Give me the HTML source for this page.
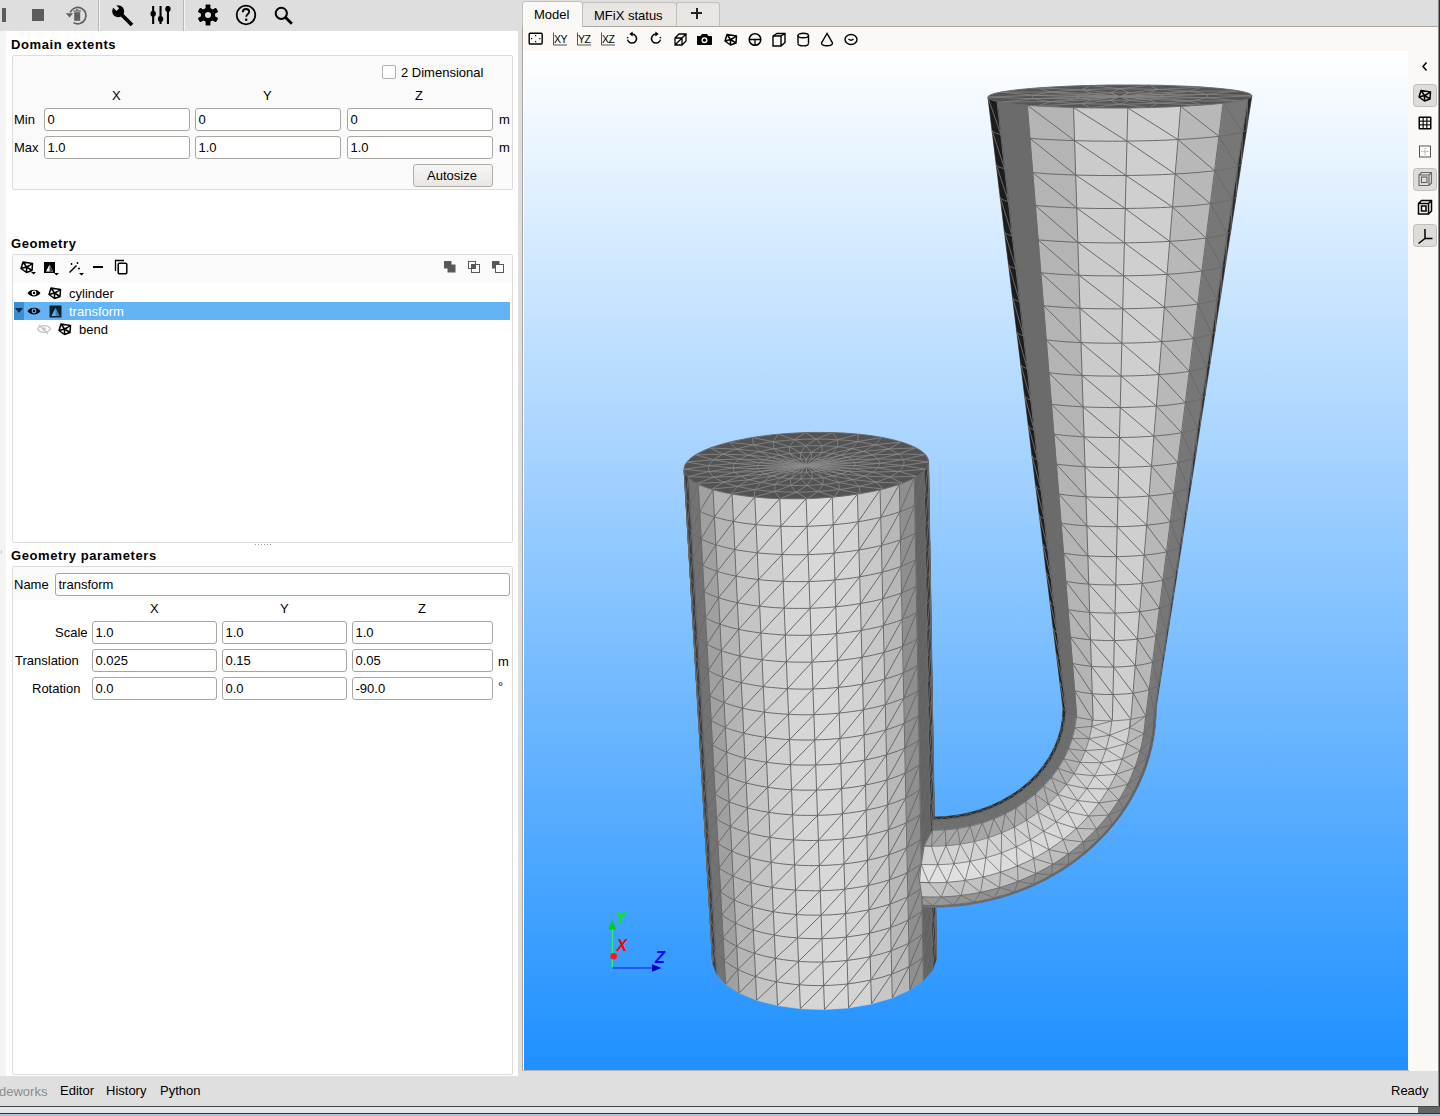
<!DOCTYPE html>
<html><head><meta charset="utf-8">
<style>
*{box-sizing:border-box}
html,body{margin:0;padding:0}
body{width:1440px;height:1116px;position:relative;overflow:hidden;background:#dfdfdf;font-family:"Liberation Sans",sans-serif;font-size:13px;color:#000}
.a{position:absolute}
.t{position:absolute;white-space:nowrap;line-height:1}
.b{font-weight:bold;letter-spacing:0.6px}
.inp{position:absolute;background:#fff;border:1px solid #a9a6a2;border-radius:3px;height:23px}
.inp span{position:absolute;left:2.5px;top:4px;line-height:1;white-space:nowrap}
.grp{position:absolute;background:#fafafa;border:1px solid #dcdcdc;border-radius:2px}
svg{position:absolute;overflow:visible}
</style></head><body>
<svg width="0" height="0" style="position:absolute;left:0;top:0"><defs>
<symbol id="poly" viewBox="0 0 16 16"><path d="M4 3 L13.5 4.5 L13 11.5 L7.5 13.5 L2 9.5 Z M7.5 8 L4 3 M7.5 8 L13 11.5 M7.5 8 L7.5 13.5 M7.5 8 L2 9.5 M7.5 8 L10.5 6.5 L13.5 4.5" fill="none" stroke="#000" stroke-width="1.5" stroke-linejoin="round"/></symbol>
</defs></svg>
<!-- top toolbar -->
<div class="a" style="left:0;top:0;width:522px;height:31px;background:#dedede"></div>
<div class="a" style="left:2px;top:8px;width:4px;height:14px;background:#5c5c5c"></div>
<div class="a" style="left:32px;top:9px;width:12px;height:12px;background:#5c5c5c"></div>
<svg style="left:64px;top:2.5px" width="24" height="24" viewBox="0 0 24 24">
 <path d="M6.2 9.5 A8.2 8.2 0 1 1 9.5 19.6" fill="none" stroke="#606060" stroke-width="1.7"/>
 <path d="M1.8 10.2 L9.2 10.2 L5.5 14.6 Z" fill="#606060"/>
 <rect x="10.2" y="9.2" width="6" height="8.6" fill="#606060"/>
 <rect x="9.4" y="7.4" width="7.6" height="1.2" fill="#606060"/>
 <rect x="11.8" y="6.4" width="2.8" height="1" fill="#606060"/>
</svg>
<div class="a" style="left:98px;top:0;width:1px;height:31px;background:#b8b8b8"></div>
<div class="a" style="left:99px;top:0;width:1px;height:31px;background:#f4f4f4"></div>
<div class="a" style="left:183px;top:0;width:1px;height:31px;background:#b8b8b8"></div>
<div class="a" style="left:184px;top:0;width:1px;height:31px;background:#f4f4f4"></div>
<!-- wrench -->
<svg style="left:111px;top:4px" width="24" height="23" viewBox="0 0 24 23">
 <path d="M9 9 L21 21" stroke="#000" stroke-width="3.8" stroke-linecap="butt"/>
 <circle cx="7.2" cy="7.2" r="6" fill="#000"/>
 <path d="M1 2.5 L5.5 7 L8.2 4.3 L3.7 -0.2 Z" fill="#dedede"/>
</svg>
<!-- sliders -->
<svg style="left:150px;top:5px" width="22" height="20" viewBox="0 0 22 20">
 <rect x="2.1" y="1" width="2.1" height="18" fill="#000"/><ellipse cx="3.15" cy="8.8" rx="2.7" ry="3" fill="#000"/>
 <rect x="9.5" y="1" width="2.1" height="18" fill="#000"/><ellipse cx="10.55" cy="14" rx="2.7" ry="3" fill="#000"/>
 <rect x="16.9" y="1" width="2.1" height="18" fill="#000"/><ellipse cx="17.95" cy="4" rx="2.7" ry="3" fill="#000"/>
</svg>
<!-- gear -->
<svg style="left:197px;top:4px" width="22" height="22" viewBox="0 0 22 22">
 <g transform="translate(11 11)" fill="#000">
  <circle r="7.2"/>
  <rect x="-2.4" y="-10.5" width="4.8" height="21" rx="0.8"/>
  <rect x="-2.4" y="-10.5" width="4.8" height="21" rx="0.8" transform="rotate(60)"/>
  <rect x="-2.4" y="-10.5" width="4.8" height="21" rx="0.8" transform="rotate(120)"/>
 </g>
 <circle cx="11" cy="11" r="3" fill="#dedede"/>
</svg>
<!-- help -->
<svg style="left:235px;top:4px" width="22" height="22" viewBox="0 0 22 22">
 <circle cx="11" cy="11" r="9.3" fill="none" stroke="#000" stroke-width="1.8"/>
 <path d="M7.8 8.3 C7.8 6 9.3 5 11 5 C12.9 5 14.2 6.2 14.2 7.8 C14.2 10 11.2 10.3 11.2 12.8" fill="none" stroke="#000" stroke-width="1.9"/>
 <rect x="10.1" y="14.6" width="2.2" height="2.2" fill="#000"/>
</svg>
<!-- search -->
<svg style="left:274px;top:6px" width="20" height="19" viewBox="0 0 20 19">
 <circle cx="7.3" cy="7.3" r="5.6" fill="none" stroke="#000" stroke-width="2"/>
 <path d="M11.3 11.3 L17.8 17.8" stroke="#000" stroke-width="2.8"/>
</svg>
<!-- left panel -->
<div class="a" style="left:0;top:31px;width:6px;height:1045px;background:#f4f4f4"></div>
<div class="a" style="left:6px;top:31px;width:512px;height:1045px;background:#fff"></div>
<div class="a" style="left:518px;top:31px;width:4px;height:1045px;background:#dedede"></div>
<div class="t b" style="left:11px;top:38px;font-size:13px">Domain extents</div>
<div class="grp" style="left:12px;top:55px;width:501px;height:135px"></div>
<div class="a" style="left:382px;top:65px;width:14px;height:14px;border:1px solid #b4b0ac;border-radius:2px;background:#fff"></div>
<div class="t" style="left:401px;top:66px">2 Dimensional</div>
<div class="t" style="left:112px;top:89px">X</div>
<div class="t" style="left:263px;top:89px">Y</div>
<div class="t" style="left:415px;top:89px">Z</div>
<div class="t" style="left:14px;top:113px">Min</div>
<div class="t" style="left:14px;top:141px">Max</div>
<div class="inp" style="left:44px;top:108px;width:146px"><span>0</span></div>
<div class="inp" style="left:195px;top:108px;width:146px"><span>0</span></div>
<div class="inp" style="left:347px;top:108px;width:146px"><span>0</span></div>
<div class="inp" style="left:44px;top:136px;width:146px"><span>1.0</span></div>
<div class="inp" style="left:195px;top:136px;width:146px"><span>1.0</span></div>
<div class="inp" style="left:347px;top:136px;width:146px"><span>1.0</span></div>
<div class="t" style="left:499px;top:113px">m</div>
<div class="t" style="left:499px;top:141px">m</div>
<div class="a" style="left:413px;top:164px;width:80px;height:23px;border:1px solid #b0ada9;border-radius:3px;background:linear-gradient(#f6f5f4,#e9e7e4)"></div>
<div class="t" style="left:427px;top:169px">Autosize</div>

<div class="t b" style="left:11px;top:237px;font-size:13px">Geometry</div>
<div class="a" style="left:12px;top:254px;width:501px;height:289px;border:1px solid #dcdcdc;border-radius:2px;background:#fff"></div>
<div class="a" style="left:13px;top:255px;width:499px;height:28px;background:#fafafa"></div>
<!-- geometry toolbar icons -->
<svg style="left:19px;top:259px" width="19" height="17" viewBox="0 0 19 17">
 <use href="#poly" x="0" y="0" width="16" height="16"/>
 <path d="M12 13 L17 13 L14.5 15.5 Z" fill="#000"/>
</svg>
<svg style="left:43px;top:261px" width="18" height="15" viewBox="0 0 18 15">
 <rect x="1" y="1" width="11" height="11" fill="#000"/>
 <path d="M3 10.5 L6.5 3.5 L10 10.5 Z" fill="#fff"/>
 <path d="M6.5 3.5 L10 10.5 L6.5 10.5 Z" fill="#444"/>
 <path d="M11 12 L16 12 L13.5 14.5 Z" fill="#000"/>
</svg>
<svg style="left:68px;top:261px" width="17" height="15" viewBox="0 0 17 15">
 <path d="M1.5 11.5 L8.5 4.5" stroke="#000" stroke-width="1.5"/>
 <path d="M3.5 2 L3.5 4 M2.5 3 L4.5 3 M9.5 1 L9.5 3 M8.5 2 L10.5 2 M11 6.5 L11 8.5 M10 7.5 L12 7.5" stroke="#000" stroke-width="0.9"/>
 <path d="M11 12 L16 12 L13.5 14.5 Z" fill="#000"/>
</svg>
<div class="a" style="left:93px;top:266px;width:10px;height:2px;background:#000"></div>
<svg style="left:114px;top:259px" width="15" height="16" viewBox="0 0 15 16">
 <path d="M1.5 12 L1.5 1.5 L10 1.5" fill="none" stroke="#000" stroke-width="1.3"/>
 <rect x="4.2" y="4.2" width="8.6" height="10.6" rx="1.2" fill="none" stroke="#000" stroke-width="1.5"/>
</svg>
<svg style="left:443px;top:260px" width="14" height="14" viewBox="0 0 14 14">
 <rect x="1" y="1" width="7.5" height="7.5" fill="#585858"/><rect x="4.5" y="4.5" width="8" height="8" fill="#585858"/>
</svg>
<svg style="left:467px;top:260px" width="14" height="14" viewBox="0 0 14 14">
 <rect x="1.5" y="1.5" width="7" height="7" fill="none" stroke="#585858" stroke-width="1"/>
 <rect x="4.5" y="4.5" width="8" height="8" fill="none" stroke="#585858" stroke-width="1"/>
 <rect x="4.5" y="4.5" width="4" height="4" fill="#585858"/>
</svg>
<svg style="left:491px;top:260px" width="14" height="14" viewBox="0 0 14 14">
 <rect x="1" y="1" width="7.5" height="7.5" fill="#585858"/>
 <rect x="4.5" y="4.5" width="8" height="8" fill="#fff" stroke="#585858" stroke-width="1"/>
</svg>
<!-- tree rows -->
<svg style="left:27px;top:288px" width="14" height="10" viewBox="0 0 14 10">
 <path d="M0.5 5 C3 0.5 11 0.5 13.5 5 C11 9.5 3 9.5 0.5 5 Z" fill="#000"/>
 <circle cx="7" cy="5" r="2.4" fill="#fff"/><circle cx="7" cy="5" r="1.2" fill="#000"/>
</svg>
<svg style="left:47px;top:285px" width="16" height="16" viewBox="0 0 16 16"><use href="#poly" width="16" height="16"/></svg>
<div class="t" style="left:69px;top:287px">cylinder</div>
<div class="a" style="left:14px;top:302px;width:496px;height:18px;background:#64b3f4"></div>
<div class="a" style="left:14px;top:302px;width:10px;height:18px;background:#3d8fd3"></div>
<svg style="left:14px;top:307px" width="10" height="8" viewBox="0 0 10 8"><path d="M1 1 L9 1 L5 6 Z" fill="#0a2a4a"/></svg>
<svg style="left:27px;top:306px" width="14" height="10" viewBox="0 0 14 10">
 <path d="M0.5 5 C3 0.5 11 0.5 13.5 5 C11 9.5 3 9.5 0.5 5 Z" fill="#000"/>
 <circle cx="7" cy="5" r="2.4" fill="#64b3f4"/><circle cx="7" cy="5" r="1.2" fill="#000"/>
</svg>
<svg style="left:49px;top:305px" width="13" height="13" viewBox="0 0 13 13">
 <rect x="0.5" y="0.5" width="12" height="12" fill="#0d2233"/>
 <path d="M2.5 11 L6.5 3 L10.5 11 Z" fill="#64b3f4"/><path d="M6.5 3 L10.5 11 L6.5 11 Z" fill="#3b7fb8"/>
</svg>
<div class="t" style="left:69px;top:305px;color:#fff">transform</div>
<svg style="left:37px;top:324px" width="14" height="11" viewBox="0 0 14 11">
 <path d="M0.5 5 C3 0.5 11 0.5 13.5 5 C11 9.5 3 9.5 0.5 5 Z" fill="none" stroke="#c4c4c4" stroke-width="1.4"/>
 <circle cx="7" cy="5" r="1.8" fill="#c4c4c4"/><path d="M2 1 L11 10" stroke="#c4c4c4" stroke-width="1.3"/>
</svg>
<svg style="left:57px;top:321px" width="16" height="16" viewBox="0 0 16 16"><use href="#poly" width="16" height="16"/></svg>
<div class="t" style="left:79px;top:323px">bend</div>
<!-- splitter dots -->
<div class="a" style="left:255px;top:544px;width:17px;height:1px;background:repeating-linear-gradient(90deg,#9a9a9a 0 1px,transparent 1px 3px)"></div>
<div class="t" style="left:0px;top:548px;font-size:9px;color:#bbb">&lsaquo;</div>

<div class="t b" style="left:11px;top:549px;font-size:13px">Geometry parameters</div>
<div class="a" style="left:12px;top:566px;width:501px;height:509px;border:1px solid #dcdcdc;border-radius:2px;background:#fff"></div>
<div class="a" style="left:13px;top:567px;width:499px;height:33px;background:#fafafa"></div>
<div class="t" style="left:14px;top:578px">Name</div>
<div class="inp" style="left:55px;top:573px;width:455px"><span>transform</span></div>
<div class="t" style="left:150px;top:602px">X</div>
<div class="t" style="left:280px;top:602px">Y</div>
<div class="t" style="left:418px;top:602px">Z</div>
<div class="t" style="left:55px;top:626px">Scale</div>
<div class="t" style="left:15px;top:654px">Translation</div>
<div class="t" style="left:32px;top:682px">Rotation</div>
<div class="inp" style="left:92px;top:621px;width:125px"><span>1.0</span></div>
<div class="inp" style="left:222px;top:621px;width:125px"><span>1.0</span></div>
<div class="inp" style="left:352px;top:621px;width:141px"><span>1.0</span></div>
<div class="inp" style="left:92px;top:649px;width:125px"><span>0.025</span></div>
<div class="inp" style="left:222px;top:649px;width:125px"><span>0.15</span></div>
<div class="inp" style="left:352px;top:649px;width:141px"><span>0.05</span></div>
<div class="inp" style="left:92px;top:677px;width:125px"><span>0.0</span></div>
<div class="inp" style="left:222px;top:677px;width:125px"><span>0.0</span></div>
<div class="inp" style="left:352px;top:677px;width:141px"><span>-90.0</span></div>
<div class="t" style="left:498px;top:655px">m</div>
<div class="t" style="left:498px;top:680px">°</div>
<!-- tabs -->
<div class="a" style="left:522px;top:0;width:918px;height:26px;background:#dedede"></div>
<div class="a" style="left:582px;top:2px;width:95px;height:25px;background:#e8e5e2;border:1px solid #c3bfbb;border-bottom:none;border-radius:3px 3px 0 0"></div>
<div class="a" style="left:676px;top:2px;width:44px;height:25px;background:#e8e5e2;border:1px solid #c3bfbb;border-bottom:none;border-radius:3px 3px 0 0"></div>
<div class="a" style="left:522px;top:26px;width:918px;height:1px;background:#a9a6a3"></div>
<div class="a" style="left:522px;top:1px;width:61px;height:27px;background:#fbf9f7;border:1px solid #c3bfbb;border-bottom:none;border-radius:3px 3px 0 0"></div>
<div class="t" style="left:534px;top:8px">Model</div>
<div class="t" style="left:594px;top:9px">MFiX status</div>
<div class="a" style="left:691px;top:12px;width:11px;height:2px;background:#222"></div>
<div class="a" style="left:695.5px;top:7.5px;width:2px;height:11px;background:#222"></div>
<!-- viewport toolbar -->
<div class="a" style="left:522px;top:27px;width:918px;height:1044px;background:#fbf8f6;border-left:1px solid #a8a4a0"></div>
<svg style="left:528px;top:32px" width="340" height="16" viewBox="0 0 340 16">
 <g fill="none" stroke="#000">
  <rect x="1.2" y="1.2" width="13" height="10.8" rx="1" stroke-width="1.4"/>
 </g>
 <g fill="#000"><rect x="7" y="3" width="1.2" height="1.2"/><rect x="7" y="9" width="1.2" height="1.2"/><rect x="3" y="6" width="1.2" height="1.2"/><rect x="11.2" y="6" width="1.2" height="1.2"/></g>
 <g fill="none" stroke="#555" stroke-width="1"><path d="M25.5 0.5 V13 H39"/><path d="M49.5 0.5 V13 H63"/><path d="M73.5 0.5 V13 H87"/></g>
 <g font-family="Liberation Sans" font-size="10.5" fill="#000" letter-spacing="-0.6">
  <text x="26" y="11">XY</text><text x="50" y="11">YZ</text><text x="74" y="11">XZ</text>
 </g>
 <g fill="none" stroke="#000" stroke-width="1.5">
  <path d="M104 2 A4.5 4.5 0 1 1 100.1 8.75"/>
  <path d="M100.1 8.75 A4.5 4.5 0 0 1 100.1 4.25" stroke-dasharray="1.3 1.3"/>
  <path d="M128 2 A4.5 4.5 0 1 0 131.9 8.75"/>
  <path d="M131.9 8.75 A4.5 4.5 0 0 0 131.9 4.25" stroke-dasharray="1.3 1.3"/>
 </g>
 <path d="M101.3 2 L104.6 -0.6 L104.6 4.6 Z" fill="#000"/>
 <path d="M130.7 2 L127.4 -0.6 L127.4 4.6 Z" fill="#000"/>
 <g fill="none" stroke="#000" stroke-width="1.3">
  <path d="M147 6 L151 2 L158 2 L158 9 L154 13 L147 13 Z M147 6 L154 6 L158 2 M154 6 L154 13 M147 13 L158 2"/>
 </g>
 <path d="M169 4 L172.5 4 L174 2 L179 2 L180.5 4 L183 4 Q184 4 184 5 L184 12 Q184 13 183 13 L170 13 Q169 13 169 12 Z" fill="#000"/>
 <circle cx="176.5" cy="8.2" r="3" fill="#fff"/><circle cx="176.5" cy="8.2" r="1.6" fill="#000"/>
 <use href="#poly" x="195" y="-0.5" width="16" height="16"/>
 <g fill="none" stroke="#000" stroke-width="1.1">
  <circle cx="227" cy="7.5" r="5.8" stroke-width="1.5"/>
  <path d="M221.5 7.5 H232.5 M227 7.5 V13" stroke-width="1.3"/>
  <path d="M245 4 L249 1.5 L257 1.5 L257 10.5 L253 14 L245 14 Z M245 4 L253 4 L257 1.5 M253 4 L253 14" stroke-width="1.4"/>
  <path d="M270 3.5 V11.5 M280.5 3.5 V11.5" stroke-width="1.4"/>
  <ellipse cx="275.25" cy="3.5" rx="5.25" ry="2.2" stroke-width="1.4"/>
  <path d="M270 11.5 A5.25 2.4 0 0 0 280.5 11.5" stroke-width="1.4"/>
  <path d="M299 1.5 L293.5 11 A5.2 2.6 0 0 0 304.5 11 Z" stroke-width="1.4"/>
  <ellipse cx="323" cy="7.5" rx="6" ry="5" stroke-width="1.4"/>
  <path d="M320.5 7 Q323 9.5 325.5 7" stroke-width="1.3"/>
 </g>
</svg>
<!-- right toolbar icons -->
<svg style="left:1410px;top:56px" width="30" height="196" viewBox="0 0 30 196">
 <path d="M16.5 6.5 L13 10.5 L16.5 14.5" fill="none" stroke="#000" stroke-width="1.5"/>
 <rect x="3.5" y="28.5" width="23" height="22" rx="3" fill="#dedbd8" stroke="#c2beba"/>
 <use href="#poly" x="7" y="31.5" width="16" height="16"/>
 <rect x="8.5" y="60.5" width="13" height="13" rx="1" fill="#000"/>
 <g fill="#fbf8f6"><rect x="10" y="62" width="2.6" height="2.6"/><rect x="13.7" y="62" width="2.6" height="2.6"/><rect x="17.4" y="62" width="2.6" height="2.6"/><rect x="10" y="65.7" width="2.6" height="2.6"/><rect x="13.7" y="65.7" width="2.6" height="2.6"/><rect x="17.4" y="65.7" width="2.6" height="2.6"/><rect x="10" y="69.4" width="2.6" height="2.6"/><rect x="13.7" y="69.4" width="2.6" height="2.6"/><rect x="17.4" y="69.4" width="2.6" height="2.6"/></g>
 <rect x="9.5" y="90" width="11" height="11" fill="none" stroke="#555" stroke-width="1"/>
 <path d="M15 92 V99 M11.5 95.5 H18.5" stroke="#999" stroke-width="1" stroke-dasharray="1 1"/>
 <rect x="3.5" y="112.5" width="23" height="22" rx="3" fill="#dedbd8" stroke="#c2beba"/>
 <g fill="none" stroke="#666" stroke-width="1.1"><path d="M9 119 L11.5 116.5 L21.5 116.5 L21.5 127 L19 129.5 L9 129.5 Z M9 119 L19 119 L21.5 116.5 M19 119 L19 129.5"/><rect x="11.5" y="121" width="5.5" height="5.5"/></g>
 <g fill="none" stroke="#000" stroke-width="1.5"><path d="M8.5 147.5 L11.5 144.5 L21.5 144.5 L21.5 155 L18.5 158 L8.5 158 Z M8.5 147.5 L18.5 147.5 L21.5 144.5 M18.5 147.5 L18.5 158"/><rect x="11.5" y="150" width="4.5" height="5"/></g>
 <rect x="3.5" y="168.5" width="23" height="22" rx="3" fill="#dedbd8" stroke="#c2beba"/>
 <path d="M15 173 V182.5 L22.5 182.5 M15 182.5 L8.5 187.5" fill="none" stroke="#000" stroke-width="1.5"/>
</svg>
<!-- status bar -->
<div class="a" style="left:0;top:1076px;width:1440px;height:30px;background:#dfdfdf"></div>
<div class="t" style="left:-1px;top:1085px;color:#8c8c8c">deworks</div>
<div class="t" style="left:60px;top:1084px">Editor</div>
<div class="t" style="left:106px;top:1084px">History</div>
<div class="t" style="left:160px;top:1084px">Python</div>
<div class="t" style="left:1391px;top:1084px">Ready</div>
<div class="a" style="left:0;top:1106px;width:1440px;height:1px;background:#444"></div>
<div class="a" style="left:1438px;top:0;width:1px;height:1107px;background:#8a8a8a"></div>
<div class="a" style="left:1439px;top:0;width:1px;height:1107px;background:#2e2e2e"></div>
<div class="a" style="left:0;top:1107px;width:1418px;height:6px;background:#e6e6e6"></div>
<div class="a" style="left:1418px;top:1107px;width:22px;height:6px;background:#666660"></div>
<div class="a" style="left:0;top:1113px;width:1440px;height:1px;background:#333"></div>
<div class="a" style="left:0;top:1114px;width:1440px;height:2px;background:#a8c8e0"></div>
<svg style="left:524px;top:51px" width="884" height="1019" viewBox="524 51 884 1019">
<defs><linearGradient id="bg" x1="0" y1="0" x2="0" y2="1"><stop offset="0" stop-color="#ffffff"/><stop offset="1" stop-color="#1e90ff"/></linearGradient></defs>
<rect x="524" y="51" width="884" height="1019" fill="url(#bg)"/>
<path d="M1251.9,95.8 L1246.7,129.0 L1241.3,163.3 L1236.2,196.3 L1230.8,230.6 L1225.6,263.5 L1220.5,296.5 L1215.1,330.8 L1210.0,363.6 L1205.0,395.1 L1200.3,425.0 L1195.7,454.9 L1191.0,484.9 L1186.4,514.0 L1181.7,543.9 L1177.3,572.2 L1172.9,600.3 L1168.6,627.7 L1164.4,654.2 L1160.1,681.6 L1156.0,708.0 L1154.5,711.3 L1158.5,684.8 L1162.7,657.4 L1166.7,631.0 L1170.9,603.5 L1175.2,575.4 L1179.5,547.1 L1184.0,517.2 L1188.5,488.0 L1193.0,458.1 L1197.6,428.1 L1202.1,398.2 L1206.9,366.7 L1211.9,333.9 L1217.1,299.5 L1222.1,266.6 L1227.2,233.6 L1232.4,199.2 L1237.4,166.3 L1242.6,131.9 L1247.7,98.7 Z" fill="#282828" stroke="#282828" stroke-width="0.6"/>
<path d="M1247.7,98.7 L1242.6,131.9 L1237.4,166.3 L1232.4,199.2 L1227.2,233.6 L1222.1,266.6 L1217.1,299.5 L1211.9,333.9 L1206.9,366.7 L1202.1,398.2 L1197.6,428.1 L1193.0,458.1 L1188.5,488.0 L1184.0,517.2 L1179.5,547.1 L1175.2,575.4 L1170.9,603.5 L1166.7,631.0 L1162.7,657.4 L1158.5,684.8 L1154.5,711.3 L1145.8,716.1 L1149.2,689.6 L1152.6,662.2 L1156.0,635.7 L1159.4,608.3 L1163.0,580.1 L1166.6,551.8 L1170.3,521.9 L1174.0,492.7 L1177.8,462.7 L1181.6,432.7 L1185.3,402.8 L1189.3,371.3 L1193.5,338.4 L1197.8,304.0 L1201.9,271.1 L1206.1,238.1 L1210.4,203.7 L1214.6,170.7 L1218.9,136.3 L1223.1,103.1 Z" fill="#777777" stroke="#777777" stroke-width="0.6"/>
<path d="M1223.1,103.1 L1218.9,136.3 L1214.6,170.7 L1210.4,203.7 L1206.1,238.1 L1201.9,271.1 L1197.8,304.0 L1193.5,338.4 L1189.3,371.3 L1185.3,402.8 L1181.6,432.7 L1177.8,462.7 L1174.0,492.7 L1170.3,521.9 L1166.6,551.8 L1163.0,580.1 L1159.4,608.3 L1156.0,635.7 L1152.6,662.2 L1149.2,689.6 L1145.8,716.1 L1130.9,719.5 L1133.1,693.1 L1135.3,665.6 L1137.4,639.1 L1139.7,611.6 L1142.0,583.5 L1144.3,555.2 L1146.7,525.2 L1149.1,496.0 L1151.5,466.0 L1153.9,436.1 L1156.4,406.1 L1158.9,374.6 L1161.6,341.7 L1164.4,307.3 L1167.1,274.3 L1169.7,241.4 L1172.5,207.0 L1175.2,174.0 L1178.0,139.6 L1180.7,106.4 Z" fill="#b8b8b8" stroke="#b8b8b8" stroke-width="0.6"/>
<path d="M1180.7,106.4 L1178.0,139.6 L1175.2,174.0 L1172.5,207.0 L1169.7,241.4 L1167.1,274.3 L1164.4,307.3 L1161.6,341.7 L1158.9,374.6 L1156.4,406.1 L1153.9,436.1 L1151.5,466.0 L1149.1,496.0 L1146.7,525.2 L1144.3,555.2 L1142.0,583.5 L1139.7,611.6 L1137.4,639.1 L1135.3,665.6 L1133.1,693.1 L1130.9,719.5 L1112.3,721.0 L1112.9,694.5 L1113.6,667.0 L1114.3,640.5 L1115.0,613.1 L1115.7,584.9 L1116.4,556.6 L1117.2,526.6 L1117.9,497.5 L1118.7,467.5 L1119.4,437.5 L1120.2,407.5 L1121.0,376.0 L1121.8,343.2 L1122.7,308.8 L1123.5,275.8 L1124.4,242.8 L1125.2,208.5 L1126.1,175.5 L1126.9,141.1 L1127.8,107.9 Z" fill="#cfcfcf" stroke="#cfcfcf" stroke-width="0.6"/>
<path d="M1127.8,107.9 L1126.9,141.1 L1126.1,175.5 L1125.2,208.5 L1124.4,242.8 L1123.5,275.8 L1122.7,308.8 L1121.8,343.2 L1121.0,376.0 L1120.2,407.5 L1119.4,437.5 L1118.7,467.5 L1117.9,497.5 L1117.2,526.6 L1116.4,556.6 L1115.7,584.9 L1115.0,613.1 L1114.3,640.5 L1113.6,667.0 L1112.9,694.5 L1112.3,721.0 L1093.1,720.2 L1092.3,693.7 L1091.4,666.2 L1090.6,639.8 L1089.7,612.3 L1088.8,584.1 L1087.9,555.9 L1086.9,525.9 L1086.0,496.7 L1085.0,466.8 L1084.1,436.8 L1083.1,406.9 L1082.1,375.4 L1081.0,342.5 L1079.9,308.2 L1078.9,275.2 L1077.8,242.3 L1076.7,207.9 L1075.7,175.0 L1074.6,140.7 L1073.5,107.5 Z" fill="#cbcbcb" stroke="#cbcbcb" stroke-width="0.6"/>
<path d="M1073.5,107.5 L1074.6,140.7 L1075.7,175.0 L1076.7,207.9 L1077.8,242.3 L1078.9,275.2 L1079.9,308.2 L1081.0,342.5 L1082.1,375.4 L1083.1,406.9 L1084.1,436.8 L1085.0,466.8 L1086.0,496.7 L1086.9,525.9 L1087.9,555.9 L1088.8,584.1 L1089.7,612.3 L1090.6,639.8 L1091.4,666.2 L1092.3,693.7 L1093.1,720.2 L1076.8,717.3 L1074.7,690.8 L1072.5,663.4 L1070.3,636.9 L1068.1,609.5 L1065.8,581.3 L1063.6,553.1 L1061.1,523.1 L1058.8,494.0 L1056.3,464.1 L1053.9,434.1 L1051.5,404.2 L1048.9,372.8 L1046.3,340.0 L1043.5,305.6 L1040.8,272.7 L1038.2,239.8 L1035.4,205.5 L1032.7,172.6 L1029.9,138.3 L1027.3,105.2 Z" fill="#b4b4b4" stroke="#b4b4b4" stroke-width="0.6"/>
<path d="M1027.3,105.2 L1029.9,138.3 L1032.7,172.6 L1035.4,205.5 L1038.2,239.8 L1040.8,272.7 L1043.5,305.6 L1046.3,340.0 L1048.9,372.8 L1051.5,404.2 L1053.9,434.1 L1056.3,464.1 L1058.8,494.0 L1061.1,523.1 L1063.6,553.1 L1065.8,581.3 L1068.1,609.5 L1070.3,636.9 L1072.5,663.4 L1074.7,690.8 L1076.8,717.3 L1066.2,712.7 L1063.2,686.3 L1060.1,658.9 L1057.1,632.5 L1054.0,605.1 L1050.8,576.9 L1047.7,548.7 L1044.3,518.8 L1041.0,489.7 L1037.6,459.8 L1034.2,429.9 L1030.8,400.0 L1027.3,368.6 L1023.6,335.8 L1019.7,301.6 L1016.0,268.7 L1012.2,235.8 L1008.4,201.5 L1004.6,168.7 L1000.8,134.4 L997.0,101.3 Z" fill="#6b6b6b" stroke="#6b6b6b" stroke-width="0.6"/>
<path d="M997.0,101.3 L1000.8,134.4 L1004.6,168.7 L1008.4,201.5 L1012.2,235.8 L1016.0,268.7 L1019.7,301.6 L1023.6,335.8 L1027.3,368.6 L1030.8,400.0 L1034.2,429.9 L1037.6,459.8 L1041.0,489.7 L1044.3,518.8 L1047.7,548.7 L1050.8,576.9 L1054.0,605.1 L1057.1,632.5 L1060.1,658.9 L1063.2,686.3 L1066.2,712.7 L1063.0,708.0 L1059.8,681.6 L1056.4,654.2 L1053.1,627.8 L1049.8,600.4 L1046.3,572.3 L1042.9,544.1 L1039.2,514.3 L1035.6,485.2 L1031.9,455.3 L1028.3,425.4 L1024.6,395.6 L1020.7,364.2 L1016.7,331.5 L1012.5,297.2 L1008.5,264.4 L1004.4,231.5 L1000.2,197.3 L996.2,164.5 L992.0,130.2 L987.9,97.2 Z" fill="#1c1c1c" stroke="#1c1c1c" stroke-width="0.6"/>
<path d="M1246.7,129.0 L1246.5,129.6 L1246.0,130.2 L1245.1,130.8 L1243.9,131.4 L1242.4,132.0 L1240.5,132.6 L1238.3,133.2 L1235.7,133.7 L1232.9,134.3 L1229.7,134.8 L1226.2,135.4 L1222.4,135.9 L1218.4,136.4 L1214.0,136.9 L1209.4,137.3 L1204.6,137.8 L1199.5,138.2 L1194.3,138.6 L1188.8,139.0 L1183.1,139.3 L1177.2,139.6 L1171.2,139.9 L1165.0,140.2 L1158.8,140.4 L1152.4,140.6 L1145.9,140.8 L1139.3,140.9 L1132.7,141.0 L1126.1,141.1 L1119.4,141.2 L1112.7,141.2 L1106.1,141.2 L1099.5,141.1 L1092.9,141.1 L1086.4,140.9 L1080.0,140.8 L1073.7,140.6 L1067.6,140.4 L1061.6,140.2 L1055.7,139.9 L1050.0,139.6 L1044.5,139.3 L1039.2,139.0 L1034.2,138.6 L1029.3,138.2 L1024.7,137.8 L1020.4,137.4 L1016.3,136.9 L1012.5,136.4 L1009.1,135.9 L1005.9,135.4 L1003.0,134.9 L1000.4,134.3 L998.2,133.8 L996.3,133.2 L994.8,132.6 L993.5,132.0 L992.7,131.4 L992.1,130.8 L992.0,130.2 M1241.3,163.3 L1241.2,163.9 L1240.7,164.5 L1239.8,165.1 L1238.7,165.7 L1237.2,166.3 L1235.3,166.9 L1233.2,167.5 L1230.8,168.1 L1228.0,168.7 L1224.9,169.2 L1221.6,169.8 L1218.0,170.3 L1214.0,170.8 L1209.9,171.3 L1205.5,171.7 L1200.8,172.2 L1195.9,172.6 L1190.8,173.0 L1185.6,173.4 L1180.1,173.7 L1174.5,174.0 L1168.7,174.3 L1162.7,174.6 L1156.7,174.8 L1150.5,175.0 L1144.3,175.2 L1138.0,175.3 L1131.6,175.4 L1125.2,175.5 L1118.8,175.5 L1112.4,175.6 L1106.0,175.5 L1099.6,175.5 L1093.3,175.4 L1087.1,175.3 L1080.9,175.2 L1074.9,175.0 L1068.9,174.8 L1063.2,174.5 L1057.5,174.3 L1052.0,174.0 L1046.7,173.7 L1041.7,173.3 L1036.8,172.9 L1032.1,172.5 L1027.7,172.1 L1023.5,171.7 L1019.6,171.2 L1016.0,170.7 L1012.6,170.2 L1009.6,169.7 L1006.8,169.1 L1004.3,168.6 L1002.2,168.0 L1000.4,167.5 L998.9,166.9 L997.7,166.3 L996.9,165.7 L996.3,165.1 L996.2,164.5 M1236.2,196.3 L1236.0,196.9 L1235.5,197.5 L1234.7,198.1 L1233.6,198.7 L1232.2,199.3 L1230.4,199.9 L1228.4,200.5 L1226.0,201.1 L1223.3,201.6 L1220.4,202.2 L1217.2,202.7 L1213.7,203.3 L1209.9,203.8 L1205.9,204.2 L1201.7,204.7 L1197.2,205.2 L1192.5,205.6 L1187.6,206.0 L1182.5,206.3 L1177.2,206.7 L1171.8,207.0 L1166.2,207.3 L1160.5,207.6 L1154.7,207.8 L1148.8,208.0 L1142.8,208.2 L1136.7,208.3 L1130.6,208.4 L1124.4,208.5 L1118.2,208.5 L1112.1,208.5 L1105.9,208.5 L1099.8,208.5 L1093.7,208.4 L1087.7,208.3 L1081.8,208.1 L1076.0,207.9 L1070.3,207.7 L1064.7,207.5 L1059.2,207.2 L1054.0,206.9 L1048.9,206.6 L1044.0,206.2 L1039.3,205.8 L1034.8,205.4 L1030.6,205.0 L1026.5,204.6 L1022.8,204.1 L1019.3,203.6 L1016.0,203.1 L1013.1,202.6 L1010.4,202.0 L1008.1,201.5 L1006.0,200.9 L1004.2,200.3 L1002.8,199.7 L1001.7,199.1 L1000.9,198.5 L1000.4,197.9 L1000.2,197.3 M1230.8,230.6 L1230.6,231.2 L1230.2,231.8 L1229.4,232.5 L1228.3,233.1 L1227.0,233.7 L1225.3,234.3 L1223.3,234.9 L1221.0,235.4 L1218.5,236.0 L1215.7,236.6 L1212.6,237.1 L1209.2,237.6 L1205.6,238.1 L1201.8,238.6 L1197.7,239.1 L1193.4,239.5 L1188.9,240.0 L1184.2,240.4 L1179.3,240.7 L1174.2,241.1 L1169.0,241.4 L1163.7,241.7 L1158.2,241.9 L1152.6,242.2 L1147.0,242.4 L1141.2,242.5 L1135.4,242.7 L1129.5,242.8 L1123.6,242.8 L1117.7,242.9 L1111.7,242.9 L1105.8,242.9 L1100.0,242.8 L1094.1,242.7 L1088.4,242.6 L1082.7,242.5 L1077.1,242.3 L1071.6,242.1 L1066.3,241.8 L1061.1,241.5 L1056.0,241.2 L1051.1,240.9 L1046.4,240.5 L1041.9,240.2 L1037.6,239.8 L1033.5,239.3 L1029.7,238.9 L1026.1,238.4 L1022.7,237.9 L1019.6,237.4 L1016.8,236.8 L1014.2,236.3 L1012.0,235.7 L1010.0,235.2 L1008.3,234.6 L1006.9,234.0 L1005.8,233.4 L1005.1,232.8 L1004.6,232.1 L1004.4,231.5 M1225.6,263.5 L1225.5,264.2 L1225.0,264.8 L1224.3,265.4 L1223.3,266.0 L1221.9,266.6 L1220.3,267.2 L1218.4,267.8 L1216.3,268.4 L1213.8,269.0 L1211.1,269.6 L1208.1,270.1 L1204.9,270.6 L1201.5,271.1 L1197.8,271.6 L1193.9,272.1 L1189.7,272.5 L1185.4,272.9 L1180.9,273.3 L1176.2,273.7 L1171.4,274.1 L1166.4,274.4 L1161.3,274.7 L1156.0,274.9 L1150.7,275.2 L1145.2,275.4 L1139.7,275.5 L1134.1,275.7 L1128.4,275.8 L1122.8,275.8 L1117.1,275.9 L1111.4,275.9 L1105.7,275.8 L1100.1,275.8 L1094.5,275.7 L1089.0,275.6 L1083.5,275.4 L1078.2,275.2 L1072.9,275.0 L1067.8,274.8 L1062.8,274.5 L1057.9,274.2 L1053.3,273.8 L1048.8,273.5 L1044.4,273.1 L1040.3,272.7 L1036.4,272.2 L1032.7,271.8 L1029.2,271.3 L1026.0,270.8 L1023.0,270.3 L1020.3,269.7 L1017.9,269.2 L1015.7,268.6 L1013.8,268.0 L1012.2,267.4 L1010.8,266.8 L1009.8,266.2 L1009.1,265.6 L1008.6,265.0 L1008.5,264.4 M1220.5,296.5 L1220.3,297.1 L1219.9,297.7 L1219.2,298.4 L1218.2,299.0 L1216.9,299.6 L1215.4,300.2 L1213.6,300.8 L1211.5,301.4 L1209.2,302.0 L1206.6,302.5 L1203.7,303.1 L1200.6,303.6 L1197.3,304.1 L1193.8,304.6 L1190.1,305.1 L1186.1,305.5 L1182.0,305.9 L1177.6,306.3 L1173.2,306.7 L1168.5,307.0 L1163.7,307.4 L1158.8,307.7 L1153.8,307.9 L1148.7,308.1 L1143.4,308.3 L1138.2,308.5 L1132.8,308.6 L1127.4,308.7 L1122.0,308.8 L1116.5,308.8 L1111.1,308.8 L1105.7,308.8 L1100.3,308.7 L1094.9,308.7 L1089.6,308.5 L1084.4,308.4 L1079.3,308.2 L1074.2,307.9 L1069.3,307.7 L1064.5,307.4 L1059.9,307.1 L1055.4,306.8 L1051.1,306.4 L1046.9,306.0 L1043.0,305.6 L1039.2,305.1 L1035.7,304.7 L1032.4,304.2 L1029.3,303.7 L1026.5,303.2 L1023.9,302.6 L1021.5,302.1 L1019.4,301.5 L1017.6,300.9 L1016.1,300.3 L1014.8,299.7 L1013.8,299.1 L1013.1,298.5 L1012.7,297.8 L1012.5,297.2 M1215.1,330.8 L1215.0,331.4 L1214.6,332.1 L1213.9,332.7 L1212.9,333.3 L1211.7,333.9 L1210.3,334.6 L1208.5,335.2 L1206.5,335.8 L1204.3,336.3 L1201.8,336.9 L1199.1,337.4 L1196.2,338.0 L1193.0,338.5 L1189.7,339.0 L1186.1,339.4 L1182.3,339.9 L1178.4,340.3 L1174.2,340.7 L1170.0,341.1 L1165.5,341.4 L1161.0,341.7 L1156.3,342.0 L1151.5,342.3 L1146.6,342.5 L1141.6,342.7 L1136.6,342.9 L1131.5,343.0 L1126.3,343.1 L1121.1,343.2 L1115.9,343.2 L1110.8,343.2 L1105.6,343.2 L1100.4,343.1 L1095.3,343.0 L1090.3,342.9 L1085.3,342.7 L1080.4,342.5 L1075.6,342.3 L1070.9,342.0 L1066.3,341.8 L1061.9,341.4 L1057.6,341.1 L1053.5,340.7 L1049.6,340.3 L1045.8,339.9 L1042.2,339.5 L1038.8,339.0 L1035.7,338.5 L1032.7,338.0 L1030.0,337.4 L1027.5,336.9 L1025.3,336.3 L1023.3,335.8 L1021.6,335.2 L1020.1,334.6 L1018.9,334.0 L1017.9,333.3 L1017.3,332.7 L1016.9,332.1 L1016.7,331.5 M1210.0,363.6 L1209.8,364.3 L1209.4,364.9 L1208.8,365.6 L1207.9,366.2 L1206.7,366.8 L1205.3,367.4 L1203.7,368.0 L1201.8,368.6 L1199.7,369.2 L1197.3,369.8 L1194.7,370.3 L1191.9,370.8 L1188.9,371.4 L1185.7,371.9 L1182.3,372.3 L1178.7,372.8 L1174.9,373.2 L1171.0,373.6 L1166.9,374.0 L1162.7,374.3 L1158.3,374.6 L1153.9,374.9 L1149.3,375.2 L1144.6,375.4 L1139.9,375.6 L1135.1,375.8 L1130.2,375.9 L1125.3,376.0 L1120.3,376.1 L1115.4,376.1 L1110.4,376.1 L1105.5,376.0 L1100.6,376.0 L1095.7,375.9 L1090.9,375.7 L1086.2,375.6 L1081.5,375.4 L1076.9,375.1 L1072.4,374.9 L1068.1,374.6 L1063.9,374.3 L1059.8,373.9 L1055.8,373.5 L1052.1,373.1 L1048.5,372.7 L1045.1,372.3 L1041.8,371.8 L1038.8,371.3 L1036.0,370.8 L1033.4,370.2 L1031.1,369.7 L1028.9,369.1 L1027.0,368.5 L1025.4,367.9 L1024.0,367.3 L1022.8,366.7 L1021.9,366.1 L1021.3,365.5 L1020.9,364.8 L1020.7,364.2 M1205.0,395.1 L1204.9,395.7 L1204.5,396.4 L1203.9,397.0 L1203.1,397.6 L1202.0,398.3 L1200.6,398.9 L1199.1,399.5 L1197.2,400.1 L1195.2,400.7 L1193.0,401.2 L1190.5,401.8 L1187.8,402.3 L1185.0,402.8 L1181.9,403.3 L1178.6,403.8 L1175.2,404.3 L1171.6,404.7 L1167.9,405.1 L1164.0,405.5 L1160.0,405.8 L1155.8,406.1 L1151.5,406.4 L1147.2,406.7 L1142.7,406.9 L1138.2,407.1 L1133.6,407.2 L1129.0,407.4 L1124.3,407.5 L1119.6,407.5 L1114.9,407.6 L1110.1,407.6 L1105.4,407.5 L1100.7,407.4 L1096.1,407.3 L1091.5,407.2 L1087.0,407.0 L1082.5,406.8 L1078.2,406.6 L1073.9,406.3 L1069.7,406.0 L1065.7,405.7 L1061.8,405.4 L1058.1,405.0 L1054.5,404.6 L1051.0,404.1 L1047.8,403.7 L1044.7,403.2 L1041.8,402.7 L1039.2,402.2 L1036.7,401.6 L1034.4,401.1 L1032.4,400.5 L1030.6,399.9 L1029.0,399.3 L1027.7,398.7 L1026.6,398.1 L1025.7,397.5 L1025.1,396.8 L1024.7,396.2 L1024.6,395.6 M1200.3,425.0 L1200.2,425.7 L1199.9,426.3 L1199.3,426.9 L1198.5,427.6 L1197.4,428.2 L1196.1,428.8 L1194.6,429.4 L1192.9,430.0 L1191.0,430.6 L1188.8,431.2 L1186.5,431.8 L1183.9,432.3 L1181.2,432.8 L1178.3,433.3 L1175.2,433.8 L1171.9,434.2 L1168.5,434.7 L1164.9,435.1 L1161.2,435.4 L1157.4,435.8 L1153.4,436.1 L1149.3,436.4 L1145.2,436.6 L1140.9,436.9 L1136.6,437.1 L1132.2,437.2 L1127.8,437.3 L1123.3,437.4 L1118.8,437.5 L1114.3,437.5 L1109.8,437.5 L1105.3,437.5 L1100.9,437.4 L1096.5,437.3 L1092.1,437.2 L1087.8,437.0 L1083.5,436.8 L1079.3,436.6 L1075.3,436.3 L1071.3,436.0 L1067.5,435.7 L1063.8,435.3 L1060.2,434.9 L1056.8,434.5 L1053.5,434.1 L1050.4,433.6 L1047.5,433.1 L1044.7,432.6 L1042.2,432.1 L1039.8,431.6 L1037.7,431.0 L1035.7,430.4 L1034.0,429.8 L1032.5,429.2 L1031.2,428.6 L1030.2,428.0 L1029.3,427.4 L1028.7,426.7 L1028.4,426.1 L1028.3,425.4 M1195.7,454.9 L1195.5,455.6 L1195.2,456.2 L1194.7,456.9 L1193.9,457.5 L1192.9,458.2 L1191.7,458.8 L1190.2,459.4 L1188.6,460.0 L1186.7,460.6 L1184.7,461.2 L1182.5,461.7 L1180.0,462.3 L1177.4,462.8 L1174.6,463.3 L1171.7,463.8 L1168.6,464.2 L1165.3,464.6 L1161.9,465.0 L1158.4,465.4 L1154.8,465.8 L1151.0,466.1 L1147.1,466.4 L1143.2,466.6 L1139.1,466.8 L1135.0,467.0 L1130.8,467.2 L1126.6,467.3 L1122.4,467.4 L1118.1,467.5 L1113.8,467.5 L1109.5,467.5 L1105.3,467.5 L1101.0,467.4 L1096.8,467.3 L1092.6,467.1 L1088.5,467.0 L1084.5,466.7 L1080.5,466.5 L1076.7,466.2 L1072.9,465.9 L1069.2,465.6 L1065.7,465.2 L1062.3,464.9 L1059.0,464.4 L1055.9,464.0 L1053.0,463.5 L1050.2,463.1 L1047.6,462.5 L1045.2,462.0 L1042.9,461.5 L1040.9,460.9 L1039.0,460.3 L1037.4,459.7 L1036.0,459.1 L1034.7,458.5 L1033.7,457.9 L1033.0,457.2 L1032.4,456.6 L1032.1,456.0 L1031.9,455.3 M1191.0,484.9 L1190.9,485.5 L1190.5,486.2 L1190.0,486.8 L1189.3,487.5 L1188.3,488.1 L1187.2,488.7 L1185.8,489.4 L1184.3,490.0 L1182.5,490.6 L1180.6,491.1 L1178.4,491.7 L1176.1,492.2 L1173.7,492.8 L1171.0,493.3 L1168.2,493.7 L1165.3,494.2 L1162.2,494.6 L1159.0,495.0 L1155.6,495.4 L1152.2,495.7 L1148.6,496.1 L1144.9,496.3 L1141.2,496.6 L1137.3,496.8 L1133.4,497.0 L1129.5,497.2 L1125.5,497.3 L1121.4,497.4 L1117.4,497.5 L1113.3,497.5 L1109.3,497.5 L1105.2,497.4 L1101.2,497.4 L1097.2,497.2 L1093.2,497.1 L1089.3,496.9 L1085.5,496.7 L1081.7,496.5 L1078.0,496.2 L1074.5,495.9 L1071.0,495.6 L1067.7,495.2 L1064.4,494.8 L1061.3,494.4 L1058.4,493.9 L1055.6,493.5 L1052.9,493.0 L1050.5,492.5 L1048.2,491.9 L1046.0,491.4 L1044.1,490.8 L1042.3,490.2 L1040.8,489.6 L1039.4,489.0 L1038.3,488.4 L1037.3,487.8 L1036.6,487.1 L1036.0,486.5 L1035.7,485.8 L1035.6,485.2 M1186.4,514.0 L1186.3,514.7 L1186.0,515.3 L1185.5,516.0 L1184.8,516.6 L1183.9,517.3 L1182.8,517.9 L1181.5,518.5 L1180.0,519.1 L1178.4,519.7 L1176.6,520.3 L1174.5,520.9 L1172.4,521.4 L1170.0,521.9 L1167.5,522.4 L1164.9,522.9 L1162.1,523.4 L1159.1,523.8 L1156.1,524.2 L1152.9,524.6 L1149.6,524.9 L1146.2,525.2 L1142.8,525.5 L1139.2,525.8 L1135.6,526.0 L1131.9,526.2 L1128.1,526.4 L1124.3,526.5 L1120.5,526.6 L1116.7,526.6 L1112.8,526.7 L1109.0,526.6 L1105.1,526.6 L1101.3,526.5 L1097.5,526.4 L1093.8,526.3 L1090.1,526.1 L1086.4,525.9 L1082.9,525.6 L1079.4,525.3 L1076.0,525.0 L1072.7,524.7 L1069.5,524.3 L1066.5,523.9 L1063.6,523.5 L1060.8,523.1 L1058.1,522.6 L1055.6,522.1 L1053.3,521.6 L1051.1,521.1 L1049.1,520.5 L1047.2,519.9 L1045.6,519.3 L1044.1,518.7 L1042.8,518.1 L1041.7,517.5 L1040.8,516.9 L1040.1,516.2 L1039.6,515.6 L1039.3,514.9 L1039.2,514.3 M1181.7,543.9 L1181.6,544.6 L1181.3,545.3 L1180.9,545.9 L1180.2,546.6 L1179.4,547.2 L1178.3,547.8 L1177.1,548.5 L1175.7,549.1 L1174.2,549.7 L1172.4,550.3 L1170.5,550.8 L1168.5,551.4 L1166.3,551.9 L1163.9,552.4 L1161.4,552.9 L1158.8,553.3 L1156.0,553.8 L1153.1,554.2 L1150.1,554.5 L1147.0,554.9 L1143.8,555.2 L1140.5,555.5 L1137.2,555.8 L1133.8,556.0 L1130.3,556.2 L1126.7,556.3 L1123.2,556.5 L1119.6,556.6 L1115.9,556.6 L1112.3,556.6 L1108.7,556.6 L1105.0,556.6 L1101.4,556.5 L1097.9,556.4 L1094.3,556.2 L1090.9,556.0 L1087.4,555.8 L1084.1,555.6 L1080.8,555.3 L1077.6,555.0 L1074.5,554.7 L1071.5,554.3 L1068.6,553.9 L1065.8,553.5 L1063.2,553.0 L1060.7,552.5 L1058.3,552.0 L1056.1,551.5 L1054.1,551.0 L1052.2,550.4 L1050.4,549.8 L1048.9,549.2 L1047.5,548.6 L1046.3,548.0 L1045.2,547.4 L1044.4,546.8 L1043.7,546.1 L1043.2,545.5 L1043.0,544.8 L1042.9,544.1 M1177.3,572.2 L1177.2,572.8 L1176.9,573.5 L1176.5,574.2 L1175.9,574.8 L1175.1,575.4 L1174.1,576.1 L1172.9,576.7 L1171.6,577.3 L1170.2,577.9 L1168.5,578.5 L1166.7,579.1 L1164.8,579.6 L1162.7,580.2 L1160.5,580.7 L1158.1,581.1 L1155.6,581.6 L1153.0,582.0 L1150.3,582.4 L1147.5,582.8 L1144.6,583.2 L1141.5,583.5 L1138.5,583.8 L1135.3,584.0 L1132.1,584.3 L1128.8,584.5 L1125.4,584.6 L1122.1,584.7 L1118.7,584.8 L1115.3,584.9 L1111.8,584.9 L1108.4,584.9 L1105.0,584.8 L1101.6,584.8 L1098.2,584.7 L1094.9,584.5 L1091.6,584.3 L1088.4,584.1 L1085.2,583.8 L1082.1,583.6 L1079.1,583.3 L1076.2,582.9 L1073.3,582.5 L1070.6,582.1 L1068.0,581.7 L1065.5,581.3 L1063.2,580.8 L1060.9,580.3 L1058.8,579.8 L1056.9,579.2 L1055.1,578.6 L1053.5,578.1 L1052.0,577.5 L1050.7,576.9 L1049.5,576.2 L1048.6,575.6 L1047.8,575.0 L1047.1,574.3 L1046.7,573.6 L1046.4,573.0 L1046.3,572.3 M1172.9,600.3 L1172.8,601.0 L1172.5,601.6 L1172.1,602.3 L1171.5,602.9 L1170.8,603.6 L1169.9,604.2 L1168.8,604.9 L1167.6,605.5 L1166.2,606.1 L1164.6,606.7 L1163.0,607.2 L1161.1,607.8 L1159.2,608.3 L1157.1,608.8 L1154.9,609.3 L1152.5,609.8 L1150.1,610.2 L1147.5,610.6 L1144.9,611.0 L1142.1,611.4 L1139.3,611.7 L1136.4,612.0 L1133.4,612.2 L1130.4,612.4 L1127.3,612.6 L1124.1,612.8 L1121.0,612.9 L1117.8,613.0 L1114.6,613.1 L1111.3,613.1 L1108.1,613.1 L1104.9,613.0 L1101.7,612.9 L1098.5,612.8 L1095.4,612.7 L1092.3,612.5 L1089.3,612.3 L1086.3,612.0 L1083.4,611.7 L1080.6,611.4 L1077.8,611.1 L1075.2,610.7 L1072.6,610.3 L1070.2,609.9 L1067.8,609.4 L1065.6,608.9 L1063.5,608.4 L1061.5,607.9 L1059.7,607.3 L1058.0,606.8 L1056.5,606.2 L1055.1,605.6 L1053.9,605.0 L1052.8,604.3 L1051.9,603.7 L1051.1,603.1 L1050.5,602.4 L1050.1,601.7 L1049.9,601.1 L1049.8,600.4 M1168.6,627.7 L1168.5,628.4 L1168.3,629.1 L1167.9,629.7 L1167.3,630.4 L1166.6,631.0 L1165.8,631.7 L1164.8,632.3 L1163.6,632.9 L1162.3,633.5 L1160.9,634.1 L1159.3,634.7 L1157.6,635.3 L1155.7,635.8 L1153.8,636.3 L1151.7,636.8 L1149.5,637.3 L1147.2,637.7 L1144.8,638.1 L1142.3,638.5 L1139.7,638.8 L1137.1,639.2 L1134.3,639.4 L1131.6,639.7 L1128.7,639.9 L1125.8,640.1 L1122.9,640.3 L1119.9,640.4 L1116.9,640.5 L1113.9,640.5 L1110.9,640.6 L1107.9,640.6 L1104.8,640.5 L1101.8,640.4 L1098.9,640.3 L1095.9,640.1 L1093.0,640.0 L1090.2,639.7 L1087.4,639.5 L1084.7,639.2 L1082.0,638.9 L1079.4,638.5 L1076.9,638.1 L1074.5,637.7 L1072.2,637.3 L1070.1,636.8 L1068.0,636.4 L1066.0,635.9 L1064.2,635.3 L1062.5,634.8 L1060.9,634.2 L1059.4,633.6 L1058.1,633.0 L1057.0,632.4 L1056.0,631.8 L1055.1,631.1 L1054.4,630.5 L1053.9,629.8 L1053.5,629.1 L1053.2,628.5 L1053.1,627.8 M1164.4,654.2 L1164.4,654.8 L1164.1,655.5 L1163.8,656.2 L1163.3,656.8 L1162.6,657.5 L1161.8,658.1 L1160.9,658.8 L1159.8,659.4 L1158.6,660.0 L1157.2,660.6 L1155.7,661.2 L1154.1,661.7 L1152.4,662.3 L1150.6,662.8 L1148.6,663.3 L1146.6,663.7 L1144.4,664.2 L1142.2,664.6 L1139.8,665.0 L1137.4,665.3 L1134.9,665.6 L1132.4,665.9 L1129.8,666.2 L1127.1,666.4 L1124.4,666.6 L1121.7,666.8 L1118.9,666.9 L1116.1,667.0 L1113.2,667.0 L1110.4,667.0 L1107.6,667.0 L1104.8,667.0 L1102.0,666.9 L1099.2,666.8 L1096.4,666.6 L1093.7,666.4 L1091.1,666.2 L1088.4,665.9 L1085.9,665.7 L1083.4,665.3 L1081.0,665.0 L1078.7,664.6 L1076.4,664.2 L1074.3,663.8 L1072.2,663.3 L1070.3,662.8 L1068.4,662.3 L1066.7,661.8 L1065.1,661.2 L1063.6,660.6 L1062.3,660.0 L1061.1,659.4 L1060.0,658.8 L1059.0,658.2 L1058.2,657.5 L1057.6,656.9 L1057.1,656.2 L1056.7,655.5 L1056.5,654.9 L1056.4,654.2 M1160.1,681.6 L1160.1,682.3 L1159.9,682.9 L1159.5,683.6 L1159.0,684.3 L1158.4,684.9 L1157.7,685.6 L1156.8,686.2 L1155.8,686.8 L1154.7,687.4 L1153.4,688.0 L1152.0,688.6 L1150.6,689.2 L1149.0,689.7 L1147.3,690.2 L1145.4,690.7 L1143.5,691.2 L1141.5,691.6 L1139.5,692.0 L1137.3,692.4 L1135.0,692.8 L1132.7,693.1 L1130.4,693.4 L1127.9,693.7 L1125.5,693.9 L1122.9,694.1 L1120.4,694.2 L1117.8,694.4 L1115.2,694.4 L1112.6,694.5 L1110.0,694.5 L1107.3,694.5 L1104.7,694.5 L1102.1,694.4 L1099.5,694.2 L1097.0,694.1 L1094.4,693.9 L1092.0,693.7 L1089.5,693.4 L1087.2,693.1 L1084.9,692.8 L1082.6,692.4 L1080.4,692.1 L1078.4,691.6 L1076.4,691.2 L1074.5,690.7 L1072.7,690.3 L1070.9,689.7 L1069.3,689.2 L1067.9,688.6 L1066.5,688.1 L1065.2,687.5 L1064.1,686.9 L1063.1,686.2 L1062.2,685.6 L1061.5,684.9 L1060.9,684.3 L1060.4,683.6 L1060.0,682.9 L1059.8,682.3 L1059.8,681.6 M1247.7,98.7 L1154.5,711.3 M1223.1,103.1 L1145.8,716.1 M1180.7,106.4 L1130.9,719.5 M1127.8,107.9 L1112.3,721.0 M1073.5,107.5 L1093.1,720.2 M1027.3,105.2 L1076.8,717.3 M997.0,101.3 L1066.2,712.7 M1247.7,98.7 L1246.7,129.0 M1242.6,131.9 L1241.3,163.3 M1237.4,166.3 L1236.2,196.3 M1232.4,199.2 L1230.8,230.6 M1227.2,233.6 L1225.6,263.5 M1222.1,266.6 L1220.5,296.5 M1217.1,299.5 L1215.1,330.8 M1211.9,333.9 L1210.0,363.6 M1206.9,366.7 L1205.0,395.1 M1202.1,398.2 L1200.3,425.0 M1197.6,428.1 L1195.7,454.9 M1193.0,458.1 L1191.0,484.9 M1188.5,488.0 L1186.4,514.0 M1184.0,517.2 L1181.7,543.9 M1179.5,547.1 L1177.3,572.2 M1175.2,575.4 L1172.9,600.3 M1170.9,603.5 L1168.6,627.7 M1166.7,631.0 L1164.4,654.2 M1162.7,657.4 L1160.1,681.6 M1158.5,684.8 L1156.0,708.0 M1223.1,103.1 L1242.6,131.9 M1218.9,136.3 L1237.4,166.3 M1214.6,170.7 L1232.4,199.2 M1210.4,203.7 L1227.2,233.6 M1206.1,238.1 L1222.1,266.6 M1201.9,271.1 L1217.1,299.5 M1197.8,304.0 L1211.9,333.9 M1193.5,338.4 L1206.9,366.7 M1189.3,371.3 L1202.1,398.2 M1185.3,402.8 L1197.6,428.1 M1181.6,432.7 L1193.0,458.1 M1177.8,462.7 L1188.5,488.0 M1174.0,492.7 L1184.0,517.2 M1170.3,521.9 L1179.5,547.1 M1166.6,551.8 L1175.2,575.4 M1163.0,580.1 L1170.9,603.5 M1159.4,608.3 L1166.7,631.0 M1156.0,635.7 L1162.7,657.4 M1152.6,662.2 L1158.5,684.8 M1149.2,689.6 L1154.5,711.3 M1180.7,106.4 L1218.9,136.3 M1178.0,139.6 L1214.6,170.7 M1175.2,174.0 L1210.4,203.7 M1172.5,207.0 L1206.1,238.1 M1169.7,241.4 L1201.9,271.1 M1167.1,274.3 L1197.8,304.0 M1164.4,307.3 L1193.5,338.4 M1161.6,341.7 L1189.3,371.3 M1158.9,374.6 L1185.3,402.8 M1156.4,406.1 L1181.6,432.7 M1153.9,436.1 L1177.8,462.7 M1151.5,466.0 L1174.0,492.7 M1149.1,496.0 L1170.3,521.9 M1146.7,525.2 L1166.6,551.8 M1144.3,555.2 L1163.0,580.1 M1142.0,583.5 L1159.4,608.3 M1139.7,611.6 L1156.0,635.7 M1137.4,639.1 L1152.6,662.2 M1135.3,665.6 L1149.2,689.6 M1133.1,693.1 L1145.8,716.1 M1127.8,107.9 L1178.0,139.6 M1126.9,141.1 L1175.2,174.0 M1126.1,175.5 L1172.5,207.0 M1125.2,208.5 L1169.7,241.4 M1124.4,242.8 L1167.1,274.3 M1123.5,275.8 L1164.4,307.3 M1122.7,308.8 L1161.6,341.7 M1121.8,343.2 L1158.9,374.6 M1121.0,376.0 L1156.4,406.1 M1120.2,407.5 L1153.9,436.1 M1119.4,437.5 L1151.5,466.0 M1118.7,467.5 L1149.1,496.0 M1117.9,497.5 L1146.7,525.2 M1117.2,526.6 L1144.3,555.2 M1116.4,556.6 L1142.0,583.5 M1115.7,584.9 L1139.7,611.6 M1115.0,613.1 L1137.4,639.1 M1114.3,640.5 L1135.3,665.6 M1113.6,667.0 L1133.1,693.1 M1112.9,694.5 L1130.9,719.5 M1073.5,107.5 L1126.9,141.1 M1074.6,140.7 L1126.1,175.5 M1075.7,175.0 L1125.2,208.5 M1076.7,207.9 L1124.4,242.8 M1077.8,242.3 L1123.5,275.8 M1078.9,275.2 L1122.7,308.8 M1079.9,308.2 L1121.8,343.2 M1081.0,342.5 L1121.0,376.0 M1082.1,375.4 L1120.2,407.5 M1083.1,406.9 L1119.4,437.5 M1084.1,436.8 L1118.7,467.5 M1085.0,466.8 L1117.9,497.5 M1086.0,496.7 L1117.2,526.6 M1086.9,525.9 L1116.4,556.6 M1087.9,555.9 L1115.7,584.9 M1088.8,584.1 L1115.0,613.1 M1089.7,612.3 L1114.3,640.5 M1090.6,639.8 L1113.6,667.0 M1091.4,666.2 L1112.9,694.5 M1092.3,693.7 L1112.3,721.0 M1027.3,105.2 L1074.6,140.7 M1029.9,138.3 L1075.7,175.0 M1032.7,172.6 L1076.7,207.9 M1035.4,205.5 L1077.8,242.3 M1038.2,239.8 L1078.9,275.2 M1040.8,272.7 L1079.9,308.2 M1043.5,305.6 L1081.0,342.5 M1046.3,340.0 L1082.1,375.4 M1048.9,372.8 L1083.1,406.9 M1051.5,404.2 L1084.1,436.8 M1053.9,434.1 L1085.0,466.8 M1056.3,464.1 L1086.0,496.7 M1058.8,494.0 L1086.9,525.9 M1061.1,523.1 L1087.9,555.9 M1063.6,553.1 L1088.8,584.1 M1065.8,581.3 L1089.7,612.3 M1068.1,609.5 L1090.6,639.8 M1070.3,636.9 L1091.4,666.2 M1072.5,663.4 L1092.3,693.7 M1074.7,690.8 L1093.1,720.2 M997.0,101.3 L1029.9,138.3 M1000.8,134.4 L1032.7,172.6 M1004.6,168.7 L1035.4,205.5 M1008.4,201.5 L1038.2,239.8 M1012.2,235.8 L1040.8,272.7 M1016.0,268.7 L1043.5,305.6 M1019.7,301.6 L1046.3,340.0 M1023.6,335.8 L1048.9,372.8 M1027.3,368.6 L1051.5,404.2 M1030.8,400.0 L1053.9,434.1 M1034.2,429.9 L1056.3,464.1 M1037.6,459.8 L1058.8,494.0 M1041.0,489.7 L1061.1,523.1 M1044.3,518.8 L1063.6,553.1 M1047.7,548.7 L1065.8,581.3 M1050.8,576.9 L1068.1,609.5 M1054.0,605.1 L1070.3,636.9 M1057.1,632.5 L1072.5,663.4 M1060.1,658.9 L1074.7,690.8 M1063.2,686.3 L1076.8,717.3 M987.9,97.2 L1000.8,134.4 M992.0,130.2 L1004.6,168.7 M996.2,164.5 L1008.4,201.5 M1000.2,197.3 L1012.2,235.8 M1004.4,231.5 L1016.0,268.7 M1008.5,264.4 L1019.7,301.6 M1012.5,297.2 L1023.6,335.8 M1016.7,331.5 L1027.3,368.6 M1020.7,364.2 L1030.8,400.0 M1024.6,395.6 L1034.2,429.9 M1028.3,425.4 L1037.6,459.8 M1031.9,455.3 L1041.0,489.7 M1035.6,485.2 L1044.3,518.8 M1039.2,514.3 L1047.7,548.7 M1042.9,544.1 L1050.8,576.9 M1046.3,572.3 L1054.0,605.1 M1049.8,600.4 L1057.1,632.5 M1053.1,627.8 L1060.1,658.9 M1056.4,654.2 L1063.2,686.3 M1059.8,681.6 L1066.2,712.7" fill="none" stroke="#6a6a6a" stroke-width="1.0"/>
<path d="M1251.9,95.8 L1251.6,96.6 L1250.6,97.4 L1249.0,98.2 L1246.8,99.0 L1244.0,99.8 L1240.5,100.5 L1236.5,101.3 L1231.9,102.0 L1226.7,102.7 L1221.1,103.4 L1214.9,104.0 L1208.3,104.6 L1201.2,105.1 L1193.8,105.6 L1186.0,106.1 L1177.8,106.5 L1169.4,106.9 L1160.7,107.2 L1151.9,107.5 L1142.9,107.7 L1133.8,107.9 L1124.6,108.0 L1115.4,108.0 L1106.2,108.0 L1097.0,107.9 L1088.0,107.8 L1079.2,107.7 L1070.5,107.4 L1062.1,107.1 L1054.0,106.8 L1046.1,106.4 L1038.7,106.0 L1031.6,105.5 L1025.0,105.0 L1018.8,104.4 L1013.1,103.8 L1008.0,103.2 L1003.4,102.5 L999.3,101.8 L995.9,101.1 L993.0,100.3 L990.8,99.6 L989.2,98.8 L988.2,98.0 L987.9,97.2 L988.2,96.4 L989.2,95.6 L990.8,94.8 L993.0,94.0 L995.8,93.2 L999.3,92.5 L1003.3,91.7 L1007.9,91.0 L1013.1,90.3 L1018.7,89.6 L1024.9,89.0 L1031.5,88.4 L1038.6,87.9 L1046.0,87.4 L1053.8,86.9 L1062.0,86.5 L1070.4,86.1 L1079.1,85.8 L1087.9,85.5 L1096.9,85.3 L1106.0,85.1 L1115.2,85.0 L1124.4,85.0 L1133.6,85.0 L1142.8,85.1 L1151.8,85.2 L1160.6,85.3 L1169.3,85.6 L1177.7,85.9 L1185.8,86.2 L1193.7,86.6 L1201.1,87.0 L1208.2,87.5 L1214.8,88.0 L1221.0,88.6 L1226.7,89.2 L1231.8,89.8 L1236.4,90.5 L1240.5,91.2 L1243.9,91.9 L1246.8,92.7 L1249.0,93.4 L1250.6,94.2 L1251.6,95.0 L1251.9,95.8 Z" fill="#555555"/>
<path d="M1163.9,96.3 L1163.7,96.7 L1162.9,97.1 L1161.8,97.5 L1160.1,97.8 L1158.0,98.2 L1155.5,98.6 L1152.6,98.9 L1149.4,99.2 L1145.8,99.5 L1141.9,99.7 L1137.8,99.9 L1133.5,100.1 L1129.1,100.2 L1124.5,100.3 L1119.9,100.3 L1115.3,100.3 L1110.8,100.3 L1106.3,100.2 L1102.0,100.1 L1097.9,99.9 L1094.1,99.7 L1090.5,99.5 L1087.2,99.2 L1084.3,98.9 L1081.8,98.6 L1079.7,98.3 L1078.1,97.9 L1076.9,97.5 L1076.1,97.1 L1075.9,96.7 L1076.1,96.3 L1076.9,95.9 L1078.0,95.5 L1079.7,95.2 L1081.8,94.8 L1084.3,94.4 L1087.2,94.1 L1090.4,93.8 L1094.0,93.5 L1097.9,93.3 L1102.0,93.1 L1106.3,92.9 L1110.7,92.8 L1115.3,92.7 L1119.9,92.7 L1124.5,92.7 L1129.0,92.7 L1133.5,92.8 L1137.8,92.9 L1141.9,93.1 L1145.7,93.3 L1149.3,93.5 L1152.6,93.8 L1155.5,94.1 L1158.0,94.4 L1160.1,94.7 L1161.7,95.1 L1162.9,95.5 L1163.7,95.9 L1163.9,96.3 M1207.9,96.0 L1207.4,96.8 L1206.0,97.6 L1203.6,98.4 L1200.3,99.2 L1196.1,99.9 L1191.1,100.6 L1185.3,101.3 L1178.8,101.9 L1171.7,102.4 L1163.9,102.9 L1155.7,103.3 L1147.1,103.6 L1138.2,103.9 L1129.1,104.1 L1119.9,104.2 L1110.7,104.2 L1101.6,104.1 L1092.7,103.9 L1084.1,103.7 L1075.9,103.4 L1068.2,103.0 L1061.0,102.5 L1054.5,102.0 L1048.7,101.4 L1043.7,100.7 L1039.5,100.0 L1036.2,99.3 L1033.8,98.5 L1032.4,97.8 L1031.9,97.0 L1032.4,96.2 L1033.8,95.4 L1036.2,94.6 L1039.5,93.8 L1043.7,93.1 L1048.7,92.4 L1054.5,91.7 L1061.0,91.1 L1068.1,90.6 L1075.9,90.1 L1084.1,89.7 L1092.7,89.4 L1101.6,89.1 L1110.7,88.9 L1119.9,88.8 L1129.1,88.8 L1138.2,88.9 L1147.1,89.1 L1155.7,89.3 L1163.9,89.6 L1171.6,90.0 L1178.8,90.5 L1185.3,91.0 L1191.1,91.6 L1196.1,92.3 L1200.3,93.0 L1203.6,93.7 L1206.0,94.5 L1207.4,95.2 L1207.9,96.0 M1119.9,96.5 L1163.9,96.3 L1119.9,96.5 M1119.9,96.5 L1159.6,98.0 L1119.9,96.5 M1119.9,96.5 L1147.3,99.4 L1119.9,96.5 M1119.9,96.5 L1129.7,100.2 L1119.9,96.5 M1119.9,96.5 L1110.1,100.3 L1119.9,96.5 M1119.9,96.5 L1092.5,99.6 L1119.9,96.5 M1119.9,96.5 L1080.3,98.4 L1119.9,96.5 M1119.9,96.5 L1075.9,96.7 L1119.9,96.5 M1119.9,96.5 L1080.2,95.0 L1119.9,96.5 M1119.9,96.5 L1092.5,93.6 L1119.9,96.5 M1119.9,96.5 L1110.1,92.8 L1119.9,96.5 M1119.9,96.5 L1129.7,92.7 L1119.9,96.5 M1119.9,96.5 L1147.3,93.4 L1119.9,96.5 M1119.9,96.5 L1159.5,94.6 L1119.9,96.5 M1159.6,98.0 L1205.7,97.8 L1163.9,96.3 M1147.3,99.4 L1188.7,100.9 L1159.6,98.0 M1129.7,100.2 L1158.1,103.2 L1147.3,99.4 M1110.1,100.3 L1119.9,104.2 L1129.7,100.2 M1092.5,99.6 L1081.8,103.6 L1110.1,100.3 M1080.3,98.4 L1051.1,101.6 L1092.5,99.6 M1075.9,96.7 L1034.1,98.7 L1080.3,98.4 M1080.2,95.0 L1034.1,95.2 L1075.9,96.7 M1092.5,93.6 L1051.1,92.1 L1080.2,95.0 M1110.1,92.8 L1081.7,89.8 L1092.5,93.6 M1129.7,92.7 L1119.9,88.8 L1110.1,92.8 M1147.3,93.4 L1158.0,89.4 L1129.7,92.7 M1159.5,94.6 L1188.7,91.4 L1147.3,93.4 M1163.9,96.3 L1205.7,94.3 L1159.5,94.6 M1205.7,97.8 L1251.9,95.8 L1205.7,94.3 M1188.7,100.9 L1238.9,100.9 L1205.7,97.8 M1158.1,103.2 L1202.2,105.1 L1188.7,100.9 M1119.9,104.2 L1149.3,107.6 L1158.1,103.2 M1081.8,103.6 L1090.6,107.9 L1119.9,104.2 M1051.1,101.6 L1037.6,105.9 L1081.8,103.6 M1034.1,98.7 L1001.0,102.1 L1051.1,101.6 M1034.1,95.2 L987.9,97.2 L1034.1,98.7 M1051.1,92.1 L1000.9,92.1 L1034.1,95.2 M1081.7,89.8 L1037.6,87.9 L1051.1,92.1 M1119.9,88.8 L1090.5,85.4 L1081.7,89.8 M1158.0,89.4 L1149.2,85.1 L1119.9,88.8 M1188.7,91.4 L1202.2,87.1 L1158.0,89.4 M1205.7,94.3 L1238.8,90.9 L1188.7,91.4" fill="none" stroke="#858585" stroke-width="0.8"/>
<path d="M1251.9,95.8 L1251.6,96.6 L1250.6,97.4 L1249.0,98.2 L1246.8,99.0 L1244.0,99.8 L1240.5,100.5 L1236.5,101.3 L1231.9,102.0 L1226.7,102.7 L1221.1,103.4 L1214.9,104.0 L1208.3,104.6 L1201.2,105.1 L1193.8,105.6 L1186.0,106.1 L1177.8,106.5 L1169.4,106.9 L1160.7,107.2 L1151.9,107.5 L1142.9,107.7 L1133.8,107.9 L1124.6,108.0 L1115.4,108.0 L1106.2,108.0 L1097.0,107.9 L1088.0,107.8 L1079.2,107.7 L1070.5,107.4 L1062.1,107.1 L1054.0,106.8 L1046.1,106.4 L1038.7,106.0 L1031.6,105.5 L1025.0,105.0 L1018.8,104.4 L1013.1,103.8 L1008.0,103.2 L1003.4,102.5 L999.3,101.8 L995.9,101.1 L993.0,100.3 L990.8,99.6 L989.2,98.8 L988.2,98.0 L987.9,97.2 L988.2,96.4 L989.2,95.6 L990.8,94.8 L993.0,94.0 L995.8,93.2 L999.3,92.5 L1003.3,91.7 L1007.9,91.0 L1013.1,90.3 L1018.7,89.6 L1024.9,89.0 L1031.5,88.4 L1038.6,87.9 L1046.0,87.4 L1053.8,86.9 L1062.0,86.5 L1070.4,86.1 L1079.1,85.8 L1087.9,85.5 L1096.9,85.3 L1106.0,85.1 L1115.2,85.0 L1124.4,85.0 L1133.6,85.0 L1142.8,85.1 L1151.8,85.2 L1160.6,85.3 L1169.3,85.6 L1177.7,85.9 L1185.8,86.2 L1193.7,86.6 L1201.1,87.0 L1208.2,87.5 L1214.8,88.0 L1221.0,88.6 L1226.7,89.2 L1231.8,89.8 L1236.4,90.5 L1240.5,91.2 L1243.9,91.9 L1246.8,92.7 L1249.0,93.4 L1250.6,94.2 L1251.6,95.0 L1251.9,95.8 Z" fill="none" stroke="#6a6a6a" stroke-width="1"/>
<path d="M928.5,461.8 L929.0,488.6 L929.4,515.9 L929.8,541.9 L930.2,567.9 L930.7,593.9 L931.1,619.9 L931.5,645.9 L931.9,670.8 L932.3,695.2 L932.7,719.5 L933.1,743.8 L933.5,768.2 L933.8,792.4 L934.2,816.7 L934.6,841.1 L935.0,864.7 L935.4,887.4 L935.7,910.0 L936.1,932.8 L936.5,956.0 L936.3,959.3 L935.9,936.0 L935.6,913.2 L935.2,890.5 L934.8,867.8 L934.5,844.1 L934.1,819.7 L933.7,795.4 L933.3,771.0 L932.9,746.6 L932.5,722.3 L932.1,697.9 L931.7,673.4 L931.3,648.5 L930.9,622.4 L930.5,596.3 L930.1,570.3 L929.6,544.3 L929.2,518.2 L928.8,490.8 L928.4,463.9 Z" fill="#323232" stroke="#323232" stroke-width="0.6"/>
<path d="M928.4,463.9 L928.8,490.8 L929.2,518.2 L929.6,544.3 L930.1,570.3 L930.5,596.3 L930.9,622.4 L931.3,648.5 L931.7,673.4 L932.1,697.9 L932.5,722.3 L932.9,746.6 L933.3,771.0 L933.7,795.4 L934.1,819.7 L934.5,844.1 L934.8,867.8 L935.2,890.5 L935.6,913.2 L935.9,936.0 L936.3,959.3 L932.4,970.2 L932.0,946.8 L931.6,923.8 L931.2,901.0 L930.9,878.0 L930.5,854.2 L930.0,829.6 L929.6,805.1 L929.2,780.5 L928.8,755.9 L928.4,731.4 L928.0,706.9 L927.6,682.2 L927.2,657.1 L926.7,630.8 L926.3,604.5 L925.8,578.2 L925.4,552.1 L924.9,525.8 L924.5,498.1 L924.0,471.1 Z" fill="#393939" stroke="#393939" stroke-width="0.6"/>
<path d="M924.0,471.1 L924.5,498.1 L924.9,525.8 L925.4,552.1 L925.8,578.2 L926.3,604.5 L926.7,630.8 L927.2,657.1 L927.6,682.2 L928.0,706.9 L928.4,731.4 L928.8,755.9 L929.2,780.5 L929.6,805.1 L930.0,829.6 L930.5,854.2 L930.9,878.0 L931.2,901.0 L931.6,923.8 L932.0,946.8 L932.4,970.2 L923.4,980.6 L923.0,957.0 L922.6,933.9 L922.2,910.9 L921.7,887.8 L921.3,863.8 L920.8,839.0 L920.4,814.3 L919.9,789.6 L919.5,764.8 L919.0,740.1 L918.6,715.4 L918.1,690.6 L917.7,665.3 L917.2,638.8 L916.7,612.4 L916.2,585.9 L915.7,559.5 L915.2,533.1 L914.7,505.2 L914.2,478.0 Z" fill="#636363" stroke="#636363" stroke-width="0.6"/>
<path d="M914.2,478.0 L914.7,505.2 L915.2,533.1 L915.7,559.5 L916.2,585.9 L916.7,612.4 L917.2,638.8 L917.7,665.3 L918.1,690.6 L918.6,715.4 L919.0,740.1 L919.5,764.8 L919.9,789.6 L920.4,814.3 L920.8,839.0 L921.3,863.8 L921.7,887.8 L922.2,910.9 L922.6,933.9 L923.0,957.0 L923.4,980.6 L909.8,990.0 L909.3,966.2 L908.9,943.0 L908.4,919.8 L907.9,896.6 L907.4,872.4 L906.9,847.5 L906.4,822.7 L905.9,797.8 L905.3,772.9 L904.8,748.1 L904.3,723.2 L903.8,698.2 L903.3,672.7 L902.7,646.1 L902.1,619.5 L901.6,592.9 L901.0,566.4 L900.5,539.7 L899.9,511.7 L899.3,484.3 Z" fill="#8f8f8f" stroke="#8f8f8f" stroke-width="0.6"/>
<path d="M899.3,484.3 L899.9,511.7 L900.5,539.7 L901.0,566.4 L901.6,592.9 L902.1,619.5 L902.7,646.1 L903.3,672.7 L903.8,698.2 L904.3,723.2 L904.8,748.1 L905.3,772.9 L905.9,797.8 L906.4,822.7 L906.9,847.5 L907.4,872.4 L907.9,896.6 L908.4,919.8 L908.9,943.0 L909.3,966.2 L909.8,990.0 L892.3,997.9 L891.7,974.0 L891.1,950.7 L890.6,927.4 L890.0,904.0 L889.4,879.8 L888.9,854.7 L888.3,829.8 L887.7,804.8 L887.1,779.7 L886.5,754.8 L885.9,729.8 L885.3,704.7 L884.6,679.1 L884.0,652.4 L883.4,625.6 L882.7,598.9 L882.1,572.2 L881.4,545.5 L880.8,517.3 L880.1,489.8 Z" fill="#b8b8b8" stroke="#b8b8b8" stroke-width="0.6"/>
<path d="M880.1,489.8 L880.8,517.3 L881.4,545.5 L882.1,572.2 L882.7,598.9 L883.4,625.6 L884.0,652.4 L884.6,679.1 L885.3,704.7 L885.9,729.8 L886.5,754.8 L887.1,779.7 L887.7,804.8 L888.3,829.8 L888.9,854.7 L889.4,879.8 L890.0,904.0 L890.6,927.4 L891.1,950.7 L891.7,974.0 L892.3,997.9 L871.5,1004.0 L870.8,980.0 L870.2,956.6 L869.6,933.2 L868.9,909.8 L868.3,885.4 L867.6,860.3 L866.9,835.2 L866.2,810.2 L865.5,785.1 L864.8,760.0 L864.1,735.0 L863.4,709.7 L862.7,684.1 L861.9,657.2 L861.2,630.4 L860.5,603.6 L859.7,576.8 L859.0,550.0 L858.2,521.7 L857.4,494.1 Z" fill="#c8c8c8" stroke="#c8c8c8" stroke-width="0.6"/>
<path d="M857.4,494.1 L858.2,521.7 L859.0,550.0 L859.7,576.8 L860.5,603.6 L861.2,630.4 L861.9,657.2 L862.7,684.1 L863.4,709.7 L864.1,735.0 L864.8,760.0 L865.5,785.1 L866.2,810.2 L866.9,835.2 L867.6,860.3 L868.3,885.4 L868.9,909.8 L869.6,933.2 L870.2,956.6 L870.8,980.0 L871.5,1004.0 L848.6,1007.9 L847.8,983.9 L847.1,960.4 L846.3,937.0 L845.6,913.5 L844.8,889.1 L844.0,863.9 L843.2,838.9 L842.4,813.8 L841.6,788.6 L840.8,763.5 L840.0,738.4 L839.2,713.1 L838.4,687.4 L837.6,660.5 L836.7,633.6 L835.8,606.8 L835.0,580.0 L834.1,553.1 L833.2,524.8 L832.3,497.1 Z" fill="#d4d4d4" stroke="#d4d4d4" stroke-width="0.6"/>
<path d="M832.3,497.1 L833.2,524.8 L834.1,553.1 L835.0,580.0 L835.8,606.8 L836.7,633.6 L837.6,660.5 L838.4,687.4 L839.2,713.1 L840.0,738.4 L840.8,763.5 L841.6,788.6 L842.4,813.8 L843.2,838.9 L844.0,863.9 L844.8,889.1 L845.6,913.5 L846.3,937.0 L847.1,960.4 L847.8,983.9 L848.6,1007.9 L824.5,1009.5 L823.6,985.5 L822.8,962.0 L821.9,938.6 L821.1,915.1 L820.2,890.7 L819.3,865.5 L818.4,840.4 L817.5,815.4 L816.6,790.2 L815.7,765.1 L814.8,740.0 L813.9,714.7 L813.0,689.0 L812.0,662.1 L811.0,635.2 L810.0,608.3 L809.1,581.5 L808.1,554.6 L807.1,526.3 L806.1,498.6 Z" fill="#d8d8d8" stroke="#d8d8d8" stroke-width="0.6"/>
<path d="M806.1,498.6 L807.1,526.3 L808.1,554.6 L809.1,581.5 L810.0,608.3 L811.0,635.2 L812.0,662.1 L813.0,689.0 L813.9,714.7 L814.8,740.0 L815.7,765.1 L816.6,790.2 L817.5,815.4 L818.4,840.4 L819.3,865.5 L820.2,890.7 L821.1,915.1 L821.9,938.6 L822.8,962.0 L823.6,985.5 L824.5,1009.5 L800.4,1008.7 L799.5,984.8 L798.5,961.3 L797.6,938.0 L796.6,914.5 L795.6,890.1 L794.6,865.0 L793.6,839.9 L792.6,814.9 L791.6,789.7 L790.6,764.7 L789.6,739.6 L788.5,714.3 L787.5,688.7 L786.4,661.8 L785.3,635.0 L784.2,608.1 L783.2,581.4 L782.1,554.5 L780.9,526.3 L779.8,498.6 Z" fill="#d6d6d6" stroke="#d6d6d6" stroke-width="0.6"/>
<path d="M779.8,498.6 L780.9,526.3 L782.1,554.5 L783.2,581.4 L784.2,608.1 L785.3,635.0 L786.4,661.8 L787.5,688.7 L788.5,714.3 L789.6,739.6 L790.6,764.7 L791.6,789.7 L792.6,814.9 L793.6,839.9 L794.6,865.0 L795.6,890.1 L796.6,914.5 L797.6,938.0 L798.5,961.3 L799.5,984.8 L800.4,1008.7 L777.5,1005.6 L776.4,981.7 L775.4,958.4 L774.3,935.1 L773.3,911.7 L772.2,887.4 L771.1,862.3 L770.0,837.3 L768.9,812.3 L767.7,787.3 L766.6,762.3 L765.5,737.3 L764.4,712.1 L763.2,686.5 L762.0,659.8 L760.9,633.0 L759.7,606.2 L758.5,579.5 L757.3,552.8 L756.0,524.6 L754.8,497.0 Z" fill="#d0d0d0" stroke="#d0d0d0" stroke-width="0.6"/>
<path d="M754.8,497.0 L756.0,524.6 L757.3,552.8 L758.5,579.5 L759.7,606.2 L760.9,633.0 L762.0,659.8 L763.2,686.5 L764.4,712.1 L765.5,737.3 L766.6,762.3 L767.7,787.3 L768.9,812.3 L770.0,837.3 L771.1,862.3 L772.2,887.4 L773.3,911.7 L774.3,935.1 L775.4,958.4 L776.4,981.7 L777.5,1005.6 L756.7,1000.3 L755.6,976.5 L754.4,953.3 L753.3,930.1 L752.2,906.8 L751.0,882.6 L749.8,857.6 L748.6,832.8 L747.4,807.9 L746.2,782.9 L745.0,758.0 L743.8,733.2 L742.6,708.1 L741.3,682.6 L740.0,656.0 L738.7,629.3 L737.4,602.7 L736.1,576.1 L734.8,549.5 L733.5,521.4 L732.1,494.0 Z" fill="#c5c5c5" stroke="#c5c5c5" stroke-width="0.6"/>
<path d="M732.1,494.0 L733.5,521.4 L734.8,549.5 L736.1,576.1 L737.4,602.7 L738.7,629.3 L740.0,656.0 L741.3,682.6 L742.6,708.1 L743.8,733.2 L745.0,758.0 L746.2,782.9 L747.4,807.9 L748.6,832.8 L749.8,857.6 L751.0,882.6 L752.2,906.8 L753.3,930.1 L754.4,953.3 L755.6,976.5 L756.7,1000.3 L739.1,993.1 L737.9,969.4 L736.7,946.3 L735.5,923.2 L734.3,900.0 L733.1,876.0 L731.8,851.2 L730.5,826.4 L729.2,801.7 L727.9,776.9 L726.6,752.2 L725.4,727.4 L724.1,702.5 L722.7,677.2 L721.4,650.7 L720.0,624.2 L718.6,597.7 L717.2,571.3 L715.9,544.8 L714.4,516.9 L713.0,489.6 Z" fill="#b5b5b5" stroke="#b5b5b5" stroke-width="0.6"/>
<path d="M713.0,489.6 L714.4,516.9 L715.9,544.8 L717.2,571.3 L718.6,597.7 L720.0,624.2 L721.4,650.7 L722.7,677.2 L724.1,702.5 L725.4,727.4 L726.6,752.2 L727.9,776.9 L729.2,801.7 L730.5,826.4 L731.8,851.2 L733.1,876.0 L734.3,900.0 L735.5,923.2 L736.7,946.3 L737.9,969.4 L739.1,993.1 L725.6,984.2 L724.3,960.7 L723.0,937.7 L721.8,914.8 L720.5,891.8 L719.2,867.9 L717.9,843.2 L716.5,818.7 L715.2,794.1 L713.8,769.5 L712.5,744.9 L711.1,720.3 L709.8,695.6 L708.4,670.4 L707.0,644.1 L705.5,617.8 L704.1,591.5 L702.6,565.3 L701.2,538.9 L699.7,511.3 L698.2,484.2 Z" fill="#a0a0a0" stroke="#a0a0a0" stroke-width="0.6"/>
<path d="M698.2,484.2 L699.7,511.3 L701.2,538.9 L702.6,565.3 L704.1,591.5 L705.5,617.8 L707.0,644.1 L708.4,670.4 L709.8,695.6 L711.1,720.3 L712.5,744.9 L713.8,769.5 L715.2,794.1 L716.5,818.7 L717.9,843.2 L719.2,867.9 L720.5,891.8 L721.8,914.8 L723.0,937.7 L724.3,960.7 L725.6,984.2 L716.6,974.1 L715.3,950.8 L714.0,927.9 L712.7,905.2 L711.4,882.4 L710.1,858.7 L708.7,834.2 L707.3,809.8 L705.9,785.5 L704.5,761.0 L703.1,736.6 L701.8,712.2 L700.4,687.7 L698.9,662.7 L697.5,636.6 L696.0,610.5 L694.5,584.3 L693.0,558.3 L691.5,532.2 L690.0,504.7 L688.4,477.8 Z" fill="#737373" stroke="#737373" stroke-width="0.6"/>
<path d="M688.4,477.8 L690.0,504.7 L691.5,532.2 L693.0,558.3 L694.5,584.3 L696.0,610.5 L697.5,636.6 L698.9,662.7 L700.4,687.7 L701.8,712.2 L703.1,736.6 L704.5,761.0 L705.9,785.5 L707.3,809.8 L708.7,834.2 L710.1,858.7 L711.4,882.4 L712.7,905.2 L714.0,927.9 L715.3,950.8 L716.6,974.1 L712.7,963.3 L711.3,940.1 L710.0,917.5 L708.7,894.9 L707.4,872.3 L706.1,848.8 L704.7,824.5 L703.3,800.3 L701.9,776.1 L700.5,751.8 L699.1,727.6 L697.7,703.5 L696.3,679.1 L694.8,654.3 L693.3,628.4 L691.8,602.5 L690.3,576.6 L688.8,550.7 L687.3,524.8 L685.8,497.6 L684.2,470.9 Z" fill="#3c3c3c" stroke="#3c3c3c" stroke-width="0.6"/>
<path d="M684.2,470.9 L685.8,497.6 L687.3,524.8 L688.8,550.7 L690.3,576.6 L691.8,602.5 L693.3,628.4 L694.8,654.3 L696.3,679.1 L697.7,703.5 L699.1,727.6 L700.5,751.8 L701.9,776.1 L703.3,800.3 L704.7,824.5 L706.1,848.8 L707.4,872.3 L708.7,894.9 L710.0,917.5 L711.3,940.1 L712.7,963.3 L712.5,961.0 L711.2,937.9 L709.9,915.3 L708.6,892.8 L707.3,870.2 L705.9,846.7 L704.5,822.5 L703.1,798.3 L701.7,774.2 L700.3,749.9 L698.9,725.8 L697.5,701.7 L696.1,677.3 L694.7,652.6 L693.2,626.7 L691.7,600.8 L690.2,575.0 L688.7,549.2 L687.2,523.3 L685.6,496.1 L684.1,469.4 Z" fill="#333333" stroke="#333333" stroke-width="0.6"/>
<path d="M929.0,488.6 L928.9,490.3 L928.4,492.1 L927.6,493.9 L926.5,495.7 L925.1,497.5 L923.3,499.2 L921.3,501.0 L918.9,502.7 L916.2,504.4 L913.2,506.0 L909.9,507.7 L906.3,509.2 L902.5,510.8 L898.4,512.2 L894.1,513.7 L889.5,515.0 L884.7,516.3 L879.7,517.6 L874.4,518.7 L869.0,519.8 L863.5,520.9 L857.7,521.8 L851.9,522.7 L845.9,523.5 L839.8,524.1 L833.6,524.8 L827.4,525.3 L821.1,525.7 L814.7,526.0 L808.3,526.3 L802.0,526.4 L795.6,526.5 L789.3,526.4 L783.0,526.3 L776.8,526.1 L770.7,525.8 L764.7,525.4 L758.8,524.9 L753.0,524.3 L747.4,523.6 L741.9,522.9 L736.6,522.0 L731.5,521.1 L726.6,520.1 L722.0,519.0 L717.6,517.8 L713.4,516.6 L709.5,515.3 L705.8,514.0 L702.4,512.6 L699.3,511.1 L696.6,509.6 L694.1,508.0 L691.9,506.4 L690.0,504.7 L688.5,503.1 L687.3,501.4 L686.4,499.6 L685.8,497.9 L685.6,496.1 M929.4,515.9 L929.3,517.8 L928.9,519.6 L928.1,521.4 L927.0,523.3 L925.6,525.1 L923.8,526.9 L921.7,528.7 L919.4,530.5 L916.7,532.2 L913.7,533.9 L910.5,535.6 L906.9,537.2 L903.1,538.7 L899.0,540.3 L894.7,541.7 L890.1,543.1 L885.3,544.5 L880.3,545.7 L875.2,546.9 L869.8,548.0 L864.2,549.1 L858.5,550.0 L852.7,550.9 L846.7,551.7 L840.7,552.4 L834.5,553.0 L828.3,553.6 L822.0,554.0 L815.7,554.3 L809.4,554.6 L803.0,554.7 L796.7,554.8 L790.4,554.7 L784.2,554.6 L778.0,554.3 L771.9,554.0 L765.9,553.6 L760.0,553.1 L754.3,552.4 L748.7,551.7 L743.2,550.9 L738.0,550.1 L732.9,549.1 L728.0,548.1 L723.4,546.9 L719.0,545.7 L714.8,544.5 L710.9,543.1 L707.3,541.7 L703.9,540.3 L700.9,538.8 L698.1,537.2 L695.6,535.6 L693.4,533.9 L691.6,532.2 L690.0,530.5 L688.8,528.7 L688.0,526.9 L687.4,525.1 L687.2,523.3 M929.8,541.9 L929.7,543.8 L929.3,545.7 L928.5,547.6 L927.4,549.5 L926.0,551.4 L924.3,553.2 L922.2,555.1 L919.8,556.9 L917.2,558.6 L914.2,560.4 L911.0,562.1 L907.4,563.7 L903.6,565.3 L899.6,566.9 L895.3,568.4 L890.7,569.8 L886.0,571.2 L881.0,572.5 L875.8,573.7 L870.5,574.8 L865.0,575.9 L859.3,576.9 L853.5,577.8 L847.5,578.6 L841.5,579.3 L835.4,579.9 L829.2,580.5 L822.9,580.9 L816.6,581.2 L810.3,581.5 L804.0,581.6 L797.7,581.6 L791.5,581.6 L785.2,581.4 L779.1,581.2 L773.0,580.8 L767.0,580.4 L761.2,579.8 L755.5,579.2 L749.9,578.5 L744.5,577.6 L739.3,576.7 L734.2,575.7 L729.4,574.7 L724.8,573.5 L720.4,572.3 L716.2,571.0 L712.3,569.6 L708.7,568.2 L705.4,566.6 L702.3,565.1 L699.5,563.5 L697.1,561.8 L694.9,560.1 L693.1,558.4 L691.5,556.6 L690.3,554.8 L689.5,552.9 L688.9,551.1 L688.7,549.2 M930.2,567.9 L930.1,569.8 L929.7,571.7 L928.9,573.7 L927.8,575.6 L926.4,577.5 L924.7,579.4 L922.7,581.3 L920.3,583.2 L917.7,585.0 L914.7,586.8 L911.5,588.5 L908.0,590.2 L904.2,591.8 L900.1,593.4 L895.9,595.0 L891.3,596.4 L886.6,597.8 L881.6,599.1 L876.5,600.4 L871.2,601.6 L865.7,602.6 L860.0,603.6 L854.2,604.5 L848.3,605.4 L842.3,606.1 L836.2,606.7 L830.1,607.3 L823.8,607.7 L817.6,608.0 L811.3,608.3 L805.0,608.4 L798.7,608.4 L792.5,608.4 L786.3,608.2 L780.2,607.9 L774.1,607.6 L768.2,607.1 L762.4,606.5 L756.7,605.9 L751.1,605.1 L745.7,604.2 L740.5,603.3 L735.5,602.3 L730.7,601.2 L726.1,600.0 L721.7,598.7 L717.6,597.4 L713.7,595.9 L710.1,594.5 L706.8,592.9 L703.7,591.3 L701.0,589.6 L698.5,587.9 L696.4,586.2 L694.5,584.4 L693.0,582.5 L691.8,580.7 L690.9,578.8 L690.4,576.9 L690.2,575.0 M930.7,593.9 L930.6,595.9 L930.1,597.9 L929.4,599.8 L928.3,601.8 L926.9,603.8 L925.2,605.7 L923.1,607.7 L920.8,609.6 L918.1,611.4 L915.2,613.2 L912.0,615.0 L908.5,616.8 L904.7,618.4 L900.7,620.1 L896.4,621.6 L891.9,623.1 L887.2,624.5 L882.3,625.9 L877.2,627.2 L871.9,628.4 L866.4,629.5 L860.8,630.5 L855.0,631.4 L849.1,632.2 L843.2,633.0 L837.1,633.6 L830.9,634.1 L824.7,634.6 L818.5,634.9 L812.3,635.2 L806.0,635.3 L799.8,635.3 L793.6,635.2 L787.4,635.1 L781.3,634.8 L775.3,634.4 L769.4,633.9 L763.6,633.3 L757.9,632.6 L752.4,631.8 L747.0,631.0 L741.8,630.0 L736.8,628.9 L732.0,627.8 L727.4,626.5 L723.1,625.2 L719.0,623.8 L715.1,622.4 L711.5,620.9 L708.2,619.3 L705.2,617.6 L702.4,615.9 L700.0,614.2 L697.9,612.3 L696.0,610.5 L694.5,608.6 L693.3,606.7 L692.4,604.8 L691.9,602.8 L691.7,600.8 M931.1,619.9 L931.0,621.9 L930.5,624.0 L929.8,626.0 L928.7,628.0 L927.3,630.0 L925.6,632.0 L923.6,634.0 L921.2,636.0 L918.6,637.9 L915.7,639.7 L912.5,641.6 L909.0,643.3 L905.3,645.0 L901.3,646.7 L897.0,648.3 L892.5,649.8 L887.8,651.3 L882.9,652.7 L877.8,653.9 L872.6,655.2 L867.1,656.3 L861.5,657.3 L855.8,658.3 L849.9,659.1 L844.0,659.9 L837.9,660.5 L831.8,661.0 L825.7,661.5 L819.5,661.8 L813.2,662.1 L807.0,662.2 L800.8,662.2 L794.6,662.1 L788.5,661.9 L782.4,661.6 L776.4,661.2 L770.5,660.7 L764.8,660.1 L759.1,659.4 L753.6,658.6 L748.3,657.7 L743.1,656.7 L738.1,655.6 L733.4,654.4 L728.8,653.1 L724.5,651.8 L720.4,650.3 L716.5,648.8 L713.0,647.3 L709.7,645.6 L706.6,643.9 L703.9,642.2 L701.5,640.4 L699.3,638.5 L697.5,636.6 L696.0,634.7 L694.8,632.7 L693.9,630.7 L693.4,628.7 L693.2,626.7 M931.5,645.9 L931.4,648.0 L931.0,650.1 L930.2,652.2 L929.1,654.2 L927.8,656.3 L926.0,658.3 L924.0,660.4 L921.7,662.4 L919.1,664.3 L916.2,666.2 L913.0,668.1 L909.5,669.9 L905.8,671.6 L901.8,673.3 L897.6,675.0 L893.1,676.5 L888.5,678.0 L883.6,679.4 L878.5,680.7 L873.3,682.0 L867.8,683.1 L862.3,684.2 L856.6,685.1 L850.7,686.0 L844.8,686.7 L838.8,687.4 L832.7,687.9 L826.6,688.4 L820.4,688.7 L814.2,688.9 L808.0,689.1 L801.8,689.1 L795.7,689.0 L789.6,688.8 L783.5,688.5 L777.6,688.0 L771.7,687.5 L765.9,686.9 L760.3,686.1 L754.8,685.3 L749.5,684.4 L744.4,683.3 L739.4,682.2 L734.7,681.0 L730.1,679.7 L725.8,678.3 L721.8,676.8 L717.9,675.3 L714.4,673.7 L711.1,672.0 L708.1,670.2 L705.4,668.4 L702.9,666.6 L700.8,664.7 L699.0,662.8 L697.5,660.8 L696.3,658.8 L695.4,656.7 L694.9,654.7 L694.7,652.6 M931.9,670.8 L931.8,672.9 L931.4,675.0 L930.6,677.2 L929.6,679.3 L928.2,681.4 L926.5,683.5 L924.5,685.5 L922.2,687.6 L919.6,689.6 L916.7,691.5 L913.5,693.4 L910.0,695.3 L906.3,697.1 L902.4,698.8 L898.2,700.4 L893.7,702.0 L889.1,703.5 L884.2,705.0 L879.2,706.3 L873.9,707.6 L868.5,708.7 L863.0,709.8 L857.3,710.8 L851.5,711.6 L845.6,712.4 L839.6,713.1 L833.6,713.6 L827.4,714.1 L821.3,714.4 L815.1,714.6 L809.0,714.8 L802.8,714.8 L796.7,714.7 L790.6,714.4 L784.6,714.1 L778.6,713.7 L772.8,713.1 L767.1,712.5 L761.5,711.7 L756.0,710.8 L750.7,709.9 L745.6,708.8 L740.7,707.7 L735.9,706.4 L731.4,705.1 L727.1,703.6 L723.1,702.1 L719.3,700.6 L715.7,698.9 L712.5,697.2 L709.5,695.4 L706.7,693.5 L704.3,691.6 L702.2,689.7 L700.4,687.7 L698.9,685.7 L697.7,683.6 L696.9,681.5 L696.3,679.4 L696.1,677.3 M932.3,695.2 L932.2,697.4 L931.8,699.6 L931.0,701.8 L930.0,703.9 L928.6,706.1 L926.9,708.2 L924.9,710.3 L922.6,712.4 L920.0,714.4 L917.1,716.4 L914.0,718.4 L910.5,720.2 L906.8,722.1 L902.9,723.8 L898.7,725.5 L894.3,727.1 L889.7,728.7 L884.8,730.1 L879.8,731.5 L874.6,732.8 L869.2,734.0 L863.7,735.0 L858.0,736.0 L852.3,736.9 L846.4,737.7 L840.4,738.4 L834.4,738.9 L828.3,739.4 L822.2,739.7 L816.0,739.9 L809.9,740.0 L803.8,740.0 L797.7,739.9 L791.6,739.7 L785.6,739.4 L779.7,738.9 L773.9,738.3 L768.2,737.7 L762.6,736.9 L757.2,736.0 L751.9,735.0 L746.8,733.9 L741.9,732.7 L737.2,731.4 L732.7,730.1 L728.4,728.6 L724.4,727.0 L720.6,725.4 L717.1,723.7 L713.8,722.0 L710.8,720.1 L708.1,718.3 L705.7,716.3 L703.6,714.3 L701.8,712.3 L700.3,710.2 L699.1,708.1 L698.3,706.0 L697.7,703.8 L697.5,701.7 M932.7,719.5 L932.6,721.7 L932.2,724.0 L931.4,726.2 L930.4,728.4 L929.0,730.6 L927.3,732.8 L925.3,734.9 L923.0,737.0 L920.5,739.1 L917.6,741.1 L914.4,743.1 L911.0,745.0 L907.3,746.9 L903.4,748.7 L899.2,750.4 L894.8,752.0 L890.2,753.6 L885.4,755.1 L880.4,756.5 L875.2,757.8 L869.9,759.0 L864.4,760.1 L858.7,761.1 L853.0,762.0 L847.1,762.8 L841.2,763.5 L835.2,764.0 L829.1,764.5 L823.0,764.8 L816.9,765.0 L810.8,765.1 L804.7,765.1 L798.6,765.0 L792.6,764.8 L786.6,764.4 L780.8,763.9 L775.0,763.3 L769.3,762.6 L763.7,761.8 L758.3,760.9 L753.1,759.9 L748.0,758.8 L743.1,757.6 L738.4,756.3 L733.9,754.8 L729.7,753.3 L725.7,751.8 L721.9,750.1 L718.4,748.4 L715.1,746.6 L712.2,744.7 L709.5,742.8 L707.1,740.8 L705.0,738.7 L703.2,736.7 L701.7,734.5 L700.5,732.4 L699.7,730.2 L699.1,728.0 L698.9,725.8 M933.1,743.8 L933.0,746.1 L932.5,748.3 L931.8,750.6 L930.8,752.9 L929.4,755.1 L927.7,757.3 L925.7,759.5 L923.5,761.7 L920.9,763.8 L918.0,765.8 L914.9,767.8 L911.5,769.8 L907.9,771.7 L903.9,773.5 L899.8,775.3 L895.4,777.0 L890.8,778.6 L886.0,780.1 L881.0,781.5 L875.9,782.8 L870.5,784.0 L865.1,785.1 L859.5,786.2 L853.7,787.1 L847.9,787.9 L842.0,788.5 L836.0,789.1 L830.0,789.6 L823.9,789.9 L817.8,790.1 L811.7,790.2 L805.7,790.2 L799.6,790.1 L793.6,789.8 L787.7,789.5 L781.8,789.0 L776.0,788.4 L770.4,787.6 L764.9,786.8 L759.5,785.9 L754.3,784.8 L749.2,783.7 L744.3,782.4 L739.7,781.1 L735.2,779.6 L731.0,778.1 L727.0,776.5 L723.2,774.8 L719.7,773.0 L716.5,771.2 L713.5,769.3 L710.8,767.3 L708.4,765.2 L706.4,763.2 L704.6,761.0 L703.1,758.9 L701.9,756.7 L701.1,754.5 L700.5,752.2 L700.3,749.9 M933.5,768.2 L933.4,770.5 L932.9,772.8 L932.2,775.1 L931.2,777.4 L929.8,779.7 L928.1,782.0 L926.2,784.2 L923.9,786.4 L921.4,788.5 L918.5,790.6 L915.4,792.7 L912.0,794.7 L908.4,796.6 L904.5,798.5 L900.3,800.3 L896.0,802.0 L891.4,803.6 L886.6,805.1 L881.7,806.6 L876.5,807.9 L871.2,809.1 L865.8,810.3 L860.2,811.3 L854.5,812.2 L848.7,813.0 L842.8,813.7 L836.8,814.3 L830.8,814.8 L824.8,815.1 L818.7,815.3 L812.7,815.4 L806.6,815.4 L800.6,815.3 L794.6,815.0 L788.7,814.6 L782.9,814.1 L777.1,813.5 L771.5,812.7 L766.0,811.9 L760.6,810.9 L755.4,809.8 L750.4,808.7 L745.6,807.4 L740.9,806.0 L736.5,804.5 L732.2,803.0 L728.3,801.3 L724.5,799.6 L721.0,797.7 L717.8,795.9 L714.9,793.9 L712.2,791.9 L709.8,789.8 L707.7,787.7 L706.0,785.5 L704.5,783.3 L703.3,781.1 L702.5,778.8 L701.9,776.5 L701.7,774.2 M933.8,792.4 L933.8,794.8 L933.3,797.2 L932.6,799.5 L931.6,801.9 L930.2,804.2 L928.6,806.5 L926.6,808.8 L924.3,811.0 L921.8,813.2 L919.0,815.3 L915.9,817.4 L912.5,819.5 L908.9,821.4 L905.0,823.3 L900.9,825.1 L896.5,826.9 L892.0,828.5 L887.2,830.1 L882.3,831.5 L877.2,832.9 L871.9,834.2 L866.5,835.3 L860.9,836.4 L855.2,837.3 L849.5,838.1 L843.6,838.8 L837.7,839.4 L831.7,839.9 L825.7,840.2 L819.6,840.4 L813.6,840.5 L807.6,840.5 L801.6,840.3 L795.6,840.0 L789.7,839.6 L783.9,839.1 L778.2,838.5 L772.6,837.7 L767.1,836.9 L761.8,835.9 L756.6,834.8 L751.6,833.6 L746.8,832.2 L742.1,830.8 L737.7,829.3 L733.5,827.7 L729.5,826.0 L725.8,824.2 L722.3,822.4 L719.1,820.5 L716.2,818.5 L713.5,816.4 L711.2,814.3 L709.1,812.1 L707.3,809.9 L705.9,807.6 L704.7,805.3 L703.9,803.0 L703.3,800.7 L703.1,798.3 M934.2,816.7 L934.1,819.1 L933.7,821.5 L933.0,823.9 L932.0,826.3 L930.6,828.7 L929.0,831.0 L927.0,833.4 L924.8,835.6 L922.2,837.9 L919.4,840.1 L916.3,842.2 L913.0,844.3 L909.4,846.2 L905.5,848.2 L901.4,850.0 L897.1,851.8 L892.6,853.5 L887.8,855.0 L882.9,856.5 L877.8,857.9 L872.5,859.2 L867.1,860.4 L861.6,861.4 L856.0,862.4 L850.2,863.2 L844.4,863.9 L838.5,864.5 L832.5,865.0 L826.5,865.3 L820.5,865.5 L814.5,865.6 L808.5,865.6 L802.5,865.4 L796.6,865.1 L790.8,864.7 L785.0,864.2 L779.3,863.5 L773.7,862.7 L768.3,861.8 L762.9,860.8 L757.8,859.7 L752.8,858.4 L748.0,857.1 L743.4,855.7 L739.0,854.1 L734.8,852.5 L730.8,850.7 L727.1,848.9 L723.7,847.0 L720.5,845.1 L717.5,843.0 L714.9,840.9 L712.5,838.8 L710.5,836.5 L708.7,834.3 L707.3,832.0 L706.1,829.6 L705.3,827.3 L704.7,824.9 L704.5,822.5 M934.6,841.1 L934.5,843.5 L934.1,846.0 L933.4,848.4 L932.4,850.9 L931.0,853.3 L929.4,855.7 L927.4,858.0 L925.2,860.4 L922.7,862.6 L919.9,864.9 L916.8,867.0 L913.5,869.1 L909.9,871.2 L906.0,873.1 L902.0,875.0 L897.7,876.8 L893.1,878.5 L888.4,880.1 L883.5,881.6 L878.5,883.0 L873.2,884.3 L867.8,885.5 L862.3,886.6 L856.7,887.5 L851.0,888.4 L845.2,889.1 L839.3,889.7 L833.4,890.2 L827.4,890.5 L821.4,890.7 L815.4,890.8 L809.5,890.7 L803.5,890.6 L797.6,890.3 L791.8,889.8 L786.0,889.3 L780.4,888.6 L774.8,887.8 L769.4,886.9 L764.1,885.9 L759.0,884.7 L754.0,883.4 L749.2,882.1 L744.6,880.6 L740.2,879.0 L736.1,877.3 L732.1,875.6 L728.4,873.7 L725.0,871.8 L721.8,869.8 L718.9,867.7 L716.3,865.5 L713.9,863.3 L711.9,861.1 L710.1,858.8 L708.6,856.4 L707.5,854.0 L706.7,851.6 L706.1,849.2 L705.9,846.7 M935.0,864.7 L934.9,867.2 L934.5,869.7 L933.8,872.2 L932.8,874.6 L931.4,877.1 L929.8,879.5 L927.9,881.9 L925.6,884.3 L923.1,886.6 L920.3,888.9 L917.3,891.1 L913.9,893.2 L910.4,895.3 L906.5,897.3 L902.5,899.2 L898.2,901.0 L893.7,902.7 L889.0,904.4 L884.1,905.9 L879.1,907.3 L873.9,908.7 L868.5,909.9 L863.0,910.9 L857.4,911.9 L851.7,912.8 L845.9,913.5 L840.1,914.1 L834.2,914.6 L828.3,914.9 L822.3,915.1 L816.3,915.2 L810.4,915.1 L804.5,915.0 L798.6,914.6 L792.8,914.2 L787.1,913.6 L781.4,912.9 L775.9,912.1 L770.5,911.2 L765.2,910.1 L760.1,908.9 L755.1,907.6 L750.4,906.2 L745.8,904.7 L741.4,903.1 L737.3,901.4 L733.4,899.6 L729.7,897.7 L726.3,895.7 L723.1,893.7 L720.2,891.5 L717.6,889.4 L715.2,887.1 L713.2,884.8 L711.4,882.5 L710.0,880.1 L708.9,877.6 L708.0,875.2 L707.5,872.7 L707.3,870.2 M935.4,887.4 L935.3,889.9 L934.9,892.5 L934.2,895.0 L933.1,897.5 L931.8,900.0 L930.2,902.5 L928.3,905.0 L926.0,907.4 L923.5,909.7 L920.8,912.0 L917.7,914.2 L914.4,916.4 L910.8,918.5 L907.0,920.5 L903.0,922.5 L898.7,924.3 L894.2,926.1 L889.6,927.7 L884.7,929.3 L879.7,930.7 L874.5,932.1 L869.2,933.3 L863.7,934.4 L858.1,935.4 L852.4,936.2 L846.7,937.0 L840.9,937.6 L835.0,938.1 L829.1,938.4 L823.1,938.6 L817.2,938.7 L811.3,938.6 L805.4,938.4 L799.5,938.1 L793.7,937.6 L788.0,937.1 L782.4,936.4 L776.9,935.5 L771.5,934.5 L766.3,933.5 L761.2,932.3 L756.3,930.9 L751.5,929.5 L747.0,928.0 L742.6,926.3 L738.5,924.6 L734.6,922.7 L730.9,920.8 L727.5,918.8 L724.3,916.7 L721.5,914.5 L718.9,912.3 L716.5,910.0 L714.5,907.7 L712.7,905.3 L711.3,902.8 L710.2,900.4 L709.3,897.9 L708.8,895.4 L708.6,892.8 M935.7,910.0 L935.6,912.6 L935.2,915.2 L934.5,917.8 L933.5,920.3 L932.2,922.9 L930.6,925.4 L928.6,927.9 L926.4,930.3 L924.0,932.7 L921.2,935.0 L918.1,937.3 L914.8,939.5 L911.3,941.7 L907.5,943.7 L903.5,945.7 L899.2,947.6 L894.8,949.3 L890.1,951.0 L885.3,952.6 L880.3,954.1 L875.1,955.4 L869.8,956.7 L864.4,957.8 L858.8,958.8 L853.2,959.6 L847.4,960.4 L841.6,961.0 L835.8,961.4 L829.9,961.8 L824.0,962.0 L818.1,962.1 L812.2,962.0 L806.3,961.8 L800.5,961.5 L794.7,961.0 L789.0,960.4 L783.4,959.7 L777.9,958.8 L772.6,957.8 L767.3,956.7 L762.3,955.5 L757.4,954.1 L752.6,952.7 L748.1,951.1 L743.8,949.4 L739.7,947.7 L735.8,945.8 L732.1,943.8 L728.7,941.8 L725.6,939.6 L722.7,937.4 L720.1,935.2 L717.8,932.8 L715.8,930.4 L714.0,928.0 L712.6,925.5 L711.5,923.0 L710.6,920.5 L710.1,917.9 L709.9,915.3 M936.1,932.8 L936.0,935.4 L935.6,938.0 L934.9,940.6 L933.9,943.2 L932.6,945.8 L931.0,948.4 L929.0,950.9 L926.8,953.4 L924.4,955.8 L921.6,958.2 L918.6,960.5 L915.3,962.7 L911.8,964.9 L908.0,967.0 L904.0,969.0 L899.8,970.9 L895.3,972.7 L890.7,974.4 L885.9,976.0 L880.9,977.5 L875.7,978.8 L870.4,980.1 L865.0,981.2 L859.5,982.2 L853.9,983.1 L848.2,983.9 L842.4,984.5 L836.6,984.9 L830.7,985.3 L824.8,985.5 L818.9,985.6 L813.0,985.5 L807.2,985.3 L801.4,984.9 L795.7,984.5 L790.0,983.8 L784.4,983.1 L779.0,982.2 L773.6,981.2 L768.4,980.1 L763.4,978.8 L758.5,977.4 L753.8,976.0 L749.3,974.4 L744.9,972.6 L740.9,970.8 L737.0,968.9 L733.3,966.9 L730.0,964.8 L726.8,962.7 L724.0,960.4 L721.4,958.1 L719.1,955.7 L717.1,953.3 L715.3,950.8 L713.9,948.3 L712.8,945.8 L711.9,943.2 L711.4,940.6 L711.2,937.9 M928.4,463.9 L936.3,959.3 M924.0,471.1 L932.4,970.2 M914.2,478.0 L923.4,980.6 M899.3,484.3 L909.8,990.0 M880.1,489.8 L892.3,997.9 M857.4,494.1 L871.5,1004.0 M832.3,497.1 L848.6,1007.9 M806.1,498.6 L824.5,1009.5 M779.8,498.6 L800.4,1008.7 M754.8,497.0 L777.5,1005.6 M732.1,494.0 L756.7,1000.3 M713.0,489.6 L739.1,993.1 M698.2,484.2 L725.6,984.2 M688.4,477.8 L716.6,974.1 M684.2,470.9 L712.7,963.3 M928.8,490.8 L928.5,461.8 M929.2,518.2 L929.0,488.6 M929.6,544.3 L929.4,515.9 M930.1,570.3 L929.8,541.9 M930.5,596.3 L930.2,567.9 M930.9,622.4 L930.7,593.9 M931.3,648.5 L931.1,619.9 M931.7,673.4 L931.5,645.9 M932.1,697.9 L931.9,670.8 M932.5,722.3 L932.3,695.2 M932.9,746.6 L932.7,719.5 M933.3,771.0 L933.1,743.8 M933.7,795.4 L933.5,768.2 M934.1,819.7 L933.8,792.4 M934.5,844.1 L934.2,816.7 M934.8,867.8 L934.6,841.1 M935.2,890.5 L935.0,864.7 M935.6,913.2 L935.4,887.4 M935.9,936.0 L935.7,910.0 M936.3,959.3 L936.1,932.8 M924.5,498.1 L928.4,463.9 M924.9,525.8 L928.8,490.8 M925.4,552.1 L929.2,518.2 M925.8,578.2 L929.6,544.3 M926.3,604.5 L930.1,570.3 M926.7,630.8 L930.5,596.3 M927.2,657.1 L930.9,622.4 M927.6,682.2 L931.3,648.5 M928.0,706.9 L931.7,673.4 M928.4,731.4 L932.1,697.9 M928.8,755.9 L932.5,722.3 M929.2,780.5 L932.9,746.6 M929.6,805.1 L933.3,771.0 M930.0,829.6 L933.7,795.4 M930.5,854.2 L934.1,819.7 M930.9,878.0 L934.5,844.1 M931.2,901.0 L934.8,867.8 M931.6,923.8 L935.2,890.5 M932.0,946.8 L935.6,913.2 M932.4,970.2 L935.9,936.0 M914.7,505.2 L924.0,471.1 M915.2,533.1 L924.5,498.1 M915.7,559.5 L924.9,525.8 M916.2,585.9 L925.4,552.1 M916.7,612.4 L925.8,578.2 M917.2,638.8 L926.3,604.5 M917.7,665.3 L926.7,630.8 M918.1,690.6 L927.2,657.1 M918.6,715.4 L927.6,682.2 M919.0,740.1 L928.0,706.9 M919.5,764.8 L928.4,731.4 M919.9,789.6 L928.8,755.9 M920.4,814.3 L929.2,780.5 M920.8,839.0 L929.6,805.1 M921.3,863.8 L930.0,829.6 M921.7,887.8 L930.5,854.2 M922.2,910.9 L930.9,878.0 M922.6,933.9 L931.2,901.0 M923.0,957.0 L931.6,923.8 M923.4,980.6 L932.0,946.8 M899.9,511.7 L914.2,478.0 M900.5,539.7 L914.7,505.2 M901.0,566.4 L915.2,533.1 M901.6,592.9 L915.7,559.5 M902.1,619.5 L916.2,585.9 M902.7,646.1 L916.7,612.4 M903.3,672.7 L917.2,638.8 M903.8,698.2 L917.7,665.3 M904.3,723.2 L918.1,690.6 M904.8,748.1 L918.6,715.4 M905.3,772.9 L919.0,740.1 M905.9,797.8 L919.5,764.8 M906.4,822.7 L919.9,789.6 M906.9,847.5 L920.4,814.3 M907.4,872.4 L920.8,839.0 M907.9,896.6 L921.3,863.8 M908.4,919.8 L921.7,887.8 M908.9,943.0 L922.2,910.9 M909.3,966.2 L922.6,933.9 M909.8,990.0 L923.0,957.0 M880.8,517.3 L899.3,484.3 M881.4,545.5 L899.9,511.7 M882.1,572.2 L900.5,539.7 M882.7,598.9 L901.0,566.4 M883.4,625.6 L901.6,592.9 M884.0,652.4 L902.1,619.5 M884.6,679.1 L902.7,646.1 M885.3,704.7 L903.3,672.7 M885.9,729.8 L903.8,698.2 M886.5,754.8 L904.3,723.2 M887.1,779.7 L904.8,748.1 M887.7,804.8 L905.3,772.9 M888.3,829.8 L905.9,797.8 M888.9,854.7 L906.4,822.7 M889.4,879.8 L906.9,847.5 M890.0,904.0 L907.4,872.4 M890.6,927.4 L907.9,896.6 M891.1,950.7 L908.4,919.8 M891.7,974.0 L908.9,943.0 M892.3,997.9 L909.3,966.2 M858.2,521.7 L880.1,489.8 M859.0,550.0 L880.8,517.3 M859.7,576.8 L881.4,545.5 M860.5,603.6 L882.1,572.2 M861.2,630.4 L882.7,598.9 M861.9,657.2 L883.4,625.6 M862.7,684.1 L884.0,652.4 M863.4,709.7 L884.6,679.1 M864.1,735.0 L885.3,704.7 M864.8,760.0 L885.9,729.8 M865.5,785.1 L886.5,754.8 M866.2,810.2 L887.1,779.7 M866.9,835.2 L887.7,804.8 M867.6,860.3 L888.3,829.8 M868.3,885.4 L888.9,854.7 M868.9,909.8 L889.4,879.8 M869.6,933.2 L890.0,904.0 M870.2,956.6 L890.6,927.4 M870.8,980.0 L891.1,950.7 M871.5,1004.0 L891.7,974.0 M833.2,524.8 L857.4,494.1 M834.1,553.1 L858.2,521.7 M835.0,580.0 L859.0,550.0 M835.8,606.8 L859.7,576.8 M836.7,633.6 L860.5,603.6 M837.6,660.5 L861.2,630.4 M838.4,687.4 L861.9,657.2 M839.2,713.1 L862.7,684.1 M840.0,738.4 L863.4,709.7 M840.8,763.5 L864.1,735.0 M841.6,788.6 L864.8,760.0 M842.4,813.8 L865.5,785.1 M843.2,838.9 L866.2,810.2 M844.0,863.9 L866.9,835.2 M844.8,889.1 L867.6,860.3 M845.6,913.5 L868.3,885.4 M846.3,937.0 L868.9,909.8 M847.1,960.4 L869.6,933.2 M847.8,983.9 L870.2,956.6 M848.6,1007.9 L870.8,980.0 M807.1,526.3 L832.3,497.1 M808.1,554.6 L833.2,524.8 M809.1,581.5 L834.1,553.1 M810.0,608.3 L835.0,580.0 M811.0,635.2 L835.8,606.8 M812.0,662.1 L836.7,633.6 M813.0,689.0 L837.6,660.5 M813.9,714.7 L838.4,687.4 M814.8,740.0 L839.2,713.1 M815.7,765.1 L840.0,738.4 M816.6,790.2 L840.8,763.5 M817.5,815.4 L841.6,788.6 M818.4,840.4 L842.4,813.8 M819.3,865.5 L843.2,838.9 M820.2,890.7 L844.0,863.9 M821.1,915.1 L844.8,889.1 M821.9,938.6 L845.6,913.5 M822.8,962.0 L846.3,937.0 M823.6,985.5 L847.1,960.4 M824.5,1009.5 L847.8,983.9 M780.9,526.3 L806.1,498.6 M782.1,554.5 L807.1,526.3 M783.2,581.4 L808.1,554.6 M784.2,608.1 L809.1,581.5 M785.3,635.0 L810.0,608.3 M786.4,661.8 L811.0,635.2 M787.5,688.7 L812.0,662.1 M788.5,714.3 L813.0,689.0 M789.6,739.6 L813.9,714.7 M790.6,764.7 L814.8,740.0 M791.6,789.7 L815.7,765.1 M792.6,814.9 L816.6,790.2 M793.6,839.9 L817.5,815.4 M794.6,865.0 L818.4,840.4 M795.6,890.1 L819.3,865.5 M796.6,914.5 L820.2,890.7 M797.6,938.0 L821.1,915.1 M798.5,961.3 L821.9,938.6 M799.5,984.8 L822.8,962.0 M800.4,1008.7 L823.6,985.5 M756.0,524.6 L779.8,498.6 M757.3,552.8 L780.9,526.3 M758.5,579.5 L782.1,554.5 M759.7,606.2 L783.2,581.4 M760.9,633.0 L784.2,608.1 M762.0,659.8 L785.3,635.0 M763.2,686.5 L786.4,661.8 M764.4,712.1 L787.5,688.7 M765.5,737.3 L788.5,714.3 M766.6,762.3 L789.6,739.6 M767.7,787.3 L790.6,764.7 M768.9,812.3 L791.6,789.7 M770.0,837.3 L792.6,814.9 M771.1,862.3 L793.6,839.9 M772.2,887.4 L794.6,865.0 M773.3,911.7 L795.6,890.1 M774.3,935.1 L796.6,914.5 M775.4,958.4 L797.6,938.0 M776.4,981.7 L798.5,961.3 M777.5,1005.6 L799.5,984.8 M733.5,521.4 L754.8,497.0 M734.8,549.5 L756.0,524.6 M736.1,576.1 L757.3,552.8 M737.4,602.7 L758.5,579.5 M738.7,629.3 L759.7,606.2 M740.0,656.0 L760.9,633.0 M741.3,682.6 L762.0,659.8 M742.6,708.1 L763.2,686.5 M743.8,733.2 L764.4,712.1 M745.0,758.0 L765.5,737.3 M746.2,782.9 L766.6,762.3 M747.4,807.9 L767.7,787.3 M748.6,832.8 L768.9,812.3 M749.8,857.6 L770.0,837.3 M751.0,882.6 L771.1,862.3 M752.2,906.8 L772.2,887.4 M753.3,930.1 L773.3,911.7 M754.4,953.3 L774.3,935.1 M755.6,976.5 L775.4,958.4 M756.7,1000.3 L776.4,981.7 M714.4,516.9 L732.1,494.0 M715.9,544.8 L733.5,521.4 M717.2,571.3 L734.8,549.5 M718.6,597.7 L736.1,576.1 M720.0,624.2 L737.4,602.7 M721.4,650.7 L738.7,629.3 M722.7,677.2 L740.0,656.0 M724.1,702.5 L741.3,682.6 M725.4,727.4 L742.6,708.1 M726.6,752.2 L743.8,733.2 M727.9,776.9 L745.0,758.0 M729.2,801.7 L746.2,782.9 M730.5,826.4 L747.4,807.9 M731.8,851.2 L748.6,832.8 M733.1,876.0 L749.8,857.6 M734.3,900.0 L751.0,882.6 M735.5,923.2 L752.2,906.8 M736.7,946.3 L753.3,930.1 M737.9,969.4 L754.4,953.3 M739.1,993.1 L755.6,976.5 M699.7,511.3 L713.0,489.6 M701.2,538.9 L714.4,516.9 M702.6,565.3 L715.9,544.8 M704.1,591.5 L717.2,571.3 M705.5,617.8 L718.6,597.7 M707.0,644.1 L720.0,624.2 M708.4,670.4 L721.4,650.7 M709.8,695.6 L722.7,677.2 M711.1,720.3 L724.1,702.5 M712.5,744.9 L725.4,727.4 M713.8,769.5 L726.6,752.2 M715.2,794.1 L727.9,776.9 M716.5,818.7 L729.2,801.7 M717.9,843.2 L730.5,826.4 M719.2,867.9 L731.8,851.2 M720.5,891.8 L733.1,876.0 M721.8,914.8 L734.3,900.0 M723.0,937.7 L735.5,923.2 M724.3,960.7 L736.7,946.3 M725.6,984.2 L737.9,969.4 M690.0,504.7 L698.2,484.2 M691.5,532.2 L699.7,511.3 M693.0,558.3 L701.2,538.9 M694.5,584.3 L702.6,565.3 M696.0,610.5 L704.1,591.5 M697.5,636.6 L705.5,617.8 M698.9,662.7 L707.0,644.1 M700.4,687.7 L708.4,670.4 M701.8,712.2 L709.8,695.6 M703.1,736.6 L711.1,720.3 M704.5,761.0 L712.5,744.9 M705.9,785.5 L713.8,769.5 M707.3,809.8 L715.2,794.1 M708.7,834.2 L716.5,818.7 M710.1,858.7 L717.9,843.2 M711.4,882.4 L719.2,867.9 M712.7,905.2 L720.5,891.8 M714.0,927.9 L721.8,914.8 M715.3,950.8 L723.0,937.7 M716.6,974.1 L724.3,960.7 M685.8,497.6 L688.4,477.8 M687.3,524.8 L690.0,504.7 M688.8,550.7 L691.5,532.2 M690.3,576.6 L693.0,558.3 M691.8,602.5 L694.5,584.3 M693.3,628.4 L696.0,610.5 M694.8,654.3 L697.5,636.6 M696.3,679.1 L698.9,662.7 M697.7,703.5 L700.4,687.7 M699.1,727.6 L701.8,712.2 M700.5,751.8 L703.1,736.6 M701.9,776.1 L704.5,761.0 M703.3,800.3 L705.9,785.5 M704.7,824.5 L707.3,809.8 M706.1,848.8 L708.7,834.2 M707.4,872.3 L710.1,858.7 M708.7,894.9 L711.4,882.4 M710.0,917.5 L712.7,905.2 M711.3,940.1 L714.0,927.9 M712.7,963.3 L715.3,950.8 M685.6,496.1 L684.2,470.9 M687.2,523.3 L685.8,497.6 M688.7,549.2 L687.3,524.8 M690.2,575.0 L688.8,550.7 M691.7,600.8 L690.3,576.6 M693.2,626.7 L691.8,602.5 M694.7,652.6 L693.3,628.4 M696.1,677.3 L694.8,654.3 M697.5,701.7 L696.3,679.1 M698.9,725.8 L697.7,703.5 M700.3,749.9 L699.1,727.6 M701.7,774.2 L700.5,751.8 M703.1,798.3 L701.9,776.1 M704.5,822.5 L703.3,800.3 M705.9,846.7 L704.7,824.5 M707.3,870.2 L706.1,848.8 M708.6,892.8 L707.4,872.3 M709.9,915.3 L708.7,894.9 M711.2,937.9 L710.0,917.5 M712.5,961.0 L711.3,940.1" fill="none" stroke="#6a6a6a" stroke-width="1.0"/>
<path d="M928.5,461.8 L928.3,464.1 L927.5,466.4 L926.1,468.7 L924.1,471.0 L921.5,473.3 L918.4,475.5 L914.7,477.7 L910.5,479.8 L905.8,481.9 L900.6,483.9 L895.0,485.7 L888.9,487.5 L882.4,489.2 L875.5,490.8 L868.3,492.2 L860.8,493.6 L853.1,494.7 L845.1,495.8 L836.9,496.7 L828.5,497.4 L820.1,498.0 L811.6,498.4 L803.1,498.7 L794.6,498.8 L786.1,498.7 L777.7,498.5 L769.5,498.2 L761.5,497.6 L753.6,496.9 L746.1,496.1 L738.8,495.1 L731.9,494.0 L725.3,492.7 L719.1,491.3 L713.3,489.7 L708.0,488.1 L703.2,486.3 L698.9,484.5 L695.1,482.5 L691.8,480.5 L689.1,478.4 L686.9,476.2 L685.4,474.0 L684.4,471.7 L684.1,469.4 L684.3,467.1 L685.1,464.8 L686.5,462.5 L688.5,460.2 L691.1,457.9 L694.2,455.7 L697.9,453.5 L702.1,451.4 L706.8,449.3 L712.0,447.3 L717.6,445.5 L723.7,443.7 L730.2,442.0 L737.1,440.4 L744.3,439.0 L751.8,437.6 L759.5,436.5 L767.5,435.4 L775.7,434.5 L784.1,433.8 L792.5,433.2 L801.0,432.8 L809.5,432.5 L818.0,432.4 L826.5,432.5 L834.9,432.7 L843.1,433.0 L851.1,433.6 L859.0,434.3 L866.5,435.1 L873.8,436.1 L880.7,437.2 L887.3,438.5 L893.5,439.9 L899.3,441.5 L904.6,443.1 L909.4,444.9 L913.7,446.7 L917.5,448.7 L920.8,450.7 L923.5,452.8 L925.7,455.0 L927.2,457.2 L928.2,459.5 L928.5,461.8 Z" fill="#535353"/>
<path d="M830.7,464.8 L830.6,465.5 L830.3,466.2 L829.6,466.9 L828.7,467.6 L827.6,468.2 L826.2,468.9 L824.6,469.4 L822.8,470.0 L820.8,470.5 L818.7,470.9 L816.4,471.3 L814.1,471.6 L811.6,471.9 L809.1,472.1 L806.5,472.2 L804.0,472.2 L801.4,472.2 L798.9,472.1 L796.5,471.9 L794.3,471.7 L792.1,471.4 L790.1,471.0 L788.3,470.6 L786.6,470.1 L785.2,469.6 L784.1,469.0 L783.1,468.4 L782.4,467.7 L782.0,467.1 L781.9,466.4 L782.0,465.7 L782.3,465.0 L783.0,464.3 L783.9,463.6 L785.0,463.0 L786.4,462.3 L788.0,461.8 L789.8,461.2 L791.8,460.7 L793.9,460.3 L796.2,459.9 L798.5,459.6 L801.0,459.3 L803.5,459.1 L806.1,459.0 L808.6,459.0 L811.2,459.0 L813.7,459.1 L816.1,459.3 L818.3,459.5 L820.5,459.8 L822.5,460.2 L824.3,460.6 L826.0,461.1 L827.4,461.6 L828.5,462.2 L829.5,462.8 L830.2,463.5 L830.6,464.1 L830.7,464.8 M855.2,464.1 L855.0,465.5 L854.2,466.8 L852.9,468.2 L851.1,469.6 L848.9,470.9 L846.1,472.1 L842.9,473.3 L839.3,474.4 L835.4,475.4 L831.1,476.3 L826.6,477.0 L821.8,477.7 L816.9,478.2 L811.8,478.6 L806.7,478.8 L801.6,478.9 L796.5,478.8 L791.6,478.6 L786.8,478.3 L782.2,477.8 L777.9,477.2 L773.9,476.4 L770.2,475.6 L767.0,474.6 L764.2,473.5 L761.8,472.4 L759.9,471.1 L758.6,469.8 L757.7,468.5 L757.4,467.1 L757.6,465.7 L758.4,464.4 L759.7,463.0 L761.5,461.6 L763.7,460.3 L766.5,459.1 L769.7,457.9 L773.3,456.8 L777.2,455.8 L781.5,454.9 L786.0,454.2 L790.8,453.5 L795.7,453.0 L800.8,452.6 L805.9,452.4 L811.0,452.3 L816.1,452.4 L821.0,452.6 L825.8,452.9 L830.4,453.4 L834.7,454.0 L838.7,454.8 L842.4,455.6 L845.6,456.6 L848.4,457.7 L850.8,458.8 L852.7,460.1 L854.0,461.4 L854.9,462.7 L855.2,464.1 M879.6,463.3 L879.3,465.4 L878.2,467.5 L876.2,469.5 L873.6,471.5 L870.1,473.5 L866.0,475.4 L861.2,477.1 L855.8,478.8 L849.9,480.3 L843.5,481.6 L836.7,482.7 L829.6,483.7 L822.2,484.5 L814.6,485.0 L806.9,485.4 L799.3,485.5 L791.7,485.4 L784.2,485.1 L777.0,484.6 L770.2,483.9 L763.7,483.0 L757.7,481.8 L752.2,480.6 L747.3,479.1 L743.1,477.5 L739.6,475.8 L736.7,473.9 L734.7,472.0 L733.4,470.0 L733.0,467.9 L733.3,465.8 L734.4,463.7 L736.4,461.7 L739.0,459.7 L742.5,457.7 L746.6,455.8 L751.4,454.1 L756.8,452.4 L762.7,450.9 L769.1,449.6 L775.9,448.5 L783.0,447.5 L790.4,446.7 L798.0,446.2 L805.7,445.8 L813.3,445.7 L820.9,445.8 L828.4,446.1 L835.6,446.6 L842.4,447.3 L848.9,448.2 L854.9,449.4 L860.4,450.6 L865.3,452.1 L869.5,453.7 L873.0,455.4 L875.9,457.3 L877.9,459.2 L879.2,461.2 L879.6,463.3 M904.1,462.5 L903.6,465.3 L902.1,468.1 L899.6,470.8 L896.0,473.5 L891.4,476.1 L885.9,478.6 L879.5,481.0 L872.4,483.2 L864.5,485.1 L855.9,486.9 L846.8,488.5 L837.3,489.7 L827.4,490.8 L817.3,491.5 L807.1,492.0 L796.9,492.2 L786.8,492.0 L776.9,491.6 L767.3,491.0 L758.1,490.0 L749.5,488.8 L741.5,487.3 L734.2,485.5 L727.7,483.6 L722.0,481.5 L717.3,479.1 L713.6,476.7 L710.8,474.1 L709.1,471.4 L708.5,468.7 L709.0,465.9 L710.5,463.1 L713.0,460.4 L716.6,457.7 L721.2,455.1 L726.7,452.6 L733.1,450.2 L740.2,448.0 L748.1,446.1 L756.7,444.3 L765.8,442.7 L775.3,441.5 L785.2,440.4 L795.3,439.7 L805.5,439.2 L815.7,439.0 L825.8,439.2 L835.7,439.6 L845.3,440.2 L854.5,441.2 L863.1,442.4 L871.1,443.9 L878.4,445.7 L884.9,447.6 L890.6,449.7 L895.3,452.1 L899.0,454.5 L901.8,457.1 L903.5,459.8 L904.1,462.5 M806.3,465.6 L830.7,464.8 L806.3,465.6 M806.3,465.6 L830.2,466.3 L806.3,465.6 M806.3,465.6 L828.4,467.8 L806.3,465.6 M806.3,465.6 L825.5,469.1 L806.3,465.6 M806.3,465.6 L821.7,470.3 L806.3,465.6 M806.3,465.6 L817.1,471.2 L806.3,465.6 M806.3,465.6 L811.9,471.9 L806.3,465.6 M806.3,465.6 L806.5,472.2 L806.3,465.6 M806.3,465.6 L801.1,472.2 L806.3,465.6 M806.3,465.6 L795.9,471.9 L806.3,465.6 M806.3,465.6 L791.2,471.2 L806.3,465.6 M806.3,465.6 L787.3,470.3 L806.3,465.6 M806.3,465.6 L784.4,469.2 L806.3,465.6 M806.3,465.6 L782.5,467.8 L806.3,465.6 M806.3,465.6 L781.9,466.4 L806.3,465.6 M806.3,465.6 L782.4,464.9 L806.3,465.6 M806.3,465.6 L784.2,463.4 L806.3,465.6 M806.3,465.6 L787.1,462.1 L806.3,465.6 M806.3,465.6 L790.9,460.9 L806.3,465.6 M806.3,465.6 L795.5,460.0 L806.3,465.6 M806.3,465.6 L800.7,459.3 L806.3,465.6 M806.3,465.6 L806.1,459.0 L806.3,465.6 M806.3,465.6 L811.5,459.0 L806.3,465.6 M806.3,465.6 L816.7,459.3 L806.3,465.6 M806.3,465.6 L821.4,460.0 L806.3,465.6 M806.3,465.6 L825.3,460.9 L806.3,465.6 M806.3,465.6 L828.2,462.0 L806.3,465.6 M806.3,465.6 L830.1,463.4 L806.3,465.6 M830.2,466.3 L854.9,465.6 L830.7,464.8 M828.4,467.8 L852.6,468.5 L830.2,466.3 M825.5,469.1 L847.9,471.3 L828.4,467.8 M821.7,470.3 L841.2,473.8 L825.5,469.1 M817.1,471.2 L832.7,476.0 L821.7,470.3 M811.9,471.9 L822.8,477.5 L817.1,471.2 M806.5,472.2 L812.2,478.5 L811.9,471.9 M801.1,472.2 L801.2,478.9 L806.5,472.2 M795.9,471.9 L790.5,478.6 L801.1,472.2 M791.2,471.2 L780.6,477.6 L795.9,471.9 M787.3,470.3 L772.0,476.0 L791.2,471.2 M784.4,469.2 L765.1,473.9 L787.3,470.3 M782.5,467.8 L760.3,471.4 L784.4,469.2 M781.9,466.4 L757.8,468.6 L782.5,467.8 M782.4,464.9 L757.7,465.6 L781.9,466.4 M784.2,463.4 L760.0,462.7 L782.4,464.9 M787.1,462.1 L764.7,459.9 L784.2,463.4 M790.9,460.9 L771.4,457.4 L787.1,462.1 M795.5,460.0 L779.9,455.2 L790.9,460.9 M800.7,459.3 L789.8,453.7 L795.5,460.0 M806.1,459.0 L800.4,452.7 L800.7,459.3 M811.5,459.0 L811.4,452.3 L806.1,459.0 M816.7,459.3 L822.1,452.6 L811.5,459.0 M821.4,460.0 L832.0,453.6 L816.7,459.3 M825.3,460.9 L840.6,455.2 L821.4,460.0 M828.2,462.0 L847.5,457.3 L825.3,460.9 M830.1,463.4 L852.3,459.8 L828.2,462.0 M830.7,464.8 L854.8,462.6 L830.1,463.4 M854.9,465.6 L879.6,463.3 L854.8,462.6 M852.6,468.5 L877.9,467.8 L854.9,465.6 M847.9,471.3 L872.7,472.1 L852.6,468.5 M841.2,473.8 L864.0,476.1 L847.9,471.3 M832.7,476.0 L852.5,479.6 L841.2,473.8 M822.8,477.5 L838.7,482.4 L832.7,476.0 M812.2,478.5 L823.2,484.4 L822.8,477.5 M801.2,478.9 L806.9,485.4 L812.2,478.5 M790.5,478.6 L790.6,485.4 L801.2,478.9 M780.6,477.6 L775.0,484.4 L790.5,478.6 M772.0,476.0 L761.1,482.5 L780.6,477.6 M765.1,473.9 L749.3,479.7 L772.0,476.0 M760.3,471.4 L740.5,476.3 L765.1,473.9 M757.8,468.6 L734.9,472.3 L760.3,471.4 M757.7,465.6 L733.0,467.9 L757.8,468.6 M760.0,462.7 L734.7,463.4 L757.7,465.6 M764.7,459.9 L739.9,459.1 L760.0,462.7 M771.4,457.4 L748.6,455.1 L764.7,459.9 M779.9,455.2 L760.1,451.6 L771.4,457.4 M789.8,453.7 L773.9,448.8 L779.9,455.2 M800.4,452.7 L789.4,446.8 L789.8,453.7 M811.4,452.3 L805.7,445.8 L800.4,452.7 M822.1,452.6 L822.0,445.8 L811.4,452.3 M832.0,453.6 L837.6,446.8 L822.1,452.6 M840.6,455.2 L851.5,448.7 L832.0,453.6 M847.5,457.3 L863.3,451.5 L840.6,455.2 M852.3,459.8 L872.1,454.9 L847.5,457.3 M854.8,462.6 L877.7,458.9 L852.3,459.8 M877.9,467.8 L903.6,465.5 L879.6,463.3 M872.7,472.1 L898.9,471.4 L877.9,467.8 M864.0,476.1 L889.5,477.0 L872.7,472.1 M852.5,479.6 L876.0,482.1 L864.0,476.1 M838.7,482.4 L859.0,486.3 L852.5,479.6 M823.2,484.4 L839.4,489.5 L838.7,482.4 M806.9,485.4 L818.1,491.5 L823.2,484.4 M790.6,485.4 L796.2,492.2 L806.9,485.4 M775.0,484.4 L774.8,491.5 L790.6,485.4 M761.1,482.5 L755.0,489.6 L775.0,484.4 M749.3,479.7 L737.7,486.4 L761.1,482.5 M740.5,476.3 L723.9,482.2 L749.3,479.7 M734.9,472.3 L714.3,477.2 L740.5,476.3 M733.0,467.9 L709.2,471.6 L734.9,472.3 M734.7,463.4 L709.0,465.7 L733.0,467.9 M739.9,459.1 L713.7,459.8 L734.7,463.4 M748.6,455.1 L723.1,454.2 L739.9,459.1 M760.1,451.6 L736.6,449.1 L748.6,455.1 M773.9,448.8 L753.6,444.9 L760.1,451.6 M789.4,446.8 L773.2,441.7 L773.9,448.8 M805.7,445.8 L794.5,439.7 L789.4,446.8 M822.0,445.8 L816.4,439.0 L805.7,445.8 M837.6,446.8 L837.8,439.7 L822.0,445.8 M851.5,448.7 L857.6,441.6 L837.6,446.8 M863.3,451.5 L874.9,444.8 L851.5,448.7 M872.1,454.9 L888.7,449.0 L863.3,451.5 M877.7,458.9 L898.3,454.0 L872.1,454.9 M879.6,463.3 L903.4,459.6 L877.7,458.9 M903.6,465.5 L928.5,461.8 L903.4,459.6 M898.9,471.4 L925.7,469.2 L903.6,465.5 M889.5,477.0 L916.9,476.4 L898.9,471.4 M876.0,482.1 L902.5,483.2 L889.5,477.0 M859.0,486.3 L883.3,489.0 L876.0,482.1 M839.4,489.5 L860.3,493.7 L859.0,486.3 M818.1,491.5 L834.5,496.9 L839.4,489.5 M796.2,492.2 L807.3,498.6 L818.1,491.5 M774.8,491.5 L780.1,498.6 L796.2,492.2 M755.0,489.6 L754.2,497.0 L774.8,491.5 M737.7,486.4 L730.9,493.8 L755.0,489.6 M723.9,482.2 L711.4,489.2 L737.7,486.4 M714.3,477.2 L696.6,483.4 L723.9,482.2 M709.2,471.6 L687.4,476.7 L714.3,477.2 M709.0,465.7 L684.1,469.4 L709.2,471.6 M713.7,459.8 L686.9,462.0 L709.0,465.7 M723.1,454.2 L695.7,454.8 L713.7,459.8 M736.6,449.1 L710.1,448.0 L723.1,454.2 M753.6,444.9 L729.3,442.2 L736.6,449.1 M773.2,441.7 L752.3,437.5 L753.6,444.9 M794.5,439.7 L778.1,434.3 L773.2,441.7 M816.4,439.0 L805.3,432.6 L794.5,439.7 M837.8,439.7 L832.5,432.6 L816.4,439.0 M857.6,441.6 L858.4,434.2 L837.8,439.7 M874.9,444.8 L881.7,437.4 L857.6,441.6 M888.7,449.0 L901.2,442.0 L874.9,444.8 M898.3,454.0 L916.0,447.8 L888.7,449.0 M903.4,459.6 L925.2,454.5 L898.3,454.0" fill="none" stroke="#8a8a8a" stroke-width="0.8"/>
<path d="M928.5,461.8 L928.3,464.1 L927.5,466.4 L926.1,468.7 L924.1,471.0 L921.5,473.3 L918.4,475.5 L914.7,477.7 L910.5,479.8 L905.8,481.9 L900.6,483.9 L895.0,485.7 L888.9,487.5 L882.4,489.2 L875.5,490.8 L868.3,492.2 L860.8,493.6 L853.1,494.7 L845.1,495.8 L836.9,496.7 L828.5,497.4 L820.1,498.0 L811.6,498.4 L803.1,498.7 L794.6,498.8 L786.1,498.7 L777.7,498.5 L769.5,498.2 L761.5,497.6 L753.6,496.9 L746.1,496.1 L738.8,495.1 L731.9,494.0 L725.3,492.7 L719.1,491.3 L713.3,489.7 L708.0,488.1 L703.2,486.3 L698.9,484.5 L695.1,482.5 L691.8,480.5 L689.1,478.4 L686.9,476.2 L685.4,474.0 L684.4,471.7 L684.1,469.4 L684.3,467.1 L685.1,464.8 L686.5,462.5 L688.5,460.2 L691.1,457.9 L694.2,455.7 L697.9,453.5 L702.1,451.4 L706.8,449.3 L712.0,447.3 L717.6,445.5 L723.7,443.7 L730.2,442.0 L737.1,440.4 L744.3,439.0 L751.8,437.6 L759.5,436.5 L767.5,435.4 L775.7,434.5 L784.1,433.8 L792.5,433.2 L801.0,432.8 L809.5,432.5 L818.0,432.4 L826.5,432.5 L834.9,432.7 L843.1,433.0 L851.1,433.6 L859.0,434.3 L866.5,435.1 L873.8,436.1 L880.7,437.2 L887.3,438.5 L893.5,439.9 L899.3,441.5 L904.6,443.1 L909.4,444.9 L913.7,446.7 L917.5,448.7 L920.8,450.7 L923.5,452.8 L925.7,455.0 L927.2,457.2 L928.2,459.5 L928.5,461.8 Z" fill="none" stroke="#6a6a6a" stroke-width="1"/>
<path d="M1063.0,708.0 L1062.9,711.6 L1062.7,715.1 L1062.4,718.7 L1061.9,722.2 L1064.2,726.8 L1064.8,723.3 L1065.3,719.8 L1065.7,716.2 L1066.0,712.6 Z" fill="#282828" stroke="#282828" stroke-width="0.7"/>
<path d="M1066.0,712.6 L1065.7,716.2 L1065.3,719.8 L1064.8,723.3 L1064.2,726.8 L1073.9,732.4 L1074.7,728.6 L1075.4,724.8 L1075.9,721.0 L1076.4,717.2 Z" fill="#6e6e6e" stroke="#6e6e6e" stroke-width="0.7"/>
<path d="M1076.4,717.2 L1075.9,721.0 L1075.4,724.8 L1074.7,728.6 L1073.9,732.4 L1089.4,737.7 L1090.4,733.3 L1091.3,729.0 L1092.0,724.6 L1092.5,720.2 Z" fill="#b3b3b3" stroke="#b3b3b3" stroke-width="0.7"/>
<path d="M1092.5,720.2 L1092.0,724.6 L1091.3,729.0 L1090.4,733.3 L1089.4,737.7 L1108.3,741.0 L1109.4,736.1 L1110.3,731.1 L1111.1,726.0 L1111.7,721.0 Z" fill="#cbcbcb" stroke="#cbcbcb" stroke-width="0.7"/>
<path d="M1111.7,721.0 L1111.1,726.0 L1110.3,731.1 L1109.4,736.1 L1108.3,741.0 L1127.1,742.2 L1128.2,736.6 L1129.2,730.9 L1129.9,725.2 L1130.5,719.5 Z" fill="#d0d0d0" stroke="#d0d0d0" stroke-width="0.7"/>
<path d="M1130.5,719.5 L1129.9,725.2 L1129.2,730.9 L1128.2,736.6 L1127.1,742.2 L1142.5,740.9 L1143.6,734.7 L1144.5,728.6 L1145.2,722.4 L1145.6,716.1 Z" fill="#b8b8b8" stroke="#b8b8b8" stroke-width="0.7"/>
<path d="M1145.6,716.1 L1145.2,722.4 L1144.5,728.6 L1143.6,734.7 L1142.5,740.9 L1152.0,737.5 L1153.0,731.0 L1153.7,724.4 L1154.2,717.9 L1154.5,711.3 Z" fill="#787878" stroke="#787878" stroke-width="0.7"/>
<path d="M1154.5,711.3 L1154.2,717.9 L1153.7,724.4 L1153.0,731.0 L1152.0,737.5 L1154.0,734.7 L1154.9,728.1 L1155.5,721.4 L1155.9,714.7 L1156.0,708.0 Z" fill="#484848" stroke="#484848" stroke-width="0.7"/>
<path d="M1061.9,722.2 L1061.3,725.8 L1060.5,729.3 L1059.6,732.8 L1058.6,736.2 L1060.3,740.7 L1061.4,737.3 L1062.5,733.8 L1063.4,730.3 L1064.2,726.8 Z" fill="#292929" stroke="#292929" stroke-width="0.7"/>
<path d="M1064.2,726.8 L1063.4,730.3 L1062.5,733.8 L1061.4,737.3 L1060.3,740.7 L1069.2,747.1 L1070.6,743.5 L1071.8,739.8 L1072.9,736.1 L1073.9,732.4 Z" fill="#6e6e6e" stroke="#6e6e6e" stroke-width="0.7"/>
<path d="M1073.9,732.4 L1072.9,736.1 L1071.8,739.8 L1070.6,743.5 L1069.2,747.1 L1083.7,754.7 L1085.4,750.5 L1086.9,746.2 L1088.2,742.0 L1089.4,737.7 Z" fill="#b2b2b2" stroke="#b2b2b2" stroke-width="0.7"/>
<path d="M1089.4,737.7 L1088.2,742.0 L1086.9,746.2 L1085.4,750.5 L1083.7,754.7 L1101.9,760.5 L1103.8,755.7 L1105.4,750.9 L1106.9,746.0 L1108.3,741.0 Z" fill="#cccccc" stroke="#cccccc" stroke-width="0.7"/>
<path d="M1108.3,741.0 L1106.9,746.0 L1105.4,750.9 L1103.8,755.7 L1101.9,760.5 L1120.3,764.3 L1122.3,758.9 L1124.1,753.4 L1125.7,747.8 L1127.1,742.2 Z" fill="#d1d1d1" stroke="#d1d1d1" stroke-width="0.7"/>
<path d="M1127.1,742.2 L1125.7,747.8 L1124.1,753.4 L1122.3,758.9 L1120.3,764.3 L1135.8,765.1 L1137.9,759.1 L1139.6,753.1 L1141.2,747.0 L1142.5,740.9 Z" fill="#bababa" stroke="#bababa" stroke-width="0.7"/>
<path d="M1142.5,740.9 L1141.2,747.0 L1139.6,753.1 L1137.9,759.1 L1135.8,765.1 L1145.7,763.3 L1147.6,756.9 L1149.3,750.5 L1150.8,744.0 L1152.0,737.5 Z" fill="#7b7b7b" stroke="#7b7b7b" stroke-width="0.7"/>
<path d="M1152.0,737.5 L1150.8,744.0 L1149.3,750.5 L1147.6,756.9 L1145.7,763.3 L1147.9,761.0 L1149.8,754.5 L1151.5,748.0 L1152.8,741.4 L1154.0,734.7 Z" fill="#4d4d4d" stroke="#4d4d4d" stroke-width="0.7"/>
<path d="M1058.6,736.2 L1057.4,739.6 L1056.1,743.0 L1054.7,746.4 L1053.1,749.7 L1054.3,754.1 L1056.0,750.8 L1057.5,747.5 L1059.0,744.1 L1060.3,740.7 Z" fill="#292929" stroke="#292929" stroke-width="0.7"/>
<path d="M1060.3,740.7 L1059.0,744.1 L1057.5,747.5 L1056.0,750.8 L1054.3,754.1 L1062.4,761.2 L1064.3,757.8 L1066.1,754.3 L1067.7,750.7 L1069.2,747.1 Z" fill="#6e6e6e" stroke="#6e6e6e" stroke-width="0.7"/>
<path d="M1069.2,747.1 L1067.7,750.7 L1066.1,754.3 L1064.3,757.8 L1062.4,761.2 L1075.6,770.9 L1077.8,766.9 L1079.9,762.9 L1081.9,758.8 L1083.7,754.7 Z" fill="#b1b1b1" stroke="#b1b1b1" stroke-width="0.7"/>
<path d="M1083.7,754.7 L1081.9,758.8 L1079.9,762.9 L1077.8,766.9 L1075.6,770.9 L1092.7,779.2 L1095.3,774.6 L1097.7,770.0 L1099.9,765.3 L1101.9,760.5 Z" fill="#cdcdcd" stroke="#cdcdcd" stroke-width="0.7"/>
<path d="M1101.9,760.5 L1099.9,765.3 L1097.7,770.0 L1095.3,774.6 L1092.7,779.2 L1110.4,785.4 L1113.2,780.3 L1115.7,775.0 L1118.1,769.7 L1120.3,764.3 Z" fill="#d3d3d3" stroke="#d3d3d3" stroke-width="0.7"/>
<path d="M1120.3,764.3 L1118.1,769.7 L1115.7,775.0 L1113.2,780.3 L1110.4,785.4 L1125.7,788.3 L1128.5,782.6 L1131.2,776.8 L1133.6,771.0 L1135.8,765.1 Z" fill="#bababa" stroke="#bababa" stroke-width="0.7"/>
<path d="M1135.8,765.1 L1133.6,771.0 L1131.2,776.8 L1128.5,782.6 L1125.7,788.3 L1135.5,788.0 L1138.4,782.0 L1141.1,775.8 L1143.5,769.6 L1145.7,763.3 Z" fill="#7e7e7e" stroke="#7e7e7e" stroke-width="0.7"/>
<path d="M1145.7,763.3 L1143.5,769.6 L1141.1,775.8 L1138.4,782.0 L1135.5,788.0 L1138.0,786.3 L1140.8,780.1 L1143.5,773.8 L1145.8,767.4 L1147.9,761.0 Z" fill="#525252" stroke="#525252" stroke-width="0.7"/>
<path d="M1053.1,749.7 L1051.4,753.0 L1049.6,756.2 L1047.6,759.4 L1045.6,762.5 L1046.3,766.7 L1048.5,763.6 L1050.6,760.5 L1052.5,757.3 L1054.3,754.1 Z" fill="#292929" stroke="#292929" stroke-width="0.7"/>
<path d="M1054.3,754.1 L1052.5,757.3 L1050.6,760.5 L1048.5,763.6 L1046.3,766.7 L1053.6,774.5 L1056.0,771.3 L1058.3,768.0 L1060.4,764.6 L1062.4,761.2 Z" fill="#6f6f6f" stroke="#6f6f6f" stroke-width="0.7"/>
<path d="M1062.4,761.2 L1060.4,764.6 L1058.3,768.0 L1056.0,771.3 L1053.6,774.5 L1065.1,786.1 L1067.9,782.4 L1070.6,778.6 L1073.2,774.8 L1075.6,770.9 Z" fill="#afafaf" stroke="#afafaf" stroke-width="0.7"/>
<path d="M1075.6,770.9 L1073.2,774.8 L1070.6,778.6 L1067.9,782.4 L1065.1,786.1 L1080.9,796.6 L1084.1,792.4 L1087.1,788.0 L1090.0,783.6 L1092.7,779.2 Z" fill="#cecece" stroke="#cecece" stroke-width="0.7"/>
<path d="M1092.7,779.2 L1090.0,783.6 L1087.1,788.0 L1084.1,792.4 L1080.9,796.6 L1097.4,805.2 L1100.9,800.4 L1104.3,795.5 L1107.4,790.5 L1110.4,785.4 Z" fill="#d5d5d5" stroke="#d5d5d5" stroke-width="0.7"/>
<path d="M1110.4,785.4 L1107.4,790.5 L1104.3,795.5 L1100.9,800.4 L1097.4,805.2 L1112.1,810.1 L1115.8,804.8 L1119.3,799.4 L1122.6,793.9 L1125.7,788.3 Z" fill="#bcbcbc" stroke="#bcbcbc" stroke-width="0.7"/>
<path d="M1125.7,788.3 L1122.6,793.9 L1119.3,799.4 L1115.8,804.8 L1112.1,810.1 L1121.8,811.4 L1125.5,805.7 L1129.1,799.9 L1132.4,794.0 L1135.5,788.0 Z" fill="#818181" stroke="#818181" stroke-width="0.7"/>
<path d="M1135.5,788.0 L1132.4,794.0 L1129.1,799.9 L1125.5,805.7 L1121.8,811.4 L1124.3,810.2 L1128.1,804.4 L1131.6,798.5 L1134.9,792.4 L1138.0,786.3 Z" fill="#575757" stroke="#575757" stroke-width="0.7"/>
<path d="M1045.6,762.5 L1043.4,765.6 L1041.1,768.6 L1038.7,771.5 L1036.1,774.4 L1036.6,778.3 L1039.2,775.5 L1041.7,772.6 L1044.1,769.7 L1046.3,766.7 Z" fill="#2a2a2a" stroke="#2a2a2a" stroke-width="0.7"/>
<path d="M1046.3,766.7 L1044.1,769.7 L1041.7,772.6 L1039.2,775.5 L1036.6,778.3 L1043.0,786.8 L1045.8,783.8 L1048.5,780.8 L1051.1,777.7 L1053.6,774.5 Z" fill="#6f6f6f" stroke="#6f6f6f" stroke-width="0.7"/>
<path d="M1053.6,774.5 L1051.1,777.7 L1048.5,780.8 L1045.8,783.8 L1043.0,786.8 L1052.4,800.0 L1055.8,796.7 L1059.0,793.2 L1062.1,789.7 L1065.1,786.1 Z" fill="#aeaeae" stroke="#aeaeae" stroke-width="0.7"/>
<path d="M1065.1,786.1 L1062.1,789.7 L1059.0,793.2 L1055.8,796.7 L1052.4,800.0 L1066.6,812.5 L1070.4,808.7 L1074.0,804.8 L1077.5,800.7 L1080.9,796.6 Z" fill="#cecece" stroke="#cecece" stroke-width="0.7"/>
<path d="M1080.9,796.6 L1077.5,800.7 L1074.0,804.8 L1070.4,808.7 L1066.6,812.5 L1081.6,823.4 L1085.8,819.0 L1089.8,814.5 L1093.7,810.0 L1097.4,805.2 Z" fill="#d6d6d6" stroke="#d6d6d6" stroke-width="0.7"/>
<path d="M1097.4,805.2 L1093.7,810.0 L1089.8,814.5 L1085.8,819.0 L1081.6,823.4 L1095.5,830.1 L1099.9,825.3 L1104.2,820.3 L1108.2,815.3 L1112.1,810.1 Z" fill="#bcbcbc" stroke="#bcbcbc" stroke-width="0.7"/>
<path d="M1112.1,810.1 L1108.2,815.3 L1104.2,820.3 L1099.9,825.3 L1095.5,830.1 L1104.7,832.9 L1109.2,827.7 L1113.6,822.4 L1117.8,816.9 L1121.8,811.4 Z" fill="#838383" stroke="#838383" stroke-width="0.7"/>
<path d="M1121.8,811.4 L1117.8,816.9 L1113.6,822.4 L1109.2,827.7 L1104.7,832.9 L1107.2,832.2 L1111.8,826.9 L1116.2,821.5 L1120.4,815.9 L1124.3,810.2 Z" fill="#5c5c5c" stroke="#5c5c5c" stroke-width="0.7"/>
<path d="M1036.1,774.4 L1033.5,777.1 L1030.7,779.9 L1027.9,782.5 L1024.9,785.1 L1025.1,788.8 L1028.1,786.3 L1031.0,783.7 L1033.8,781.1 L1036.6,778.3 Z" fill="#2a2a2a" stroke="#2a2a2a" stroke-width="0.7"/>
<path d="M1036.6,778.3 L1033.8,781.1 L1031.0,783.7 L1028.1,786.3 L1025.1,788.8 L1030.6,797.8 L1033.8,795.2 L1037.0,792.5 L1040.0,789.7 L1043.0,786.8 Z" fill="#6f6f6f" stroke="#6f6f6f" stroke-width="0.7"/>
<path d="M1043.0,786.8 L1040.0,789.7 L1037.0,792.5 L1033.8,795.2 L1030.6,797.8 L1037.8,812.4 L1041.6,809.5 L1045.4,806.4 L1049.0,803.3 L1052.4,800.0 Z" fill="#adadad" stroke="#adadad" stroke-width="0.7"/>
<path d="M1052.4,800.0 L1049.0,803.3 L1045.4,806.4 L1041.6,809.5 L1037.8,812.4 L1050.0,826.7 L1054.3,823.4 L1058.6,819.9 L1062.6,816.3 L1066.6,812.5 Z" fill="#cfcfcf" stroke="#cfcfcf" stroke-width="0.7"/>
<path d="M1066.6,812.5 L1062.6,816.3 L1058.6,819.9 L1054.3,823.4 L1050.0,826.7 L1063.2,839.5 L1068.0,835.7 L1072.7,831.7 L1077.2,827.6 L1081.6,823.4 Z" fill="#d8d8d8" stroke="#d8d8d8" stroke-width="0.7"/>
<path d="M1081.6,823.4 L1077.2,827.6 L1072.7,831.7 L1068.0,835.7 L1063.2,839.5 L1076.0,848.0 L1081.1,843.7 L1086.1,839.3 L1090.9,834.8 L1095.5,830.1 Z" fill="#bebebe" stroke="#bebebe" stroke-width="0.7"/>
<path d="M1095.5,830.1 L1090.9,834.8 L1086.1,839.3 L1081.1,843.7 L1076.0,848.0 L1084.5,852.1 L1089.8,847.5 L1094.9,842.8 L1099.9,837.9 L1104.7,832.9 Z" fill="#868686" stroke="#868686" stroke-width="0.7"/>
<path d="M1104.7,832.9 L1099.9,837.9 L1094.9,842.8 L1089.8,847.5 L1084.5,852.1 L1086.9,852.0 L1092.3,847.3 L1097.4,842.4 L1102.4,837.4 L1107.2,832.2 Z" fill="#616161" stroke="#616161" stroke-width="0.7"/>
<path d="M1024.9,785.1 L1021.9,787.6 L1018.7,790.0 L1015.5,792.3 L1012.1,794.5 L1012.1,798.0 L1015.5,795.9 L1018.8,793.6 L1022.0,791.3 L1025.1,788.8 Z" fill="#2b2b2b" stroke="#2b2b2b" stroke-width="0.7"/>
<path d="M1025.1,788.8 L1022.0,791.3 L1018.8,793.6 L1015.5,795.9 L1012.1,798.0 L1016.7,807.5 L1020.3,805.2 L1023.8,802.8 L1027.2,800.4 L1030.6,797.8 Z" fill="#6f6f6f" stroke="#6f6f6f" stroke-width="0.7"/>
<path d="M1030.6,797.8 L1027.2,800.4 L1023.8,802.8 L1020.3,805.2 L1016.7,807.5 L1021.5,823.2 L1025.7,820.6 L1029.9,818.0 L1033.9,815.3 L1037.8,812.4 Z" fill="#ababab" stroke="#ababab" stroke-width="0.7"/>
<path d="M1037.8,812.4 L1033.9,815.3 L1029.9,818.0 L1025.7,820.6 L1021.5,823.2 L1031.5,838.9 L1036.3,836.1 L1041.0,833.1 L1045.6,830.0 L1050.0,826.7 Z" fill="#d0d0d0" stroke="#d0d0d0" stroke-width="0.7"/>
<path d="M1050.0,826.7 L1045.6,830.0 L1041.0,833.1 L1036.3,836.1 L1031.5,838.9 L1042.6,853.4 L1048.0,850.2 L1053.2,846.8 L1058.3,843.2 L1063.2,839.5 Z" fill="#d9d9d9" stroke="#d9d9d9" stroke-width="0.7"/>
<path d="M1063.2,839.5 L1058.3,843.2 L1053.2,846.8 L1048.0,850.2 L1042.6,853.4 L1054.1,863.5 L1059.8,859.9 L1065.3,856.1 L1070.7,852.1 L1076.0,848.0 Z" fill="#bebebe" stroke="#bebebe" stroke-width="0.7"/>
<path d="M1076.0,848.0 L1070.7,852.1 L1065.3,856.1 L1059.8,859.9 L1054.1,863.5 L1061.6,868.8 L1067.6,864.9 L1073.4,860.8 L1079.0,856.6 L1084.5,852.1 Z" fill="#898989" stroke="#898989" stroke-width="0.7"/>
<path d="M1084.5,852.1 L1079.0,856.6 L1073.4,860.8 L1067.6,864.9 L1061.6,868.8 L1063.8,869.1 L1069.9,865.1 L1075.7,860.9 L1081.4,856.5 L1086.9,852.0 Z" fill="#656565" stroke="#656565" stroke-width="0.7"/>
<path d="M1012.1,794.5 L1008.7,796.6 L1005.2,798.6 L1001.6,800.6 L998.0,802.4 L997.9,805.8 L1001.5,804.0 L1005.1,802.1 L1008.7,800.1 L1012.1,798.0 Z" fill="#2b2b2b" stroke="#2b2b2b" stroke-width="0.7"/>
<path d="M1012.1,798.0 L1008.7,800.1 L1005.1,802.1 L1001.5,804.0 L997.9,805.8 L1001.4,815.6 L1005.4,813.7 L1009.2,811.7 L1013.0,809.7 L1016.7,807.5 Z" fill="#6f6f6f" stroke="#6f6f6f" stroke-width="0.7"/>
<path d="M1016.7,807.5 L1013.0,809.7 L1009.2,811.7 L1005.4,813.7 L1001.4,815.6 L1003.7,832.0 L1008.3,829.9 L1012.8,827.8 L1017.2,825.5 L1021.5,823.2 Z" fill="#aaaaaa" stroke="#aaaaaa" stroke-width="0.7"/>
<path d="M1021.5,823.2 L1017.2,825.5 L1012.8,827.8 L1008.3,829.9 L1003.7,832.0 L1011.3,849.0 L1016.5,846.7 L1021.6,844.2 L1026.6,841.7 L1031.5,838.9 Z" fill="#d1d1d1" stroke="#d1d1d1" stroke-width="0.7"/>
<path d="M1031.5,838.9 L1026.6,841.7 L1021.6,844.2 L1016.5,846.7 L1011.3,849.0 L1020.2,864.8 L1025.9,862.2 L1031.6,859.5 L1037.2,856.5 L1042.6,853.4 Z" fill="#dbdbdb" stroke="#dbdbdb" stroke-width="0.7"/>
<path d="M1042.6,853.4 L1037.2,856.5 L1031.6,859.5 L1025.9,862.2 L1020.2,864.8 L1030.0,876.3 L1036.2,873.4 L1042.3,870.2 L1048.2,867.0 L1054.1,863.5 Z" fill="#c0c0c0" stroke="#c0c0c0" stroke-width="0.7"/>
<path d="M1054.1,863.5 L1048.2,867.0 L1042.3,870.2 L1036.2,873.4 L1030.0,876.3 L1036.5,882.7 L1043.0,879.5 L1049.3,876.1 L1055.5,872.6 L1061.6,868.8 Z" fill="#8c8c8c" stroke="#8c8c8c" stroke-width="0.7"/>
<path d="M1061.6,868.8 L1055.5,872.6 L1049.3,876.1 L1043.0,879.5 L1036.5,882.7 L1038.4,883.4 L1044.9,880.1 L1051.4,876.6 L1057.7,873.0 L1063.8,869.1 Z" fill="#6a6a6a" stroke="#6a6a6a" stroke-width="0.7"/>
<path d="M998.0,802.4 L994.3,804.1 L990.5,805.8 L986.7,807.3 L982.7,808.7 L982.6,811.9 L986.5,810.5 L990.3,809.0 L994.1,807.5 L997.9,805.8 Z" fill="#2c2c2c" stroke="#2c2c2c" stroke-width="0.7"/>
<path d="M997.9,805.8 L994.1,807.5 L990.3,809.0 L986.5,810.5 L982.6,811.9 L985.2,822.0 L989.3,820.5 L993.4,819.0 L997.5,817.3 L1001.4,815.6 Z" fill="#6f6f6f" stroke="#6f6f6f" stroke-width="0.7"/>
<path d="M1001.4,815.6 L997.5,817.3 L993.4,819.0 L989.3,820.5 L985.2,822.0 L984.8,838.7 L989.6,837.2 L994.4,835.6 L999.1,833.9 L1003.7,832.0 Z" fill="#a9a9a9" stroke="#a9a9a9" stroke-width="0.7"/>
<path d="M1003.7,832.0 L999.1,833.9 L994.4,835.6 L989.6,837.2 L984.8,838.7 L989.8,856.6 L995.3,854.9 L1000.7,853.1 L1006.1,851.1 L1011.3,849.0 Z" fill="#d1d1d1" stroke="#d1d1d1" stroke-width="0.7"/>
<path d="M1011.3,849.0 L1006.1,851.1 L1000.7,853.1 L995.3,854.9 L989.8,856.6 L996.2,873.5 L1002.3,871.6 L1008.4,869.5 L1014.3,867.3 L1020.2,864.8 Z" fill="#dcdcdc" stroke="#dcdcdc" stroke-width="0.7"/>
<path d="M1020.2,864.8 L1014.3,867.3 L1008.4,869.5 L1002.3,871.6 L996.2,873.5 L1004.3,886.2 L1010.9,884.0 L1017.4,881.6 L1023.7,879.0 L1030.0,876.3 Z" fill="#c0c0c0" stroke="#c0c0c0" stroke-width="0.7"/>
<path d="M1030.0,876.3 L1023.7,879.0 L1017.4,881.6 L1010.9,884.0 L1004.3,886.2 L1009.5,893.4 L1016.4,891.0 L1023.2,888.4 L1029.9,885.7 L1036.5,882.7 Z" fill="#8e8e8e" stroke="#8e8e8e" stroke-width="0.7"/>
<path d="M1036.5,882.7 L1029.9,885.7 L1023.2,888.4 L1016.4,891.0 L1009.5,893.4 L1011.0,894.4 L1018.0,892.0 L1024.9,889.3 L1031.7,886.4 L1038.4,883.4 Z" fill="#6f6f6f" stroke="#6f6f6f" stroke-width="0.7"/>
<path d="M982.7,808.7 L978.8,810.0 L974.8,811.2 L970.7,812.3 L966.6,813.3 L966.5,816.4 L970.6,815.4 L974.6,814.4 L978.6,813.2 L982.6,811.9 Z" fill="#2c2c2c" stroke="#2c2c2c" stroke-width="0.7"/>
<path d="M982.6,811.9 L978.6,813.2 L974.6,814.4 L970.6,815.4 L966.5,816.4 L968.1,826.6 L972.4,825.6 L976.7,824.5 L981.0,823.3 L985.2,822.0 Z" fill="#707070" stroke="#707070" stroke-width="0.7"/>
<path d="M985.2,822.0 L981.0,823.3 L976.7,824.5 L972.4,825.6 L968.1,826.6 L965.0,843.4 L970.0,842.4 L974.9,841.3 L979.9,840.1 L984.8,838.7 Z" fill="#a7a7a7" stroke="#a7a7a7" stroke-width="0.7"/>
<path d="M984.8,838.7 L979.9,840.1 L974.9,841.3 L970.0,842.4 L965.0,843.4 L967.4,861.8 L973.1,860.7 L978.7,859.5 L984.3,858.1 L989.8,856.6 Z" fill="#d2d2d2" stroke="#d2d2d2" stroke-width="0.7"/>
<path d="M989.8,856.6 L984.3,858.1 L978.7,859.5 L973.1,860.7 L967.4,861.8 L971.2,879.4 L977.5,878.2 L983.8,876.8 L990.0,875.3 L996.2,873.5 Z" fill="#dedede" stroke="#dedede" stroke-width="0.7"/>
<path d="M996.2,873.5 L990.0,875.3 L983.8,876.8 L977.5,878.2 L971.2,879.4 L977.4,892.9 L984.2,891.5 L991.0,889.9 L997.7,888.2 L1004.3,886.2 Z" fill="#c2c2c2" stroke="#c2c2c2" stroke-width="0.7"/>
<path d="M1004.3,886.2 L997.7,888.2 L991.0,889.9 L984.2,891.5 L977.4,892.9 L981.1,900.8 L988.3,899.3 L995.4,897.5 L1002.5,895.6 L1009.5,893.4 Z" fill="#919191" stroke="#919191" stroke-width="0.7"/>
<path d="M1009.5,893.4 L1002.5,895.6 L995.4,897.5 L988.3,899.3 L981.1,900.8 L982.2,902.1 L989.5,900.5 L996.8,898.7 L1003.9,896.7 L1011.0,894.4 Z" fill="#747474" stroke="#747474" stroke-width="0.7"/>
<path d="M966.6,813.3 L962.5,814.2 L958.4,814.9 L954.2,815.5 L950.0,816.1 L949.8,819.1 L954.0,818.6 L958.2,817.9 L962.3,817.2 L966.5,816.4 Z" fill="#2c2c2c" stroke="#2c2c2c" stroke-width="0.7"/>
<path d="M966.5,816.4 L962.3,817.2 L958.2,817.9 L954.0,818.6 L949.8,819.1 L950.4,829.4 L954.9,828.9 L959.3,828.3 L963.7,827.5 L968.1,826.6 Z" fill="#707070" stroke="#707070" stroke-width="0.7"/>
<path d="M968.1,826.6 L963.7,827.5 L959.3,828.3 L954.9,828.9 L950.4,829.4 L944.6,845.8 L949.8,845.4 L954.9,844.9 L959.9,844.2 L965.0,843.4 Z" fill="#a6a6a6" stroke="#a6a6a6" stroke-width="0.7"/>
<path d="M965.0,843.4 L959.9,844.2 L954.9,844.9 L949.8,845.4 L944.6,845.8 L944.4,864.4 L950.2,864.0 L956.0,863.4 L961.7,862.7 L967.4,861.8 Z" fill="#d3d3d3" stroke="#d3d3d3" stroke-width="0.7"/>
<path d="M967.4,861.8 L961.7,862.7 L956.0,863.4 L950.2,864.0 L944.4,864.4 L945.5,882.4 L951.9,881.9 L958.4,881.3 L964.8,880.4 L971.2,879.4 Z" fill="#e0e0e0" stroke="#e0e0e0" stroke-width="0.7"/>
<path d="M971.2,879.4 L964.8,880.4 L958.4,881.3 L951.9,881.9 L945.5,882.4 L949.6,896.5 L956.6,895.9 L963.6,895.1 L970.5,894.1 L977.4,892.9 Z" fill="#c2c2c2" stroke="#c2c2c2" stroke-width="0.7"/>
<path d="M977.4,892.9 L970.5,894.1 L963.6,895.1 L956.6,895.9 L949.6,896.5 L951.9,904.8 L959.3,904.2 L966.6,903.3 L973.9,902.2 L981.1,900.8 Z" fill="#949494" stroke="#949494" stroke-width="0.7"/>
<path d="M981.1,900.8 L973.9,902.2 L966.6,903.3 L959.3,904.2 L951.9,904.8 L952.5,906.2 L960.0,905.5 L967.5,904.6 L974.9,903.5 L982.2,902.1 Z" fill="#797979" stroke="#797979" stroke-width="0.7"/>
<path d="M950.0,816.1 L945.7,816.5 L941.5,816.8 L937.3,816.9 L933.0,817.0 L932.9,820.0 L937.1,819.9 L941.4,819.7 L945.6,819.5 L949.8,819.1 Z" fill="#2d2d2d" stroke="#2d2d2d" stroke-width="0.7"/>
<path d="M949.8,819.1 L945.6,819.5 L941.4,819.7 L937.1,819.9 L932.9,820.0 L932.5,830.3 L937.0,830.3 L941.5,830.1 L946.0,829.8 L950.4,829.4 Z" fill="#707070" stroke="#707070" stroke-width="0.7"/>
<path d="M950.4,829.4 L946.0,829.8 L941.5,830.1 L937.0,830.3 L932.5,830.3 L924.1,845.9 L929.3,846.1 L934.4,846.2 L939.5,846.0 L944.6,845.8 Z" fill="#a5a5a5" stroke="#a5a5a5" stroke-width="0.7"/>
<path d="M944.6,845.8 L939.5,846.0 L934.4,846.2 L929.3,846.1 L924.1,845.9 L921.2,864.4 L927.0,864.6 L932.8,864.7 L938.6,864.6 L944.4,864.4 Z" fill="#d4d4d4" stroke="#d4d4d4" stroke-width="0.7"/>
<path d="M944.4,864.4 L938.6,864.6 L932.8,864.7 L927.0,864.6 L921.2,864.4 L919.5,882.3 L926.0,882.6 L932.5,882.7 L939.0,882.6 L945.5,882.4 Z" fill="#e1e1e1" stroke="#e1e1e1" stroke-width="0.7"/>
<path d="M945.5,882.4 L939.0,882.6 L932.5,882.7 L926.0,882.6 L919.5,882.3 L921.6,896.8 L928.6,897.1 L935.6,897.1 L942.6,896.9 L949.6,896.5 Z" fill="#c4c4c4" stroke="#c4c4c4" stroke-width="0.7"/>
<path d="M949.6,896.5 L942.6,896.9 L935.6,897.1 L928.6,897.1 L921.6,896.8 L922.4,905.3 L929.7,905.5 L937.1,905.5 L944.5,905.3 L951.9,904.8 Z" fill="#979797" stroke="#979797" stroke-width="0.7"/>
<path d="M951.9,904.8 L944.5,905.3 L937.1,905.5 L929.7,905.5 L922.4,905.3 L922.5,906.8 L930.0,907.0 L937.5,907.0 L945.0,906.7 L952.5,906.2 Z" fill="#7e7e7e" stroke="#7e7e7e" stroke-width="0.7"/>
<path d="M1066.0,712.6 L1065.6,716.9 L1065.1,721.2 L1064.4,725.4 L1063.6,729.6 L1062.5,733.8 L1061.2,738.0 L1059.8,742.1 L1058.1,746.1 L1056.3,750.1 L1054.3,754.1 L1052.1,757.9 L1049.7,761.7 L1047.2,765.4 L1044.5,769.1 L1041.7,772.6 L1038.7,776.1 L1035.5,779.4 L1032.2,782.7 L1028.7,785.8 L1025.1,788.8 L1021.3,791.7 L1017.5,794.5 L1013.5,797.2 L1009.4,799.7 L1005.1,802.1 L1000.8,804.3 L996.4,806.4 L991.9,808.4 L987.3,810.2 L982.6,811.9 L977.8,813.4 L973.0,814.8 L968.1,816.0 L963.2,817.1 L958.2,817.9 L953.2,818.7 L948.1,819.2 L943.1,819.6 L938.0,819.9 L932.9,820.0 M1076.4,717.2 L1075.8,721.8 L1075.1,726.3 L1074.2,730.9 L1073.1,735.3 L1071.8,739.8 L1070.3,744.2 L1068.6,748.5 L1066.8,752.8 L1064.7,757.1 L1062.4,761.2 L1060.0,765.3 L1057.4,769.3 L1054.6,773.2 L1051.6,777.1 L1048.5,780.8 L1045.2,784.4 L1041.8,788.0 L1038.2,791.4 L1034.5,794.7 L1030.6,797.8 L1026.5,800.9 L1022.4,803.8 L1018.1,806.6 L1013.7,809.2 L1009.2,811.7 L1004.6,814.1 L999.9,816.3 L995.0,818.3 L990.1,820.2 L985.2,822.0 L980.1,823.6 L975.0,825.0 L969.8,826.2 L964.6,827.3 L959.3,828.3 L954.0,829.0 L948.6,829.6 L943.3,830.0 L937.9,830.2 L932.5,830.3 M1092.5,720.2 L1091.8,725.4 L1091.0,730.7 L1089.8,735.9 L1088.5,741.1 L1086.9,746.2 L1085.1,751.3 L1083.0,756.3 L1080.8,761.3 L1078.3,766.1 L1075.6,770.9 L1072.7,775.6 L1069.6,780.2 L1066.2,784.6 L1062.7,789.0 L1059.0,793.2 L1055.1,797.4 L1051.1,801.3 L1046.8,805.2 L1042.4,808.9 L1037.8,812.4 L1033.1,815.8 L1028.2,819.1 L1023.2,822.2 L1018.0,825.1 L1012.8,827.8 L1007.4,830.4 L1001.9,832.7 L996.2,834.9 L990.5,836.9 L984.8,838.7 L978.9,840.4 L973.0,841.8 L967.0,843.0 L960.9,844.0 L954.9,844.9 L948.7,845.5 L942.6,845.9 L936.4,846.1 L930.3,846.1 L924.1,845.9 M1111.7,721.0 L1111.0,727.0 L1110.0,733.1 L1108.7,739.0 L1107.2,745.0 L1105.4,750.9 L1103.4,756.7 L1101.1,762.4 L1098.6,768.1 L1095.8,773.7 L1092.7,779.2 L1089.5,784.5 L1085.9,789.8 L1082.2,794.9 L1078.2,799.9 L1074.0,804.8 L1069.6,809.5 L1065.0,814.0 L1060.2,818.4 L1055.2,822.7 L1050.0,826.7 L1044.6,830.6 L1039.1,834.3 L1033.4,837.8 L1027.6,841.1 L1021.6,844.2 L1015.5,847.1 L1009.2,849.8 L1002.9,852.3 L996.4,854.6 L989.8,856.6 L983.2,858.4 L976.5,860.0 L969.7,861.4 L962.8,862.5 L956.0,863.4 L949.0,864.1 L942.1,864.5 L935.1,864.7 L928.2,864.6 L921.2,864.4 M1130.5,719.5 L1129.8,726.4 L1128.8,733.2 L1127.5,740.0 L1126.0,746.7 L1124.1,753.4 L1121.9,760.0 L1119.5,766.5 L1116.7,772.9 L1113.7,779.2 L1110.4,785.4 L1106.8,791.5 L1102.9,797.5 L1098.8,803.3 L1094.5,809.0 L1089.8,814.5 L1085.0,819.9 L1079.9,825.1 L1074.5,830.1 L1069.0,834.9 L1063.2,839.5 L1057.3,844.0 L1051.1,848.2 L1044.8,852.2 L1038.3,855.9 L1031.6,859.5 L1024.8,862.8 L1017.8,865.8 L1010.7,868.7 L1003.5,871.2 L996.2,873.5 L988.8,875.6 L981.3,877.4 L973.7,879.0 L966.1,880.2 L958.4,881.3 L950.6,882.0 L942.9,882.5 L935.1,882.7 L927.3,882.6 L919.5,882.3 M1145.6,716.1 L1145.0,723.6 L1144.2,731.0 L1143.0,738.4 L1141.5,745.8 L1139.6,753.1 L1137.5,760.3 L1135.0,767.4 L1132.2,774.5 L1129.1,781.4 L1125.7,788.3 L1121.9,795.0 L1117.9,801.5 L1113.6,808.0 L1109.0,814.2 L1104.2,820.3 L1099.0,826.2 L1093.7,832.0 L1088.0,837.5 L1082.1,842.9 L1076.0,848.0 L1069.7,852.9 L1063.1,857.6 L1056.4,862.1 L1049.4,866.3 L1042.3,870.2 L1035.0,874.0 L1027.5,877.4 L1019.9,880.6 L1012.2,883.5 L1004.3,886.2 L996.3,888.5 L988.3,890.6 L980.1,892.4 L971.9,893.9 L963.6,895.1 L955.2,896.1 L946.8,896.7 L938.4,897.0 L930.0,897.1 L921.6,896.8 M1154.5,711.3 L1154.2,719.2 L1153.5,727.1 L1152.4,734.9 L1151.1,742.7 L1149.3,750.5 L1147.2,758.2 L1144.8,765.8 L1142.1,773.3 L1139.0,780.7 L1135.5,788.0 L1131.8,795.2 L1127.7,802.2 L1123.3,809.1 L1118.6,815.8 L1113.6,822.4 L1108.3,828.7 L1102.8,834.9 L1096.9,840.9 L1090.8,846.6 L1084.5,852.1 L1077.9,857.4 L1071.1,862.5 L1064.0,867.3 L1056.8,871.8 L1049.3,876.1 L1041.7,880.2 L1033.9,883.9 L1025.9,887.4 L1017.7,890.5 L1009.5,893.4 L1001.1,896.0 L992.6,898.3 L984.0,900.3 L975.3,901.9 L966.6,903.3 L957.8,904.3 L949.0,905.0 L940.1,905.5 L931.2,905.6 L922.4,905.3 M933.0,817.0 L932.8,821.5 L932.7,826.0 L932.5,830.5 L929.5,835.0 L926.0,839.4 L924.5,843.8 L923.8,848.3 L923.1,852.7 L922.4,857.2 L921.7,861.7 L920.8,866.1 L919.3,870.6 L918.3,875.0 L919.1,879.6 L919.9,884.1 L920.8,888.7 L921.3,893.2 L921.7,897.7 L922.1,902.3 L922.5,906.8 M1063.0,708.0 L1066.0,712.6 L1065.6,717.7 L1062.4,718.1 L1064.0,727.7 L1060.8,728.0 L1061.4,737.5 L1058.0,737.8 L1057.7,747.1 L1054.2,747.4 L1053.0,756.4 L1049.4,756.6 L1047.4,765.2 L1043.5,765.4 L1040.8,773.7 L1036.7,773.7 L1033.3,781.5 L1029.1,781.4 L1025.1,788.8 L1020.6,788.6 L1016.1,795.5 L1011.3,795.0 L1006.4,801.4 L1001.4,800.7 L996.1,806.6 L990.9,805.6 L985.3,810.9 L980.0,809.6 L974.1,814.5 L968.6,812.8 L962.6,817.2 L956.9,815.1 L950.8,819.0 L945.0,816.5 L938.9,819.9 L933.0,817.0 L932.9,820.0 M1066.0,712.6 L1076.4,717.2 L1065.6,717.7 L1074.8,727.9 L1064.0,727.7 L1072.2,738.5 L1061.4,737.5 L1068.5,748.8 L1057.7,747.1 L1063.8,758.8 L1053.0,756.4 L1058.0,768.4 L1047.4,765.2 L1051.3,777.5 L1040.8,773.7 L1043.6,786.1 L1033.3,781.5 L1035.1,794.1 L1025.1,788.8 L1025.8,801.4 L1016.1,795.5 L1015.8,808.0 L1006.4,801.4 L1005.1,813.8 L996.1,806.6 L993.9,818.8 L985.3,810.9 L982.2,822.9 L974.1,814.5 L970.1,826.2 L962.6,817.2 L957.7,828.5 L950.8,819.0 L945.2,829.9 L938.9,819.9 L932.9,820.0 L932.5,830.3 M1076.4,717.2 L1092.5,720.2 L1091.7,726.4 L1074.8,727.9 L1089.1,738.7 L1072.2,738.5 L1085.3,750.7 L1068.5,748.8 L1080.2,762.4 L1063.8,758.8 L1073.9,773.7 L1058.0,768.4 L1066.4,784.4 L1051.3,777.5 L1057.9,794.5 L1043.6,786.1 L1048.3,803.9 L1035.1,794.1 L1037.8,812.4 L1025.8,801.4 L1026.5,820.2 L1015.8,808.0 L1014.3,827.0 L1005.1,813.8 L1001.5,832.9 L993.9,818.8 L988.2,837.7 L982.2,822.9 L974.4,841.5 L970.1,826.2 L960.2,844.1 L957.7,828.5 L945.9,845.7 L945.2,829.9 L931.4,846.2 L932.5,830.3 L924.1,845.9 M1092.5,720.2 L1111.7,721.0 L1091.7,726.4 L1109.6,735.2 L1089.1,738.7 L1106.0,749.1 L1085.3,750.7 L1101.0,762.8 L1080.2,762.4 L1094.6,775.9 L1073.9,773.7 L1086.8,788.5 L1066.4,784.4 L1077.7,800.5 L1057.9,794.5 L1067.5,811.6 L1048.3,803.9 L1056.1,821.9 L1037.8,812.4 L1043.7,831.3 L1026.5,820.2 L1030.3,839.6 L1014.3,827.0 L1016.2,846.8 L1001.5,832.9 L1001.4,852.9 L988.2,837.7 L985.9,857.7 L974.4,841.5 L970.1,861.3 L960.2,844.1 L953.9,863.6 L945.9,845.7 L937.6,864.6 L931.4,846.2 L924.1,845.9 L921.2,864.4 M1111.7,721.0 L1130.5,719.5 L1129.6,727.6 L1109.6,735.2 L1126.8,743.5 L1106.0,749.1 L1122.2,759.2 L1101.0,762.8 L1116.0,774.4 L1094.6,775.9 L1108.3,789.0 L1086.8,788.5 L1099.1,803.0 L1077.7,800.5 L1088.4,816.1 L1067.5,811.6 L1076.4,828.4 L1056.1,821.9 L1063.2,839.5 L1043.7,831.3 L1048.9,849.6 L1030.3,839.6 L1033.6,858.4 L1016.2,846.8 L1017.4,866.0 L1001.4,852.9 L1000.5,872.2 L985.9,857.7 L983.1,877.0 L970.1,861.3 L965.2,880.4 L953.9,863.6 L947.0,882.3 L937.6,864.6 L928.7,882.7 L921.2,864.4 L919.5,882.3 M1130.5,719.5 L1145.6,716.1 L1129.6,727.6 L1143.8,733.6 L1126.8,743.5 L1140.2,750.9 L1122.2,759.2 L1134.8,767.9 L1116.0,774.4 L1127.7,784.3 L1108.3,789.0 L1118.9,800.0 L1099.1,803.0 L1108.5,815.0 L1088.4,816.1 L1096.5,829.0 L1076.4,828.4 L1083.2,842.0 L1063.2,839.5 L1068.5,853.8 L1048.9,849.6 L1052.7,864.3 L1033.6,858.4 L1035.9,873.5 L1017.4,866.0 L1018.1,881.3 L1000.5,872.2 L999.6,887.6 L983.1,877.0 L980.6,892.3 L965.2,880.4 L961.1,895.4 L947.0,882.3 L941.4,897.0 L928.7,882.7 L919.5,882.3 L921.6,896.8 M1145.6,716.1 L1154.5,711.3 L1154.1,720.6 L1143.8,733.6 L1151.8,739.1 L1140.2,750.9 L1147.5,757.3 L1134.8,767.9 L1141.4,775.1 L1127.7,784.3 L1133.4,792.3 L1118.9,800.0 L1123.6,808.7 L1108.5,815.0 L1112.1,824.3 L1096.5,829.0 L1099.0,838.8 L1083.2,842.0 L1084.5,852.1 L1068.5,853.8 L1068.6,864.2 L1052.7,864.3 L1051.5,874.9 L1035.9,873.5 L1033.4,884.1 L1018.1,881.3 L1014.4,891.8 L999.6,887.6 L994.6,897.8 L980.6,892.3 L974.3,902.1 L961.1,895.4 L953.6,904.7 L941.4,897.0 L932.8,905.6 L921.6,896.8 L922.4,905.3 M1154.5,711.3 L1156.0,708.0 L1154.1,720.6 L1155.0,726.9 L1151.8,739.1 L1152.0,745.7 L1147.5,757.3 L1147.0,764.0 L1141.4,775.1 L1140.0,781.9 L1133.4,792.3 L1131.2,799.2 L1123.6,808.7 L1120.6,815.6 L1112.1,824.3 L1108.3,831.0 L1099.0,838.8 L1094.4,845.3 L1084.5,852.1 L1079.1,858.4 L1068.6,864.2 L1062.4,870.1 L1051.5,874.9 L1044.6,880.3 L1033.4,884.1 L1025.7,889.0 L1014.4,891.8 L1006.0,896.0 L994.6,897.8 L985.7,901.4 L974.3,902.1 L964.8,905.0 L953.6,904.7 L943.7,906.8 L932.8,905.6 L922.4,905.3 L922.5,906.8" fill="none" stroke="#6a6a6a" stroke-width="0.8"/>
<path d="M1156.0,708.0 L1155.8,716.0 L1155.3,724.1 L1154.4,732.1 L1153.1,740.1 L1151.5,748.0 L1149.5,755.8 L1147.1,763.6 L1144.4,771.3 L1141.4,778.9 L1138.0,786.3 L1134.3,793.6 L1130.2,800.8 L1125.9,807.9 L1121.2,814.8 L1116.2,821.5 L1110.9,828.0 L1105.3,834.3 L1099.5,840.4 L1093.3,846.3 L1086.9,852.0 L1080.3,857.4 L1073.4,862.6 L1066.3,867.6 L1058.9,872.2 L1051.4,876.6 L1043.6,880.8 L1035.7,884.6 L1027.6,888.2 L1019.4,891.5 L1011.0,894.4 L1002.5,897.1 L993.9,899.4 L985.1,901.5 L976.3,903.2 L967.5,904.6 L958.5,905.7 L949.5,906.5 L940.5,906.9 L931.5,907.0 L922.5,906.8" fill="none" stroke="#6a6a6a" stroke-width="1"/>
<path d="M612.4 968 V928" stroke="#30f070" stroke-width="1.2"/>
<path d="M608.3 929.6 L612.3 920 L616.3 929.6 Z" fill="#00d010"/>
<path d="M612.5 968 H653" stroke="#2040ff" stroke-width="1.4"/>
<path d="M652 964.3 L661.5 968 L652 971.8 Z" fill="#0000c8"/>
<circle cx="613.7" cy="956.3" r="3.3" fill="#ff1a1a"/>
<text x="615.5" y="923" font-family="Liberation Sans" font-style="italic" font-weight="bold" font-size="16" fill="#00f000">Y</text>
<text x="616.5" y="951" font-family="Liberation Sans" font-style="italic" font-weight="bold" font-size="16" fill="#ff0000">X</text>
<text x="655" y="963" font-family="Liberation Sans" font-style="italic" font-weight="bold" font-size="16" fill="#0000ff">Z</text>
</svg>
<div class="a" style="left:523px;top:51px;width:1px;height:1019px;background:#fff"></div>
<div class="a" style="left:522px;top:1070px;width:887px;height:1px;background:#b9b0a8"></div>
</body></html>
